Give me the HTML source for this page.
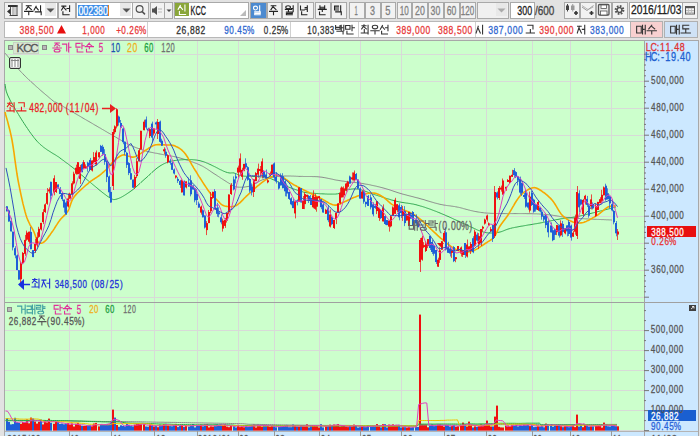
<!DOCTYPE html><html><head><meta charset="utf-8"><style>
html,body{margin:0;padding:0;width:700px;height:436px;overflow:hidden;background:#e2e2e2;font-family:"Liberation Sans",sans-serif;}
</style></head><body>
<div style="position:absolute;left:4px;top:2px;width:16px;height:15px;background:#f2f2f2;border:1px solid #a9a9a9;"></div>
<svg style="position:absolute;left:0;top:0" width="30" height="20"><rect x="8" y="5" width="9.5" height="2" fill="#333"/><rect x="16.5" y="5" width="1" height="11" fill="#444"/><rect x="9.5" y="15" width="8" height="1" fill="#444"/><rect x="10" y="7" width="1" height="8" fill="#555"/><rect x="12.5" y="7" width="1" height="8" fill="#888"/><rect x="14.5" y="7" width="1" height="8" fill="#aaa"/><polygon points="7,11.5 10.5,8.5 10.5,14.5" fill="#333"/></svg>
<div style="position:absolute;left:22px;top:2px;width:34px;height:15px;background:#fff;border:1px solid #a9a9a9;"></div>
<div style="position:absolute;left:45px;top:3px;width:11px;height:13px;background:#e8e8e8;"></div>
<svg style="position:absolute;left:46px;top:8px" width="9" height="5"><polygon points="0.5,0.5 8.5,0.5 4.5,4.5" fill="#555"/></svg>
<div style="position:absolute;left:58px;top:2px;width:16px;height:15px;background:#f2f2f2;border:1px solid #a9a9a9;"></div>
<div style="position:absolute;left:76px;top:2px;width:55px;height:15px;background:#fff;border:1px solid #a9a9a9;"></div>
<div style="position:absolute;left:78px;top:5px;width:31px;height:11px;background:#3d8de8;"></div>
<div style="position:absolute;left:108px;top:5px;width:1px;height:11px;background:#e08020;"></div>
<div style="position:absolute;left:120px;top:3px;width:11px;height:13px;background:#e8e8e8;"></div>
<svg style="position:absolute;left:122px;top:8px" width="9" height="5"><polygon points="0.5,0.5 8.5,0.5 4.5,4.5" fill="#555"/></svg>
<div style="position:absolute;left:132px;top:2px;width:15px;height:15px;background:#f2f2f2;border:1px solid #a9a9a9;"></div>
<svg style="position:absolute;left:132px;top:2px" width="17" height="16"><circle cx="7.6" cy="7" r="3.4" fill="none" stroke="#505050" stroke-width="1.2"/><line x1="10.2" y1="9.6" x2="13" y2="12.4" stroke="#505050" stroke-width="1.5"/></svg>
<div style="position:absolute;left:150px;top:2px;width:13px;height:15px;background:#f2f2f2;border:1px solid #a9a9a9;"></div>
<svg style="position:absolute;left:150px;top:2px" width="15" height="16"><polygon points="2,6.5 4,6.5 7,4 7,13 4,10.5 2,10.5" fill="#505050"/><rect x="8.5" y="6.5" width="1" height="1" fill="#777"/><rect x="10.5" y="6.5" width="1" height="1" fill="#777"/><rect x="8.5" y="9.5" width="1" height="1" fill="#888"/><rect x="10.5" y="9.5" width="1" height="1" fill="#888"/></svg>
<div style="position:absolute;left:164px;top:2px;width:7px;height:15px;background:#f0f0f0;border:1px solid #a9a9a9;"></div>
<svg style="position:absolute;left:166px;top:9px" width="7" height="5"><polygon points="0.5,0.5 5.5,0.5 3,3" fill="#444"/></svg>
<div style="position:absolute;left:174px;top:2px;width:73px;height:15px;background:#fff;border:1px solid #a9a9a9;"></div>
<div style="position:absolute;left:175px;top:3px;width:14px;height:13px;background:#8aa63a;"></div>
<svg style="position:absolute;left:238px;top:9px" width="9" height="8"><polygon points="8,1 8,7 2,7" fill="#bbb"/></svg>
<div style="position:absolute;left:250px;top:2px;width:15px;height:15px;background:#4c8ad0;border:1px solid #a9a9a9;"></div>
<div style="position:absolute;left:267px;top:2px;width:13px;height:15px;background:#f2f2f2;border:1px solid #a9a9a9;"></div>
<div style="position:absolute;left:282px;top:2px;width:14px;height:15px;background:#f2f2f2;border:1px solid #a9a9a9;"></div>
<div style="position:absolute;left:298px;top:2px;width:14px;height:15px;background:#f2f2f2;border:1px solid #a9a9a9;"></div>
<div style="position:absolute;left:315px;top:2px;width:14px;height:15px;background:#f2f2f2;border:1px solid #a9a9a9;"></div>
<div style="position:absolute;left:331px;top:2px;width:14px;height:15px;background:#f2f2f2;border:1px solid #a9a9a9;"></div>
<div style="position:absolute;left:349px;top:2px;width:14px;height:15px;background:#f2f2f2;border:1px solid #a9a9a9;"></div>
<div style="position:absolute;left:365px;top:2px;width:14px;height:15px;background:#f2f2f2;border:1px solid #a9a9a9;"></div>
<div style="position:absolute;left:381px;top:2px;width:13px;height:15px;background:#f2f2f2;border:1px solid #a9a9a9;"></div>
<div style="position:absolute;left:397px;top:2px;width:13px;height:15px;background:#f2f2f2;border:1px solid #a9a9a9;"></div>
<div style="position:absolute;left:412px;top:2px;width:14px;height:15px;background:#f2f2f2;border:1px solid #a9a9a9;"></div>
<div style="position:absolute;left:428px;top:2px;width:14px;height:15px;background:#f2f2f2;border:1px solid #a9a9a9;"></div>
<div style="position:absolute;left:444px;top:2px;width:14px;height:15px;background:#f2f2f2;border:1px solid #a9a9a9;"></div>
<div style="position:absolute;left:460px;top:2px;width:14px;height:15px;background:#f2f2f2;border:1px solid #a9a9a9;"></div>
<div style="position:absolute;left:477px;top:2px;width:30px;height:15px;background:#f0f0f0;border:1px solid #a9a9a9;"></div>
<div style="position:absolute;left:496px;top:3px;width:11px;height:13px;background:#e8e8e8;"></div>
<svg style="position:absolute;left:497px;top:8px" width="9" height="5"><polygon points="0.5,0.5 8.5,0.5 4.5,4.5" fill="#aaa"/></svg>
<div style="position:absolute;left:510px;top:2px;width:23px;height:15px;background:#fff;border:1px solid #a9a9a9;"></div>
<div style="position:absolute;left:564px;top:2px;width:14px;height:15px;background:#f2f2f2;border:1px solid #a9a9a9;"></div>
<div style="position:absolute;left:580px;top:2px;width:14px;height:15px;background:#f2f2f2;border:1px solid #a9a9a9;"></div>
<div style="position:absolute;left:596px;top:2px;width:14px;height:15px;background:#f2f2f2;border:1px solid #a9a9a9;"></div>
<div style="position:absolute;left:612px;top:2px;width:14px;height:15px;background:#f2f2f2;border:1px solid #a9a9a9;"></div>
<svg style="position:absolute;left:564px;top:2px" width="64" height="16"><line x1="3.5" y1="2" x2="3.5" y2="9.5" stroke="#444"/><rect x="2" y="3.5" width="3" height="4.5" fill="#444"/><line x1="8.75" y1="2" x2="8.75" y2="9.5" stroke="#999"/><rect x="7" y="3.5" width="3.5" height="4.5" fill="#999"/><path d="M10 11h4M12 9v4" stroke="#333" stroke-width="1.6"/><path d="M18 5 L23 8.5 L29.5 3.5" fill="none" stroke="#999" stroke-width="1"/><path d="M18 3.5 L24 7.5 L29.5 5" fill="none" stroke="#aaa" stroke-width="0.8"/><path d="M25.5 11h4M27.5 9v4" stroke="#333" stroke-width="1.6"/><rect x="34.5" y="2.5" width="10.5" height="10.5" rx="1" fill="#e8e8e8" stroke="#555" stroke-width="1.3"/><rect x="37" y="3" width="5.5" height="3.5" fill="#fff" stroke="#555" stroke-width="0.8"/><rect x="36.5" y="9" width="6.5" height="4" fill="#fff" stroke="#555" stroke-width="0.8"/><circle cx="55.5" cy="8" r="3.6" fill="none" stroke="#555" stroke-width="2.6" stroke-dasharray="1.6 1.2"/><circle cx="55.5" cy="8" r="2.4" fill="none" stroke="#555" stroke-width="1.4"/></svg>
<div style="position:absolute;left:629px;top:2px;width:52px;height:15px;background:#fff;border:1px solid #a9a9a9;"></div>
<div style="position:absolute;left:682px;top:2px;width:14px;height:15px;background:#f2f2f2;border:1px solid #a9a9a9;"></div>
<svg style="position:absolute;left:684px;top:4px" width="12" height="12"><rect x="1.5" y="2.5" width="9" height="7.5" fill="#f4f4f4" stroke="#555"/><rect x="1" y="2" width="10" height="2.2" fill="#555"/><line x1="2" y1="6.5" x2="10" y2="6.5" stroke="#aaa" stroke-width="0.8"/><line x1="2" y1="8.3" x2="10" y2="8.3" stroke="#aaa" stroke-width="0.8"/><line x1="4.5" y1="4" x2="4.5" y2="10" stroke="#bbb" stroke-width="0.8"/><line x1="7.5" y1="4" x2="7.5" y2="10" stroke="#bbb" stroke-width="0.8"/></svg>
<div style="position:absolute;left:4px;top:21px;width:625px;height:15px;background:#fff;border:1px solid #b8b8b8;"></div>
<div style="position:absolute;left:147px;top:22px;width:1px;height:15px;background:#d0d0d0;"></div>
<div style="position:absolute;left:290px;top:22px;width:1px;height:15px;background:#d0d0d0;"></div>
<div style="position:absolute;left:358px;top:22px;width:1px;height:15px;background:#d0d0d0;"></div>
<div style="position:absolute;left:475px;top:22px;width:1px;height:15px;background:#d0d0d0;"></div>
<svg style="position:absolute;left:57px;top:25px" width="10" height="9"><polygon points="4.5,0 9,8.5 0,8.5" fill="#e81010"/></svg>
<div style="position:absolute;left:630px;top:21px;width:31px;height:15px;background:#f8d0d0;border:1px solid #b0b0b0;"></div>
<div style="position:absolute;left:664px;top:21px;width:32px;height:15px;background:#cfe2f6;border:1px solid #b0b0b0;"></div>
<svg style="position:absolute;left:0;top:0" width="700" height="436">
<rect x="4" y="40" width="695" height="400" fill="#a8a8a8"/>
<rect x="5" y="41" width="639" height="390" fill="#ccffcc"/>
<rect x="644" y="41" width="54" height="395" fill="#cce8ff"/>
<rect x="5" y="431" width="693" height="5" fill="#cce8ff"/>
<line x1="69.5" y1="41" x2="69.5" y2="431" stroke="#d8dad8" stroke-width="1"/>
<line x1="111.5" y1="41" x2="111.5" y2="431" stroke="#d8dad8" stroke-width="1"/>
<line x1="154.5" y1="41" x2="154.5" y2="431" stroke="#d8dad8" stroke-width="1"/>
<line x1="197.5" y1="41" x2="197.5" y2="431" stroke="#d8dad8" stroke-width="1"/>
<line x1="238.5" y1="41" x2="238.5" y2="431" stroke="#d8dad8" stroke-width="1"/>
<line x1="274.5" y1="41" x2="274.5" y2="431" stroke="#d8dad8" stroke-width="1"/>
<line x1="319.5" y1="41" x2="319.5" y2="431" stroke="#d8dad8" stroke-width="1"/>
<line x1="360.5" y1="41" x2="360.5" y2="431" stroke="#d8dad8" stroke-width="1"/>
<line x1="401.5" y1="41" x2="401.5" y2="431" stroke="#d8dad8" stroke-width="1"/>
<line x1="444.5" y1="41" x2="444.5" y2="431" stroke="#d8dad8" stroke-width="1"/>
<line x1="486.5" y1="41" x2="486.5" y2="431" stroke="#d8dad8" stroke-width="1"/>
<line x1="532.5" y1="41" x2="532.5" y2="431" stroke="#d8dad8" stroke-width="1"/>
<line x1="570.5" y1="41" x2="570.5" y2="431" stroke="#d8dad8" stroke-width="1"/>
<line x1="611.5" y1="41" x2="611.5" y2="431" stroke="#d8dad8" stroke-width="1"/>
<line x1="5" y1="54.5" x2="644" y2="54.5" stroke="#d8dad8" stroke-width="1"/>
<line x1="5" y1="81.5" x2="644" y2="81.5" stroke="#d8dad8" stroke-width="1"/>
<line x1="5" y1="108.5" x2="644" y2="108.5" stroke="#d8dad8" stroke-width="1"/>
<line x1="5" y1="135.5" x2="644" y2="135.5" stroke="#d8dad8" stroke-width="1"/>
<line x1="5" y1="162.5" x2="644" y2="162.5" stroke="#d8dad8" stroke-width="1"/>
<line x1="5" y1="189.5" x2="644" y2="189.5" stroke="#d8dad8" stroke-width="1"/>
<line x1="5" y1="216.5" x2="644" y2="216.5" stroke="#d8dad8" stroke-width="1"/>
<line x1="5" y1="243.5" x2="644" y2="243.5" stroke="#d8dad8" stroke-width="1"/>
<line x1="5" y1="270.5" x2="644" y2="270.5" stroke="#d8dad8" stroke-width="1"/>
<line x1="5" y1="297.5" x2="644" y2="297.5" stroke="#d8dad8" stroke-width="1"/>
<line x1="5" y1="330.5" x2="644" y2="330.5" stroke="#d8dad8" stroke-width="1"/>
<line x1="5" y1="350.5" x2="644" y2="350.5" stroke="#d8dad8" stroke-width="1"/>
<line x1="5" y1="370.5" x2="644" y2="370.5" stroke="#d8dad8" stroke-width="1"/>
<line x1="5" y1="390.5" x2="644" y2="390.5" stroke="#d8dad8" stroke-width="1"/>
<line x1="5" y1="410.5" x2="644" y2="410.5" stroke="#d8dad8" stroke-width="1"/>
<line x1="5" y1="430.5" x2="644" y2="430.5" stroke="#d8dad8" stroke-width="1"/>
<polyline points="5.0,53.0 5.5,53.6 6.2,54.4 6.8,55.2 7.6,56.1 8.4,57.1 9.3,58.2 10.2,59.4 11.2,60.6 12.2,61.8 13.3,63.1 14.4,64.4 15.5,65.7 16.7,67.1 17.9,68.4 19.1,69.8 20.3,71.1 21.5,72.4 22.8,73.7 24.0,75.0 24.9,75.9 25.8,76.7 26.7,77.7 27.7,78.6 28.7,79.6 29.8,80.5 30.8,81.5 31.9,82.5 33.0,83.5 34.2,84.5 35.3,85.6 36.4,86.6 37.6,87.6 38.7,88.6 39.8,89.6 40.9,90.6 42.0,91.5 43.1,92.5 44.2,93.4 45.2,94.3 46.2,95.1 47.2,95.9 48.1,96.7 49.0,97.5 49.8,98.2 50.6,98.8 51.3,99.4 52.0,100.0 53.7,101.4 54.4,102.0 54.5,102.1 54.5,102.0 54.7,101.9 55.4,102.1 57.0,102.9 60.0,104.6 60.6,104.9 61.2,105.3 61.9,105.7 62.7,106.1 63.4,106.6 64.2,107.1 65.0,107.6 65.9,108.1 66.8,108.6 67.7,109.1 68.7,109.7 69.7,110.3 70.7,110.9 71.7,111.5 72.8,112.1 73.9,112.7 75.0,113.4 76.1,114.0 77.2,114.7 78.3,115.3 79.5,116.0 80.7,116.7 81.8,117.4 83.0,118.1 84.2,118.8 85.4,119.5 86.6,120.2 87.8,120.9 88.9,121.5 90.1,122.2 91.3,122.9 92.5,123.6 93.6,124.3 94.8,125.0 95.9,125.6 97.1,126.3 98.2,127.0 99.3,127.6 100.4,128.2 101.4,128.8 102.5,129.5 103.5,130.0 104.5,130.6 105.4,131.2 106.4,131.7 107.3,132.3 108.2,132.8 109.0,133.3 109.8,133.7 110.6,134.2 111.3,134.6 112.0,135.0 113.8,136.1 115.5,137.0 117.0,137.9 118.3,138.7 119.5,139.4 120.6,140.0 121.6,140.6 122.4,141.1 123.2,141.5 124.0,141.9 124.7,142.3 125.4,142.7 126.1,143.1 126.8,143.4 127.5,143.8 128.3,144.2 129.1,144.6 130.0,145.0 131.1,145.5 132.1,146.0 133.2,146.4 134.2,146.9 135.2,147.3 136.2,147.7 137.2,148.1 138.2,148.4 139.2,148.8 140.2,149.1 141.2,149.5 142.2,149.8 143.2,150.1 144.1,150.4 145.1,150.7 146.0,151.0 147.0,151.3 148.1,151.6 149.0,151.8 150.0,152.0 150.9,152.3 151.8,152.4 152.8,152.6 153.7,152.8 154.6,153.0 155.6,153.2 156.6,153.3 157.7,153.5 158.8,153.8 160.0,154.0 160.9,154.2 161.8,154.3 162.7,154.5 163.6,154.7 164.6,154.9 165.6,155.0 166.6,155.2 167.6,155.4 168.6,155.6 169.6,155.8 170.7,155.9 171.7,156.1 172.8,156.3 173.8,156.5 174.9,156.8 175.9,157.0 176.9,157.2 178.0,157.5 179.0,157.7 180.0,158.0 181.0,158.3 182.0,158.6 183.1,158.9 184.1,159.2 185.1,159.5 186.2,159.8 187.2,160.2 188.3,160.5 189.3,160.9 190.4,161.2 191.4,161.6 192.4,161.9 193.4,162.3 194.4,162.7 195.4,163.1 196.4,163.4 197.3,163.8 198.2,164.2 199.1,164.6 200.0,165.0 201.2,165.6 202.3,166.1 203.4,166.7 204.4,167.3 205.4,167.9 206.4,168.5 207.3,169.1 208.3,169.8 209.2,170.4 210.1,171.0 211.1,171.7 212.0,172.3 213.0,173.0 214.0,173.6 215.0,174.3 216.1,174.9 217.2,175.7 218.3,176.4 219.4,177.1 220.5,177.9 221.6,178.6 222.7,179.3 223.8,180.0 224.9,180.7 225.9,181.3 226.8,181.9 227.7,182.5 228.6,183.0 229.9,183.8 231.0,184.5 232.0,185.1 232.9,185.7 233.8,186.1 234.7,186.5 235.8,186.8 237.0,187.0 237.9,187.1 238.8,187.2 239.7,187.2 240.7,187.2 241.7,187.2 242.7,187.2 243.8,187.1 244.9,187.0 245.9,186.8 247.0,186.7 248.0,186.5 249.0,186.3 250.0,186.0 251.0,185.7 252.1,185.3 253.1,184.8 254.1,184.3 255.1,183.7 256.1,183.1 257.1,182.5 258.0,182.0 259.0,181.4 260.0,180.9 261.0,180.4 262.0,180.0 263.0,179.6 264.0,179.3 265.0,179.0 266.0,178.7 267.0,178.4 268.0,178.2 269.0,178.0 270.0,177.7 271.0,177.5 272.0,177.3 273.0,177.2 274.0,177.0 275.0,176.8 276.0,176.7 277.0,176.6 277.9,176.5 278.9,176.4 279.9,176.3 280.9,176.2 281.9,176.2 282.9,176.1 283.9,176.1 284.9,176.0 286.0,176.0 286.9,176.0 287.8,176.0 288.8,176.0 289.7,176.0 290.6,176.0 291.5,176.1 292.5,176.1 293.5,176.1 294.5,176.2 295.5,176.2 296.6,176.3 297.7,176.3 298.8,176.4 300.0,176.4 300.9,176.4 301.8,176.4 302.7,176.4 303.6,176.5 304.6,176.5 305.6,176.5 306.6,176.5 307.6,176.5 308.6,176.5 309.6,176.5 310.7,176.5 311.7,176.5 312.8,176.6 313.8,176.6 314.9,176.6 315.9,176.7 316.9,176.7 318.0,176.8 319.0,176.9 320.0,177.0 321.0,177.1 322.0,177.2 323.0,177.4 324.0,177.6 324.9,177.7 325.9,177.9 326.9,178.1 327.9,178.3 328.8,178.5 329.8,178.7 330.8,178.9 331.8,179.1 332.8,179.3 333.8,179.6 334.8,179.8 335.8,180.0 336.8,180.2 337.9,180.3 338.9,180.5 340.0,180.7 340.9,180.8 341.9,181.0 342.9,181.1 343.9,181.2 344.9,181.4 345.9,181.5 346.9,181.6 347.9,181.7 348.9,181.8 350.0,181.9 351.0,182.1 352.0,182.2 353.0,182.3 354.1,182.4 355.1,182.5 356.1,182.6 357.1,182.8 358.1,182.9 359.1,183.0 360.1,183.2 361.1,183.3 362.1,183.4 363.0,183.6 364.1,183.8 365.1,184.0 366.2,184.2 367.2,184.3 368.3,184.5 369.3,184.7 370.3,184.9 371.3,185.2 372.3,185.4 373.3,185.6 374.3,185.8 375.3,186.0 376.3,186.2 377.2,186.5 378.2,186.7 379.2,186.9 380.1,187.2 381.1,187.4 382.0,187.7 383.0,187.9 384.0,188.2 385.1,188.5 386.1,188.8 387.1,189.1 388.1,189.4 389.1,189.7 390.1,190.0 391.1,190.4 392.1,190.7 393.0,191.0 394.0,191.4 395.0,191.7 396.0,192.0 397.0,192.4 398.0,192.7 399.0,193.0 400.0,193.3 401.0,193.6 402.0,193.9 403.0,194.2 403.9,194.4 404.9,194.7 405.9,194.9 406.9,195.2 407.9,195.5 408.9,195.7 409.9,196.0 410.9,196.2 411.9,196.5 412.9,196.7 413.9,197.0 414.9,197.3 415.9,197.5 416.9,197.8 418.0,198.0 419.0,198.3 420.0,198.6 421.0,198.9 422.0,199.2 423.0,199.4 424.0,199.7 425.0,200.0 426.0,200.4 427.0,200.7 428.1,201.0 429.1,201.3 430.1,201.6 431.1,201.9 432.2,202.2 433.2,202.5 434.2,202.8 435.2,203.1 436.2,203.3 437.2,203.6 438.1,203.8 439.1,204.1 440.0,204.3 441.1,204.5 442.1,204.7 443.0,204.9 444.0,205.1 444.9,205.2 445.7,205.3 446.6,205.5 447.5,205.6 448.4,205.7 449.3,205.8 450.2,205.9 451.2,206.1 452.2,206.2 453.3,206.4 454.5,206.5 455.7,206.8 457.0,207.0 457.8,207.2 458.6,207.3 459.4,207.5 460.2,207.7 461.0,207.9 461.8,208.1 462.6,208.3 463.4,208.6 464.3,208.8 465.1,209.0 466.0,209.3 466.9,209.5 467.8,209.7 468.7,210.0 469.7,210.2 470.6,210.5 471.6,210.7 472.6,210.9 473.7,211.2 474.8,211.4 475.9,211.6 477.0,211.8 478.2,212.0 479.4,212.2 480.6,212.4 481.9,212.6 483.2,212.7 484.6,212.9 486.0,213.0 486.8,213.1 487.6,213.1 488.4,213.2 489.3,213.2 490.1,213.3 491.0,213.3 491.9,213.4 492.9,213.4 493.8,213.4 494.8,213.5 495.7,213.5 496.7,213.5 497.7,213.5 498.8,213.5 499.8,213.6 500.8,213.6 501.9,213.6 503.0,213.6 504.0,213.6 505.1,213.6 506.2,213.6 507.3,213.6 508.4,213.6 509.5,213.6 510.6,213.6 511.7,213.6 512.8,213.6 513.9,213.6 515.0,213.6 516.1,213.6 517.2,213.6 518.3,213.6 519.4,213.6 520.5,213.6 521.6,213.6 522.7,213.6 523.8,213.6 524.8,213.6 525.9,213.6 526.9,213.7 528.0,213.7 529.0,213.7 530.0,213.7 531.0,213.7 532.0,213.7 532.9,213.7 533.9,213.8 534.8,213.8 535.7,213.8 536.6,213.8 537.5,213.9 538.4,213.9 539.2,214.0 540.0,214.0 541.3,214.1 542.6,214.2 543.8,214.3 545.0,214.4 546.1,214.5 547.2,214.6 548.3,214.7 549.4,214.8 550.4,215.0 551.4,215.1 552.3,215.2 553.3,215.4 554.2,215.5 555.1,215.7 556.0,215.8 556.9,215.9 557.8,216.1 558.6,216.2 559.5,216.4 560.4,216.5 561.3,216.7 562.1,216.8 563.0,216.9 564.0,217.1 564.9,217.2 565.8,217.3 566.8,217.5 567.8,217.6 568.8,217.7 569.8,217.8 570.9,217.9 572.0,218.0 572.9,218.1 573.9,218.1 574.8,218.2 575.9,218.3 576.9,218.4 577.9,218.4 579.0,218.5 580.1,218.6 581.2,218.6 582.4,218.7 583.5,218.7 584.7,218.8 585.8,218.9 587.0,218.9 588.2,219.0 589.3,219.0 590.5,219.1 591.7,219.1 592.8,219.2 594.0,219.2 595.1,219.3 596.3,219.3 597.4,219.4 598.5,219.4 599.6,219.5 600.6,219.5 601.7,219.6 602.7,219.6 603.7,219.6 604.6,219.7 605.5,219.7 606.4,219.8 607.3,219.8 608.1,219.8 608.9,219.9 609.6,219.9 610.3,219.9 610.9,219.9 611.5,220.0 612.0,220.0" fill="none" stroke="#8c8c8c" stroke-width="1.00" stroke-linejoin="round"/>
<polyline points="5.0,84.0 5.3,85.8 5.6,88.1 6.2,91.1 7.6,95.0 10.0,100.0 10.6,101.1 11.3,102.4 12.1,103.7 12.9,105.1 13.7,106.5 14.6,108.0 15.5,109.6 16.5,111.3 17.5,112.9 18.6,114.6 19.6,116.4 20.7,118.1 21.8,119.9 22.9,121.6 24.1,123.4 25.2,125.1 26.3,126.8 27.5,128.5 28.6,130.2 29.7,131.8 30.8,133.3 31.9,134.8 33.0,136.2 34.0,137.6 35.0,138.8 36.0,140.0 37.0,141.2 38.1,142.3 39.2,143.4 40.2,144.4 41.3,145.3 42.4,146.2 43.4,147.1 44.5,147.9 45.6,148.7 46.6,149.4 47.7,150.2 48.8,150.8 49.8,151.5 50.8,152.1 51.8,152.8 52.8,153.4 53.8,154.0 54.8,154.5 55.7,155.1 56.6,155.7 57.5,156.3 58.4,156.8 59.2,157.4 60.0,158.0 61.3,159.0 62.5,159.9 63.7,160.7 64.7,161.5 65.7,162.3 66.7,163.0 67.6,163.6 68.5,164.3 69.4,165.0 70.2,165.7 71.1,166.3 72.1,167.1 73.0,167.8 74.0,168.6 75.0,169.4 76.0,170.2 77.0,171.1 78.0,171.9 78.9,172.7 79.9,173.6 80.9,174.5 81.9,175.3 83.0,176.2 84.0,177.1 85.1,178.1 86.2,179.0 87.4,180.0 88.6,181.0 89.5,181.7 90.4,182.5 91.4,183.3 92.4,184.2 93.5,185.1 94.6,186.0 95.7,186.9 96.8,187.8 97.9,188.7 99.0,189.7 100.1,190.6 101.2,191.4 102.2,192.3 103.3,193.1 104.3,193.9 105.3,194.6 106.2,195.3 107.0,196.0 107.9,196.5 108.6,197.0 110.2,198.0 111.4,198.7 112.4,199.2 113.2,199.5 113.9,199.6 114.8,199.5 115.8,199.3 117.0,199.0 117.8,198.7 118.7,198.4 119.6,198.0 120.6,197.6 121.5,197.1 122.6,196.5 123.6,195.9 124.6,195.3 125.7,194.6 126.8,193.9 127.8,193.2 128.9,192.5 130.0,191.7 131.0,191.0 132.0,190.3 133.0,189.5 134.0,188.7 135.0,187.9 136.0,187.0 137.0,186.1 138.0,185.2 139.0,184.3 140.0,183.4 141.0,182.4 142.0,181.5 143.0,180.6 144.0,179.7 145.0,178.8 146.0,178.0 147.0,177.1 148.0,176.2 149.0,175.2 150.0,174.3 151.0,173.4 152.0,172.4 153.0,171.5 154.0,170.6 155.0,169.8 156.0,168.9 157.0,168.1 158.0,167.4 159.0,166.7 160.0,166.0 161.0,165.4 161.9,164.9 162.8,164.4 163.7,163.9 164.6,163.5 165.4,163.1 166.4,162.7 167.3,162.3 168.2,162.0 169.2,161.7 170.3,161.4 171.3,161.1 172.5,160.9 173.7,160.7 175.0,160.5 175.8,160.4 176.7,160.3 177.5,160.2 178.4,160.1 179.3,160.0 180.3,159.9 181.3,159.8 182.2,159.8 183.2,159.7 184.2,159.6 185.3,159.6 186.3,159.6 187.4,159.5 188.4,159.5 189.5,159.5 190.5,159.6 191.6,159.6 192.7,159.7 193.7,159.8 194.8,159.9 195.9,160.0 196.9,160.1 197.9,160.3 199.0,160.5 200.0,160.7 201.0,161.0 202.1,161.3 203.2,161.6 204.3,162.0 205.4,162.4 206.5,162.9 207.6,163.3 208.8,163.9 209.9,164.4 211.1,164.9 212.2,165.5 213.3,166.0 214.5,166.6 215.6,167.1 216.6,167.7 217.7,168.2 218.7,168.8 219.7,169.3 220.7,169.8 221.7,170.2 222.6,170.7 223.4,171.1 224.2,171.4 225.0,171.7 225.7,172.0 227.6,172.6 229.0,172.9 230.1,173.0 230.9,173.0 231.6,172.9 232.3,172.9 233.0,172.8 234.0,173.0 234.9,173.3 235.7,173.6 236.5,173.9 237.3,174.3 238.1,174.7 239.1,175.1 240.2,175.4 241.5,175.7 243.0,176.0 243.8,176.1 244.6,176.2 245.5,176.2 246.4,176.3 247.4,176.3 248.4,176.4 249.5,176.4 250.6,176.4 251.7,176.5 252.9,176.5 254.0,176.5 255.1,176.5 256.3,176.6 257.4,176.6 258.5,176.6 259.5,176.7 260.5,176.7 261.5,176.8 262.4,176.8 263.2,176.9 264.0,177.0 265.4,177.2 266.7,177.4 267.7,177.7 268.7,177.9 269.6,178.2 270.4,178.5 271.2,178.8 272.0,179.2 273.0,179.6 274.0,180.0 274.9,180.4 275.9,180.8 276.8,181.3 277.8,181.8 278.8,182.3 279.8,182.9 280.8,183.4 281.8,184.0 282.8,184.5 283.9,185.0 284.9,185.5 286.0,186.0 286.9,186.4 287.9,186.8 288.9,187.2 290.0,187.6 291.0,188.0 292.1,188.4 293.1,188.8 294.2,189.1 295.2,189.5 296.2,189.8 297.2,190.1 298.2,190.5 299.1,190.7 300.0,191.0 301.1,191.3 302.0,191.6 302.8,191.9 303.5,192.1 304.2,192.2 305.0,192.4 305.9,192.6 307.0,192.7 308.4,192.9 310.0,193.0 310.7,193.1 311.5,193.1 312.4,193.2 313.3,193.3 314.2,193.3 315.2,193.4 316.3,193.5 317.3,193.5 318.4,193.6 319.6,193.7 320.7,193.8 321.8,193.8 323.0,193.9 324.2,193.9 325.3,194.0 326.4,194.0 327.6,194.1 328.7,194.1 329.7,194.1 330.8,194.1 331.8,194.1 332.7,194.1 333.6,194.1 334.5,194.1 335.3,194.1 336.0,194.0 337.6,193.8 339.0,193.5 340.1,193.1 341.0,192.6 341.8,192.1 342.6,191.6 343.3,191.1 344.1,190.7 345.0,190.3 346.0,190.0 346.9,189.8 347.9,189.6 348.9,189.4 349.8,189.3 350.8,189.2 351.9,189.0 352.9,189.0 354.0,188.9 355.1,188.9 356.2,189.0 357.4,189.1 358.6,189.3 359.5,189.5 360.4,189.7 361.3,189.9 362.2,190.2 363.2,190.5 364.1,190.8 365.1,191.2 366.1,191.5 367.1,191.9 368.1,192.3 369.2,192.7 370.2,193.1 371.3,193.5 372.4,193.9 373.5,194.3 374.6,194.6 375.7,195.0 376.6,195.3 377.6,195.6 378.5,195.9 379.5,196.2 380.5,196.5 381.5,196.9 382.5,197.2 383.6,197.5 384.6,197.8 385.6,198.2 386.7,198.5 387.7,198.8 388.8,199.1 389.8,199.4 390.9,199.8 391.9,200.1 393.0,200.3 394.0,200.6 395.0,200.9 396.0,201.2 397.0,201.4 398.0,201.6 399.0,201.9 400.0,202.0 401.0,202.2 402.0,202.4 403.0,202.5 404.0,202.7 404.9,202.8 405.9,203.0 406.9,203.1 407.9,203.2 408.8,203.4 409.8,203.5 410.8,203.7 411.8,203.9 412.8,204.0 413.8,204.2 414.9,204.5 415.9,204.7 417.0,205.0 417.9,205.3 418.9,205.5 419.8,205.8 420.7,206.1 421.7,206.3 422.6,206.6 423.5,206.9 424.5,207.2 425.4,207.5 426.4,207.9 427.3,208.2 428.3,208.5 429.3,208.9 430.3,209.2 431.3,209.6 432.3,210.0 433.4,210.4 434.4,210.8 435.5,211.2 436.6,211.6 437.7,212.1 438.8,212.5 440.0,213.0 440.9,213.4 441.8,213.8 442.8,214.2 443.8,214.6 444.8,215.0 445.8,215.5 446.9,216.0 448.0,216.4 449.1,216.9 450.2,217.4 451.3,217.9 452.4,218.4 453.6,219.0 454.7,219.5 455.8,220.0 456.9,220.5 458.0,221.0 459.1,221.5 460.2,222.0 461.3,222.5 462.3,223.0 463.4,223.5 464.4,223.9 465.3,224.4 466.3,224.8 467.2,225.2 468.0,225.6 468.8,226.0 469.6,226.4 470.3,226.7 471.0,227.0 473.0,227.9 474.5,228.6 475.6,229.1 476.5,229.6 477.2,229.9 477.8,230.2 478.4,230.4 479.1,230.7 480.0,231.0 481.0,231.3 482.0,231.6 482.9,231.9 483.9,232.2 484.9,232.4 485.9,232.6 486.9,232.8 487.9,232.9 489.0,233.0 489.9,233.0 490.9,233.0 491.8,233.0 492.8,233.0 493.8,232.9 494.8,232.8 495.8,232.7 496.9,232.6 497.9,232.4 499.0,232.2 500.0,232.0 500.9,231.8 501.8,231.5 502.6,231.2 503.3,230.9 504.1,230.6 504.9,230.2 505.8,229.9 506.8,229.5 507.9,229.1 509.1,228.8 510.4,228.4 512.0,228.0 512.7,227.8 513.5,227.7 514.4,227.5 515.2,227.3 516.1,227.2 517.1,227.0 518.1,226.8 519.1,226.6 520.1,226.4 521.1,226.2 522.2,226.1 523.3,225.9 524.4,225.7 525.5,225.5 526.6,225.3 527.7,225.1 528.8,224.9 529.9,224.8 531.0,224.6 532.1,224.4 533.2,224.2 534.2,224.0 535.3,223.8 536.3,223.7 537.3,223.5 538.2,223.3 539.1,223.2 540.0,223.0 541.2,222.8 542.3,222.6 543.4,222.3 544.5,222.1 545.6,221.9 546.6,221.7 547.6,221.5 548.6,221.3 549.5,221.1 550.5,220.9 551.4,220.7 552.4,220.5 553.3,220.3 554.3,220.1 555.2,219.9 556.1,219.7 557.1,219.5 558.0,219.4 559.0,219.2 560.0,219.0 561.0,218.8 561.9,218.7 562.8,218.6 563.7,218.4 564.6,218.3 565.5,218.2 566.4,218.1 567.2,218.0 568.1,217.9 569.0,217.8 569.9,217.7 570.8,217.6 571.8,217.5 572.8,217.3 573.9,217.1 575.0,217.0 576.1,216.8 577.4,216.5 578.6,216.3 580.0,216.0 580.8,215.8 581.7,215.6 582.6,215.4 583.5,215.2 584.5,215.0 585.5,214.7 586.5,214.5 587.6,214.2 588.7,214.0 589.8,213.7 591.0,213.4 592.1,213.1 593.3,212.8 594.5,212.5 595.7,212.2 596.9,211.9 598.1,211.6 599.2,211.3 600.4,211.0 601.6,210.7 602.7,210.4 603.9,210.1 605.0,209.8 606.1,209.6 607.1,209.3 608.2,209.0 609.2,208.8 610.1,208.5 611.0,208.3 611.9,208.0 612.7,207.8 613.5,207.6 614.2,207.5 614.9,207.3 615.5,207.1 616.0,207.0" fill="none" stroke="#30a850" stroke-width="1.00" stroke-linejoin="round"/>
<polyline points="5.0,112.0 5.6,114.4 6.5,117.6 7.6,121.4 8.7,125.7 9.9,130.3 11.0,135.1 12.0,140.0 13.0,146.0 14.0,152.6 14.9,159.6 15.9,166.6 16.9,173.5 18.0,180.0 18.9,184.7 19.9,189.5 20.9,194.3 21.9,198.9 22.9,203.4 24.0,207.6 25.0,211.5 26.0,215.0 27.0,218.0 28.1,220.7 29.2,223.0 30.2,225.1 31.3,226.9 32.3,228.7 33.2,230.3 34.0,232.0 35.2,235.2 36.1,238.1 37.0,240.4 38.0,242.0 38.9,242.7 39.8,243.1 40.8,243.2 41.8,243.1 42.9,242.7 44.0,242.0 44.9,241.2 45.9,240.2 46.9,239.1 47.9,237.8 48.9,236.3 50.0,234.9 51.0,233.4 52.0,232.0 53.0,230.6 54.0,229.1 55.0,227.5 56.0,225.9 57.0,224.4 58.0,222.8 59.0,221.4 60.0,220.0 61.0,218.8 62.0,217.7 63.1,216.6 64.1,215.6 65.1,214.6 66.1,213.5 67.1,212.3 68.0,211.0 69.0,209.0 69.8,206.7 70.6,204.3 71.4,201.9 72.5,199.4 74.0,197.0 74.8,196.0 75.7,194.9 76.6,193.9 77.7,192.8 78.8,191.7 79.9,190.6 81.0,189.6 82.2,188.5 83.4,187.5 84.5,186.5 85.6,185.5 86.7,184.6 87.7,183.8 88.6,183.0 89.8,182.0 90.9,181.1 92.0,180.4 93.1,179.6 94.1,179.0 95.0,178.4 96.0,177.8 96.9,177.2 97.7,176.6 98.6,176.0 99.8,175.1 100.8,174.3 101.8,173.5 102.7,172.7 103.7,171.9 104.6,171.0 105.7,170.0 106.7,169.0 107.7,167.9 108.7,166.7 109.7,165.5 110.8,164.3 111.8,163.1 112.9,162.0 114.0,161.0 115.0,160.2 115.9,159.3 116.9,158.5 117.8,157.7 118.8,157.0 119.8,156.3 120.9,155.7 121.9,155.3 123.0,155.0 123.9,154.9 124.9,155.0 125.8,155.2 126.8,155.5 127.8,155.9 128.8,156.2 129.8,156.6 130.9,156.9 131.9,157.1 133.0,157.1 134.0,157.0 135.0,156.7 136.0,156.3 137.0,155.8 138.0,155.3 139.1,154.6 140.1,153.9 141.2,153.2 142.2,152.5 143.2,151.8 144.2,151.2 145.1,150.5 146.0,150.0 147.1,149.3 148.2,148.7 149.1,148.0 150.1,147.4 151.0,146.8 152.0,146.2 152.9,145.7 153.9,145.3 155.0,145.0 155.9,144.8 156.9,144.7 157.9,144.6 158.9,144.6 160.0,144.6 161.0,144.7 162.1,144.7 163.1,144.8 164.1,144.9 165.1,144.9 166.0,145.0 167.1,145.0 168.1,145.0 169.1,145.0 170.1,145.0 171.1,145.1 172.0,145.2 173.0,145.4 174.0,145.6 175.0,146.0 176.0,146.5 177.1,147.0 178.1,147.5 179.2,148.2 180.2,148.9 181.3,149.7 182.4,150.7 183.5,151.8 184.6,153.0 185.6,154.3 186.6,155.7 187.6,157.2 188.5,158.9 189.6,160.6 190.6,162.4 191.6,164.3 192.7,166.2 193.8,168.1 195.0,170.0 196.0,171.5 197.0,173.1 198.0,174.8 199.1,176.6 200.2,178.3 201.4,180.1 202.5,181.9 203.6,183.6 204.7,185.3 205.8,186.9 206.8,188.4 207.7,189.8 208.6,191.0 209.9,192.7 211.1,194.2 212.2,195.4 213.2,196.5 214.2,197.4 215.1,198.3 216.1,199.1 217.0,200.0 218.0,201.0 219.0,202.0 219.9,203.0 220.7,203.8 221.7,204.6 222.8,205.2 224.0,205.7 224.9,206.0 225.8,206.2 226.9,206.4 227.9,206.5 229.0,206.6 230.1,206.7 231.3,206.7 232.4,206.6 233.5,206.4 234.6,206.1 235.7,205.7 236.7,205.2 237.8,204.5 238.8,203.7 239.8,202.9 240.8,201.9 241.8,200.9 242.8,199.9 243.8,198.8 244.8,197.8 245.9,196.7 247.0,195.7 247.9,194.8 248.9,193.9 249.9,193.0 250.9,192.1 252.0,191.1 253.0,190.1 254.0,189.2 255.1,188.2 256.1,187.3 257.1,186.4 258.1,185.6 259.1,184.8 260.0,184.0 261.1,183.2 262.1,182.4 263.2,181.6 264.2,180.9 265.2,180.2 266.2,179.5 267.2,178.9 268.2,178.4 269.1,177.9 270.1,177.4 271.0,177.0 272.1,176.6 273.1,176.2 274.1,175.8 275.0,175.6 276.0,175.4 276.9,175.3 277.9,175.3 278.9,175.4 280.0,175.7 280.9,176.0 281.9,176.5 282.9,177.1 283.9,177.8 285.0,178.6 286.0,179.4 287.1,180.2 288.1,180.9 289.1,181.7 290.1,182.4 291.0,183.0 292.0,183.6 292.9,184.2 293.7,184.7 294.5,185.1 295.4,185.6 296.3,186.0 297.3,186.6 298.5,187.2 300.0,188.0 300.8,188.4 301.6,188.8 302.5,189.3 303.4,189.7 304.4,190.2 305.4,190.7 306.4,191.2 307.5,191.8 308.6,192.3 309.7,192.9 310.8,193.4 311.9,194.0 313.0,194.5 314.1,195.1 315.2,195.6 316.2,196.1 317.2,196.6 318.2,197.1 319.1,197.6 320.0,198.0 321.2,198.6 322.3,199.2 323.5,199.9 324.6,200.5 325.6,201.1 326.6,201.7 327.6,202.3 328.6,202.9 329.5,203.4 330.5,203.8 331.4,204.2 332.3,204.6 333.1,204.8 334.0,205.0 335.1,205.1 336.2,205.1 337.1,204.9 338.1,204.7 339.0,204.3 339.9,203.9 340.8,203.5 341.8,203.0 342.8,202.5 344.0,202.0 344.9,201.6 345.8,201.2 346.8,200.8 347.8,200.3 348.9,199.8 349.9,199.3 351.0,198.8 352.1,198.3 353.2,197.8 354.3,197.3 355.4,196.9 356.5,196.4 357.6,196.0 358.6,195.7 359.6,195.4 360.7,195.1 361.8,194.8 362.9,194.5 363.9,194.2 365.0,193.9 366.1,193.7 367.1,193.5 368.2,193.3 369.2,193.2 370.2,193.1 371.2,193.0 372.1,193.0 373.0,193.0 374.2,193.1 375.3,193.3 376.3,193.6 377.3,193.9 378.2,194.3 379.1,194.7 380.1,195.2 381.0,195.8 382.0,196.4 383.0,197.0 383.9,197.6 384.9,198.3 385.8,199.1 386.7,199.9 387.6,200.7 388.5,201.6 389.5,202.4 390.5,203.3 391.6,204.1 392.8,204.9 394.0,205.7 394.9,206.2 395.8,206.6 396.7,207.1 397.8,207.5 398.8,208.0 399.9,208.4 401.0,208.9 402.1,209.3 403.2,209.7 404.3,210.2 405.3,210.6 406.4,211.0 407.4,211.4 408.4,211.8 409.3,212.2 410.2,212.6 411.0,213.0 412.4,213.7 413.5,214.4 414.6,215.0 415.6,215.6 416.5,216.3 417.3,216.9 418.2,217.6 419.1,218.3 420.0,219.0 421.1,219.9 422.0,220.7 423.0,221.6 424.0,222.6 425.0,223.5 426.1,224.6 427.3,225.7 428.6,227.0 429.5,227.8 430.4,228.6 431.3,229.5 432.3,230.4 433.3,231.4 434.4,232.4 435.5,233.4 436.6,234.4 437.6,235.4 438.7,236.4 439.8,237.3 440.9,238.3 442.0,239.2 443.0,240.0 444.0,240.8 445.0,241.7 446.0,242.5 447.0,243.3 448.0,244.1 449.0,244.9 450.0,245.7 451.0,246.5 452.0,247.2 453.0,247.9 454.0,248.5 455.0,249.0 456.0,249.6 457.0,250.0 458.0,250.4 459.0,250.7 460.1,251.0 461.1,251.3 462.1,251.5 463.1,251.7 464.2,251.9 465.2,251.9 466.2,252.0 467.3,252.0 468.3,251.9 469.3,251.8 470.4,251.6 471.4,251.4 472.5,251.1 473.5,250.7 474.6,250.2 475.7,249.6 476.9,249.0 478.0,248.4 479.1,247.7 480.2,246.9 481.3,246.2 482.3,245.5 483.3,244.8 484.3,244.2 485.2,243.5 486.0,243.0 487.3,242.2 488.5,241.4 489.6,240.8 490.5,240.2 491.4,239.5 492.3,238.8 493.1,238.0 494.0,237.0 495.1,235.5 496.1,233.7 497.0,231.8 497.9,229.9 498.9,227.9 500.0,226.0 500.9,224.7 501.8,223.4 502.7,222.2 503.6,221.0 504.6,219.7 505.7,218.3 506.8,216.8 508.0,215.0 508.9,213.7 509.8,212.2 510.7,210.6 511.7,208.9 512.7,207.1 513.8,205.3 514.8,203.5 515.9,201.8 516.9,200.2 518.0,198.6 519.0,197.2 520.0,196.0 521.0,194.9 522.0,193.9 523.1,193.0 524.1,192.1 525.2,191.4 526.2,190.7 527.3,190.1 528.3,189.5 529.3,189.0 530.2,188.6 531.1,188.3 532.0,188.0 533.2,187.7 534.2,187.6 535.1,187.7 536.0,187.9 536.9,188.2 537.8,188.7 538.8,189.3 540.0,190.0 540.9,190.5 541.8,191.1 542.7,191.8 543.7,192.5 544.7,193.2 545.8,194.1 546.8,194.9 547.9,195.9 548.9,196.8 550.0,197.8 551.0,198.9 552.0,200.0 553.0,201.2 554.0,202.6 554.9,204.0 555.9,205.6 556.8,207.1 557.8,208.8 558.7,210.3 559.7,211.9 560.7,213.4 561.8,214.7 562.9,215.9 564.0,217.0 564.9,217.7 565.8,218.4 566.8,219.0 567.7,219.6 568.7,220.1 569.7,220.6 570.7,221.1 571.8,221.5 572.8,221.9 573.8,222.2 574.9,222.5 575.9,222.7 576.9,222.8 578.0,222.9 579.0,223.0 580.0,223.0 581.0,222.9 582.0,222.8 583.1,222.5 584.1,222.2 585.1,221.8 586.2,221.4 587.2,220.9 588.2,220.4 589.3,219.9 590.3,219.3 591.3,218.8 592.3,218.2 593.2,217.6 594.2,217.1 595.1,216.5 596.0,216.0 597.2,215.3 598.3,214.5 599.4,213.7 600.4,212.9 601.5,212.0 602.5,211.1 603.5,210.3 604.4,209.5 605.4,208.7 606.3,208.1 607.2,207.5 608.0,207.0 609.2,206.5 610.5,206.2 611.6,206.0 612.8,205.9 613.8,206.0 614.7,206.0 615.4,206.0 616.0,206.0" fill="none" stroke="#f8a800" stroke-width="1.60" stroke-linejoin="round"/>
<rect x="6" y="206.3" width="1" height="5.0" fill="#1f5fd8" fill-opacity="0.75"/>
<rect x="6" y="206.3" width="2" height="5.0" fill="#1f5fd8"/>
<rect x="8" y="209.4" width="1" height="12.1" fill="#1f5fd8" fill-opacity="0.75"/>
<rect x="8" y="210.4" width="2" height="11.1" fill="#1f5fd8"/>
<rect x="11" y="217.7" width="1" height="13.7" fill="#1f5fd8" fill-opacity="0.75"/>
<rect x="10" y="220.7" width="2" height="10.7" fill="#1f5fd8"/>
<rect x="12" y="231.7" width="1" height="18.7" fill="#1f5fd8" fill-opacity="0.75"/>
<rect x="12" y="231.7" width="2" height="15.7" fill="#1f5fd8"/>
<rect x="15" y="246.2" width="1" height="12.1" fill="#1f5fd8" fill-opacity="0.75"/>
<rect x="14" y="248.2" width="2" height="7.1" fill="#1f5fd8"/>
<rect x="17" y="254.4" width="1" height="15.7" fill="#1f5fd8" fill-opacity="0.75"/>
<rect x="16" y="255.4" width="2" height="14.7" fill="#1f5fd8"/>
<rect x="18" y="270.2" width="1" height="9.3" fill="#1f5fd8" fill-opacity="0.75"/>
<rect x="18" y="270.2" width="2" height="9.3" fill="#1f5fd8"/>
<rect x="20" y="261.4" width="1" height="22.9" fill="#f01010" fill-opacity="0.75"/>
<rect x="20" y="263.4" width="2" height="15.9" fill="#f01010"/>
<rect x="22" y="252.0" width="1" height="11.9" fill="#f01010" fill-opacity="0.75"/>
<rect x="22" y="253.0" width="2" height="9.9" fill="#f01010"/>
<rect x="25" y="234.9" width="1" height="20.9" fill="#f01010" fill-opacity="0.75"/>
<rect x="24" y="239.9" width="2" height="13.9" fill="#f01010"/>
<rect x="26" y="230.6" width="1" height="10.1" fill="#f01010" fill-opacity="0.75"/>
<rect x="26" y="232.6" width="2" height="7.1" fill="#f01010"/>
<rect x="29" y="231.7" width="1" height="12.0" fill="#f01010" fill-opacity="0.75"/>
<rect x="28" y="231.7" width="2" height="10.0" fill="#f01010"/>
<rect x="30" y="226.9" width="1" height="22.3" fill="#1f5fd8" fill-opacity="0.75"/>
<rect x="30" y="231.9" width="2" height="17.3" fill="#1f5fd8"/>
<rect x="33" y="250.1" width="1" height="7.0" fill="#1f5fd8" fill-opacity="0.75"/>
<rect x="32" y="250.1" width="2" height="7.0" fill="#1f5fd8"/>
<rect x="35" y="239.0" width="1" height="14.0" fill="#f01010" fill-opacity="0.75"/>
<rect x="34" y="244.0" width="2" height="7.0" fill="#f01010"/>
<rect x="37" y="232.3" width="1" height="15.0" fill="#f01010" fill-opacity="0.75"/>
<rect x="36" y="237.3" width="2" height="8.0" fill="#f01010"/>
<rect x="38" y="226.8" width="1" height="11.0" fill="#f01010" fill-opacity="0.75"/>
<rect x="38" y="228.8" width="2" height="8.0" fill="#f01010"/>
<rect x="41" y="222.9" width="1" height="7.6" fill="#f01010" fill-opacity="0.75"/>
<rect x="40" y="222.9" width="2" height="6.6" fill="#f01010"/>
<rect x="43" y="209.2" width="1" height="14.9" fill="#f01010" fill-opacity="0.75"/>
<rect x="42" y="212.2" width="2" height="9.9" fill="#f01010"/>
<rect x="45" y="203.4" width="1" height="9.6" fill="#f01010" fill-opacity="0.75"/>
<rect x="44" y="204.4" width="2" height="7.6" fill="#f01010"/>
<rect x="47" y="188.0" width="1" height="16.8" fill="#f01010" fill-opacity="0.75"/>
<rect x="46" y="193.0" width="2" height="10.8" fill="#f01010"/>
<rect x="49" y="187.4" width="1" height="6.0" fill="#f01010" fill-opacity="0.75"/>
<rect x="48" y="189.4" width="2" height="2.0" fill="#f01010"/>
<rect x="50" y="181.8" width="1" height="19.0" fill="#1f5fd8" fill-opacity="0.75"/>
<rect x="50" y="181.8" width="2" height="14.0" fill="#1f5fd8"/>
<rect x="54" y="175.3" width="1" height="20.0" fill="#f01010" fill-opacity="0.75"/>
<rect x="53" y="178.3" width="2" height="14.0" fill="#f01010"/>
<rect x="56" y="182.0" width="1" height="11.0" fill="#f01010" fill-opacity="0.75"/>
<rect x="55" y="182.0" width="2" height="10.0" fill="#f01010"/>
<rect x="58" y="184.5" width="1" height="4.0" fill="#1f5fd8" fill-opacity="0.75"/>
<rect x="57" y="184.5" width="2" height="4.0" fill="#1f5fd8"/>
<rect x="60" y="187.0" width="1" height="7.0" fill="#1f5fd8" fill-opacity="0.75"/>
<rect x="59" y="189.0" width="2" height="5.0" fill="#1f5fd8"/>
<rect x="62" y="192.1" width="1" height="9.0" fill="#1f5fd8" fill-opacity="0.75"/>
<rect x="61" y="193.1" width="2" height="6.0" fill="#1f5fd8"/>
<rect x="64" y="199.6" width="1" height="13.0" fill="#1f5fd8" fill-opacity="0.75"/>
<rect x="63" y="199.6" width="2" height="8.0" fill="#1f5fd8"/>
<rect x="66" y="200.5" width="1" height="14.0" fill="#1f5fd8" fill-opacity="0.75"/>
<rect x="65" y="202.5" width="2" height="12.0" fill="#1f5fd8"/>
<rect x="68" y="193.5" width="1" height="14.0" fill="#f01010" fill-opacity="0.75"/>
<rect x="67" y="198.5" width="2" height="8.0" fill="#f01010"/>
<rect x="69" y="192.7" width="1" height="5.9" fill="#f01010" fill-opacity="0.75"/>
<rect x="69" y="193.7" width="2" height="4.9" fill="#f01010"/>
<rect x="72" y="181.3" width="1" height="15.1" fill="#f01010" fill-opacity="0.75"/>
<rect x="71" y="183.3" width="2" height="11.1" fill="#f01010"/>
<rect x="73" y="171.7" width="1" height="12.7" fill="#f01010" fill-opacity="0.75"/>
<rect x="73" y="173.7" width="2" height="9.7" fill="#f01010"/>
<rect x="76" y="164.7" width="1" height="10.0" fill="#f01010" fill-opacity="0.75"/>
<rect x="75" y="167.7" width="2" height="6.0" fill="#f01010"/>
<rect x="77" y="162.2" width="1" height="12.0" fill="#f01010" fill-opacity="0.75"/>
<rect x="77" y="162.2" width="2" height="12.0" fill="#f01010"/>
<rect x="80" y="164.9" width="1" height="19.0" fill="#f01010" fill-opacity="0.75"/>
<rect x="79" y="166.9" width="2" height="12.0" fill="#f01010"/>
<rect x="82" y="162.2" width="1" height="10.0" fill="#1f5fd8" fill-opacity="0.75"/>
<rect x="81" y="164.2" width="2" height="8.0" fill="#1f5fd8"/>
<rect x="83" y="160.1" width="1" height="9.0" fill="#f01010" fill-opacity="0.75"/>
<rect x="83" y="162.1" width="2" height="6.0" fill="#f01010"/>
<rect x="85" y="164.4" width="1" height="4.0" fill="#f01010" fill-opacity="0.75"/>
<rect x="85" y="166.4" width="2" height="2.0" fill="#f01010"/>
<rect x="87" y="161.7" width="1" height="10.0" fill="#1f5fd8" fill-opacity="0.75"/>
<rect x="87" y="162.7" width="2" height="4.0" fill="#1f5fd8"/>
<rect x="90" y="157.9" width="1" height="12.0" fill="#1f5fd8" fill-opacity="0.75"/>
<rect x="89" y="159.9" width="2" height="10.0" fill="#1f5fd8"/>
<rect x="92" y="160.5" width="1" height="11.0" fill="#f01010" fill-opacity="0.75"/>
<rect x="91" y="160.5" width="2" height="10.0" fill="#f01010"/>
<rect x="93" y="152.1" width="1" height="11.0" fill="#f01010" fill-opacity="0.75"/>
<rect x="93" y="157.1" width="2" height="5.0" fill="#f01010"/>
<rect x="96" y="150.5" width="1" height="15.0" fill="#f01010" fill-opacity="0.75"/>
<rect x="95" y="152.5" width="2" height="12.0" fill="#f01010"/>
<rect x="99" y="152.3" width="1" height="6.0" fill="#f01010" fill-opacity="0.75"/>
<rect x="98" y="152.3" width="2" height="5.0" fill="#f01010"/>
<rect x="100" y="144.9" width="1" height="7.0" fill="#1f5fd8" fill-opacity="0.75"/>
<rect x="100" y="145.9" width="2" height="6.0" fill="#1f5fd8"/>
<rect x="102" y="144.8" width="1" height="11.0" fill="#1f5fd8" fill-opacity="0.75"/>
<rect x="102" y="146.8" width="2" height="7.0" fill="#1f5fd8"/>
<rect x="104" y="149.2" width="1" height="15.6" fill="#1f5fd8" fill-opacity="0.75"/>
<rect x="104" y="154.2" width="2" height="7.6" fill="#1f5fd8"/>
<rect x="106" y="161.1" width="1" height="21.0" fill="#1f5fd8" fill-opacity="0.75"/>
<rect x="106" y="161.1" width="2" height="16.0" fill="#1f5fd8"/>
<rect x="109" y="175.5" width="1" height="21.8" fill="#1f5fd8" fill-opacity="0.75"/>
<rect x="108" y="176.5" width="2" height="15.8" fill="#1f5fd8"/>
<rect x="110" y="186.9" width="1" height="15.6" fill="#1f5fd8" fill-opacity="0.75"/>
<rect x="110" y="191.9" width="2" height="10.6" fill="#1f5fd8"/>
<rect x="113" y="129.0" width="1" height="61.0" fill="#f01010" fill-opacity="0.75"/>
<rect x="112" y="132.0" width="2" height="54.0" fill="#f01010"/>
<rect x="114" y="125.4" width="1" height="8.8" fill="#f01010" fill-opacity="0.75"/>
<rect x="114" y="126.4" width="2" height="5.8" fill="#f01010"/>
<rect x="116" y="108.3" width="1" height="20.1" fill="#f01010" fill-opacity="0.75"/>
<rect x="116" y="109.3" width="2" height="17.1" fill="#f01010"/>
<rect x="118" y="115.6" width="1" height="10.0" fill="#1f5fd8" fill-opacity="0.75"/>
<rect x="118" y="116.6" width="2" height="6.0" fill="#1f5fd8"/>
<rect x="120" y="120.0" width="1" height="7.7" fill="#1f5fd8" fill-opacity="0.75"/>
<rect x="120" y="123.0" width="2" height="4.7" fill="#1f5fd8"/>
<rect x="123" y="127.5" width="1" height="16.7" fill="#1f5fd8" fill-opacity="0.75"/>
<rect x="122" y="128.5" width="2" height="13.7" fill="#1f5fd8"/>
<rect x="124" y="141.7" width="1" height="13.5" fill="#1f5fd8" fill-opacity="0.75"/>
<rect x="124" y="141.7" width="2" height="10.5" fill="#1f5fd8"/>
<rect x="126" y="151.8" width="1" height="16.1" fill="#1f5fd8" fill-opacity="0.75"/>
<rect x="126" y="152.8" width="2" height="12.1" fill="#1f5fd8"/>
<rect x="128" y="162.1" width="1" height="13.0" fill="#1f5fd8" fill-opacity="0.75"/>
<rect x="128" y="163.1" width="2" height="10.0" fill="#1f5fd8"/>
<rect x="130" y="168.2" width="1" height="11.3" fill="#1f5fd8" fill-opacity="0.75"/>
<rect x="130" y="173.2" width="2" height="6.3" fill="#1f5fd8"/>
<rect x="133" y="179.6" width="1" height="8.1" fill="#1f5fd8" fill-opacity="0.75"/>
<rect x="132" y="179.6" width="2" height="8.1" fill="#1f5fd8"/>
<rect x="134" y="174.9" width="1" height="14.0" fill="#f01010" fill-opacity="0.75"/>
<rect x="134" y="176.9" width="2" height="10.0" fill="#f01010"/>
<rect x="136" y="158.2" width="1" height="19.9" fill="#f01010" fill-opacity="0.75"/>
<rect x="136" y="161.2" width="2" height="14.9" fill="#f01010"/>
<rect x="139" y="148.3" width="1" height="13.1" fill="#f01010" fill-opacity="0.75"/>
<rect x="138" y="150.3" width="2" height="11.1" fill="#f01010"/>
<rect x="140" y="130.8" width="1" height="18.7" fill="#f01010" fill-opacity="0.75"/>
<rect x="140" y="130.8" width="2" height="18.7" fill="#f01010"/>
<rect x="144" y="119.7" width="1" height="10.5" fill="#f01010" fill-opacity="0.75"/>
<rect x="143" y="121.7" width="2" height="8.5" fill="#f01010"/>
<rect x="146" y="116.5" width="1" height="13.0" fill="#1f5fd8" fill-opacity="0.75"/>
<rect x="145" y="119.5" width="2" height="8.0" fill="#1f5fd8"/>
<rect x="148" y="127.7" width="1" height="3.0" fill="#1f5fd8" fill-opacity="0.75"/>
<rect x="147" y="128.7" width="2" height="2.0" fill="#1f5fd8"/>
<rect x="149" y="128.1" width="1" height="10.0" fill="#f01010" fill-opacity="0.75"/>
<rect x="149" y="129.1" width="2" height="7.0" fill="#f01010"/>
<rect x="152" y="121.6" width="1" height="21.0" fill="#1f5fd8" fill-opacity="0.75"/>
<rect x="151" y="123.6" width="2" height="14.0" fill="#1f5fd8"/>
<rect x="153" y="128.5" width="1" height="7.0" fill="#f01010" fill-opacity="0.75"/>
<rect x="153" y="128.5" width="2" height="5.0" fill="#f01010"/>
<rect x="156" y="121.4" width="1" height="8.0" fill="#1f5fd8" fill-opacity="0.75"/>
<rect x="155" y="122.4" width="2" height="2.0" fill="#1f5fd8"/>
<rect x="157" y="119.0" width="1" height="20.0" fill="#f01010" fill-opacity="0.75"/>
<rect x="157" y="122.0" width="2" height="12.0" fill="#f01010"/>
<rect x="160" y="120.6" width="1" height="22.2" fill="#1f5fd8" fill-opacity="0.75"/>
<rect x="159" y="121.6" width="2" height="20.2" fill="#1f5fd8"/>
<rect x="161" y="138.7" width="1" height="7.0" fill="#1f5fd8" fill-opacity="0.75"/>
<rect x="161" y="140.7" width="2" height="5.0" fill="#1f5fd8"/>
<rect x="164" y="147.3" width="1" height="7.0" fill="#f01010" fill-opacity="0.75"/>
<rect x="163" y="149.3" width="2" height="2.0" fill="#f01010"/>
<rect x="165" y="148.7" width="1" height="9.0" fill="#1f5fd8" fill-opacity="0.75"/>
<rect x="165" y="151.7" width="2" height="4.0" fill="#1f5fd8"/>
<rect x="167" y="154.3" width="1" height="9.0" fill="#f01010" fill-opacity="0.75"/>
<rect x="167" y="155.3" width="2" height="7.0" fill="#f01010"/>
<rect x="170" y="158.7" width="1" height="6.0" fill="#1f5fd8" fill-opacity="0.75"/>
<rect x="169" y="160.7" width="2" height="2.0" fill="#1f5fd8"/>
<rect x="172" y="161.8" width="1" height="8.0" fill="#1f5fd8" fill-opacity="0.75"/>
<rect x="171" y="162.8" width="2" height="7.0" fill="#1f5fd8"/>
<rect x="174" y="168.5" width="1" height="6.0" fill="#1f5fd8" fill-opacity="0.75"/>
<rect x="173" y="169.5" width="2" height="4.0" fill="#1f5fd8"/>
<rect x="175" y="175.5" width="1" height="3.0" fill="#f01010" fill-opacity="0.75"/>
<rect x="175" y="175.5" width="2" height="2.0" fill="#f01010"/>
<rect x="177" y="176.9" width="1" height="6.0" fill="#1f5fd8" fill-opacity="0.75"/>
<rect x="177" y="178.9" width="2" height="2.0" fill="#1f5fd8"/>
<rect x="180" y="179.9" width="1" height="8.0" fill="#1f5fd8" fill-opacity="0.75"/>
<rect x="179" y="180.9" width="2" height="4.0" fill="#1f5fd8"/>
<rect x="181" y="179.4" width="1" height="13.0" fill="#f01010" fill-opacity="0.75"/>
<rect x="181" y="180.4" width="2" height="12.0" fill="#f01010"/>
<rect x="184" y="180.4" width="1" height="15.0" fill="#1f5fd8" fill-opacity="0.75"/>
<rect x="183" y="181.4" width="2" height="14.0" fill="#1f5fd8"/>
<rect x="186" y="181.4" width="1" height="7.0" fill="#f01010" fill-opacity="0.75"/>
<rect x="185" y="181.4" width="2" height="6.0" fill="#f01010"/>
<rect x="188" y="177.6" width="1" height="9.0" fill="#1f5fd8" fill-opacity="0.75"/>
<rect x="188" y="182.6" width="2" height="4.0" fill="#1f5fd8"/>
<rect x="190" y="175.3" width="1" height="21.0" fill="#1f5fd8" fill-opacity="0.75"/>
<rect x="190" y="180.3" width="2" height="14.0" fill="#1f5fd8"/>
<rect x="193" y="185.5" width="1" height="4.0" fill="#1f5fd8" fill-opacity="0.75"/>
<rect x="192" y="185.5" width="2" height="4.0" fill="#1f5fd8"/>
<rect x="194" y="188.3" width="1" height="14.0" fill="#1f5fd8" fill-opacity="0.75"/>
<rect x="194" y="188.3" width="2" height="12.0" fill="#1f5fd8"/>
<rect x="196" y="189.0" width="1" height="16.0" fill="#1f5fd8" fill-opacity="0.75"/>
<rect x="196" y="194.0" width="2" height="6.0" fill="#1f5fd8"/>
<rect x="198" y="201.6" width="1" height="6.0" fill="#1f5fd8" fill-opacity="0.75"/>
<rect x="198" y="203.6" width="2" height="4.0" fill="#1f5fd8"/>
<rect x="201" y="205.6" width="1" height="9.0" fill="#f01010" fill-opacity="0.75"/>
<rect x="200" y="206.6" width="2" height="6.0" fill="#f01010"/>
<rect x="202" y="209.3" width="1" height="8.0" fill="#1f5fd8" fill-opacity="0.75"/>
<rect x="202" y="210.3" width="2" height="7.0" fill="#1f5fd8"/>
<rect x="204" y="215.5" width="1" height="13.0" fill="#1f5fd8" fill-opacity="0.75"/>
<rect x="204" y="215.5" width="2" height="12.0" fill="#1f5fd8"/>
<rect x="206" y="221.1" width="1" height="14.0" fill="#f01010" fill-opacity="0.75"/>
<rect x="206" y="223.1" width="2" height="7.0" fill="#f01010"/>
<rect x="208" y="210.0" width="1" height="13.1" fill="#f01010" fill-opacity="0.75"/>
<rect x="208" y="212.0" width="2" height="11.1" fill="#f01010"/>
<rect x="210" y="192.0" width="1" height="21.2" fill="#f01010" fill-opacity="0.75"/>
<rect x="210" y="197.0" width="2" height="14.2" fill="#f01010"/>
<rect x="212" y="191.8" width="1" height="7.0" fill="#f01010" fill-opacity="0.75"/>
<rect x="212" y="191.8" width="2" height="6.0" fill="#f01010"/>
<rect x="214" y="189.1" width="1" height="20.1" fill="#1f5fd8" fill-opacity="0.75"/>
<rect x="214" y="191.1" width="2" height="18.1" fill="#1f5fd8"/>
<rect x="217" y="202.8" width="1" height="14.0" fill="#1f5fd8" fill-opacity="0.75"/>
<rect x="216" y="207.8" width="2" height="6.0" fill="#1f5fd8"/>
<rect x="218" y="207.3" width="1" height="10.0" fill="#1f5fd8" fill-opacity="0.75"/>
<rect x="218" y="212.3" width="2" height="2.0" fill="#1f5fd8"/>
<rect x="221" y="214.3" width="1" height="10.0" fill="#1f5fd8" fill-opacity="0.75"/>
<rect x="220" y="217.3" width="2" height="5.0" fill="#1f5fd8"/>
<rect x="222" y="218.6" width="1" height="13.0" fill="#f01010" fill-opacity="0.75"/>
<rect x="222" y="220.6" width="2" height="8.0" fill="#f01010"/>
<rect x="225" y="217.9" width="1" height="10.0" fill="#f01010" fill-opacity="0.75"/>
<rect x="224" y="219.9" width="2" height="6.0" fill="#f01010"/>
<rect x="226" y="212.7" width="1" height="9.9" fill="#f01010" fill-opacity="0.75"/>
<rect x="226" y="212.7" width="2" height="7.9" fill="#f01010"/>
<rect x="228" y="194.5" width="1" height="19.8" fill="#f01010" fill-opacity="0.75"/>
<rect x="228" y="194.5" width="2" height="17.8" fill="#f01010"/>
<rect x="231" y="183.1" width="1" height="11.9" fill="#f01010" fill-opacity="0.75"/>
<rect x="230" y="185.1" width="2" height="8.9" fill="#f01010"/>
<rect x="233" y="176.4" width="1" height="14.0" fill="#1f5fd8" fill-opacity="0.75"/>
<rect x="233" y="179.4" width="2" height="10.0" fill="#1f5fd8"/>
<rect x="235" y="173.4" width="1" height="10.0" fill="#1f5fd8" fill-opacity="0.75"/>
<rect x="235" y="176.4" width="2" height="2.0" fill="#1f5fd8"/>
<rect x="238" y="165.6" width="1" height="12.0" fill="#f01010" fill-opacity="0.75"/>
<rect x="237" y="167.6" width="2" height="5.0" fill="#f01010"/>
<rect x="240" y="153.4" width="1" height="22.0" fill="#f01010" fill-opacity="0.75"/>
<rect x="239" y="158.4" width="2" height="14.0" fill="#f01010"/>
<rect x="242" y="167.8" width="1" height="12.0" fill="#f01010" fill-opacity="0.75"/>
<rect x="241" y="169.8" width="2" height="7.0" fill="#f01010"/>
<rect x="244" y="163.9" width="1" height="7.3" fill="#f01010" fill-opacity="0.75"/>
<rect x="243" y="163.9" width="2" height="6.3" fill="#f01010"/>
<rect x="245" y="158.3" width="1" height="10.0" fill="#1f5fd8" fill-opacity="0.75"/>
<rect x="245" y="163.3" width="2" height="4.0" fill="#1f5fd8"/>
<rect x="247" y="166.2" width="1" height="14.6" fill="#1f5fd8" fill-opacity="0.75"/>
<rect x="247" y="167.2" width="2" height="12.6" fill="#1f5fd8"/>
<rect x="249" y="178.0" width="1" height="14.6" fill="#1f5fd8" fill-opacity="0.75"/>
<rect x="249" y="179.0" width="2" height="11.6" fill="#1f5fd8"/>
<rect x="251" y="183.4" width="1" height="12.0" fill="#1f5fd8" fill-opacity="0.75"/>
<rect x="251" y="186.4" width="2" height="6.0" fill="#1f5fd8"/>
<rect x="253" y="179.4" width="1" height="17.6" fill="#f01010" fill-opacity="0.75"/>
<rect x="253" y="179.4" width="2" height="12.6" fill="#f01010"/>
<rect x="255" y="172.1" width="1" height="9.0" fill="#f01010" fill-opacity="0.75"/>
<rect x="255" y="173.1" width="2" height="8.0" fill="#f01010"/>
<rect x="258" y="163.6" width="1" height="14.0" fill="#f01010" fill-opacity="0.75"/>
<rect x="257" y="168.6" width="2" height="6.0" fill="#f01010"/>
<rect x="260" y="166.0" width="1" height="10.0" fill="#f01010" fill-opacity="0.75"/>
<rect x="259" y="169.0" width="2" height="2.0" fill="#f01010"/>
<rect x="262" y="158.4" width="1" height="20.0" fill="#f01010" fill-opacity="0.75"/>
<rect x="261" y="161.4" width="2" height="12.0" fill="#f01010"/>
<rect x="263" y="170.2" width="1" height="8.0" fill="#1f5fd8" fill-opacity="0.75"/>
<rect x="263" y="171.2" width="2" height="6.0" fill="#1f5fd8"/>
<rect x="266" y="169.5" width="1" height="9.0" fill="#1f5fd8" fill-opacity="0.75"/>
<rect x="265" y="174.5" width="2" height="4.0" fill="#1f5fd8"/>
<rect x="267" y="179.3" width="1" height="4.0" fill="#f01010" fill-opacity="0.75"/>
<rect x="267" y="180.3" width="2" height="2.0" fill="#f01010"/>
<rect x="270" y="171.5" width="1" height="5.0" fill="#f01010" fill-opacity="0.75"/>
<rect x="269" y="173.5" width="2" height="2.0" fill="#f01010"/>
<rect x="272" y="164.7" width="1" height="9.2" fill="#f01010" fill-opacity="0.75"/>
<rect x="271" y="164.7" width="2" height="9.2" fill="#f01010"/>
<rect x="274" y="162.4" width="1" height="18.0" fill="#1f5fd8" fill-opacity="0.75"/>
<rect x="273" y="163.4" width="2" height="14.0" fill="#1f5fd8"/>
<rect x="276" y="172.0" width="1" height="11.5" fill="#1f5fd8" fill-opacity="0.75"/>
<rect x="275" y="177.0" width="2" height="4.5" fill="#1f5fd8"/>
<rect x="278" y="181.5" width="1" height="8.0" fill="#1f5fd8" fill-opacity="0.75"/>
<rect x="278" y="182.5" width="2" height="6.0" fill="#1f5fd8"/>
<rect x="280" y="173.4" width="1" height="12.0" fill="#1f5fd8" fill-opacity="0.75"/>
<rect x="280" y="175.4" width="2" height="10.0" fill="#1f5fd8"/>
<rect x="282" y="173.2" width="1" height="15.0" fill="#1f5fd8" fill-opacity="0.75"/>
<rect x="282" y="176.2" width="2" height="12.0" fill="#1f5fd8"/>
<rect x="285" y="180.3" width="1" height="16.0" fill="#1f5fd8" fill-opacity="0.75"/>
<rect x="284" y="181.3" width="2" height="10.0" fill="#1f5fd8"/>
<rect x="286" y="183.5" width="1" height="13.0" fill="#1f5fd8" fill-opacity="0.75"/>
<rect x="286" y="185.5" width="2" height="8.0" fill="#1f5fd8"/>
<rect x="289" y="191.9" width="1" height="8.0" fill="#1f5fd8" fill-opacity="0.75"/>
<rect x="288" y="191.9" width="2" height="7.0" fill="#1f5fd8"/>
<rect x="291" y="197.3" width="1" height="8.0" fill="#1f5fd8" fill-opacity="0.75"/>
<rect x="290" y="198.3" width="2" height="6.0" fill="#1f5fd8"/>
<rect x="293" y="199.1" width="1" height="9.0" fill="#1f5fd8" fill-opacity="0.75"/>
<rect x="292" y="201.1" width="2" height="7.0" fill="#1f5fd8"/>
<rect x="295" y="200.4" width="1" height="18.0" fill="#f01010" fill-opacity="0.75"/>
<rect x="294" y="201.4" width="2" height="12.0" fill="#f01010"/>
<rect x="297" y="199.4" width="1" height="6.0" fill="#1f5fd8" fill-opacity="0.75"/>
<rect x="296" y="200.4" width="2" height="2.0" fill="#1f5fd8"/>
<rect x="299" y="187.4" width="1" height="14.3" fill="#f01010" fill-opacity="0.75"/>
<rect x="298" y="187.4" width="2" height="14.3" fill="#f01010"/>
<rect x="301" y="188.2" width="1" height="14.2" fill="#1f5fd8" fill-opacity="0.75"/>
<rect x="300" y="188.2" width="2" height="14.2" fill="#1f5fd8"/>
<rect x="303" y="196.0" width="1" height="13.0" fill="#f01010" fill-opacity="0.75"/>
<rect x="302" y="201.0" width="2" height="8.0" fill="#f01010"/>
<rect x="304" y="192.1" width="1" height="17.0" fill="#f01010" fill-opacity="0.75"/>
<rect x="304" y="194.1" width="2" height="10.0" fill="#f01010"/>
<rect x="307" y="194.8" width="1" height="4.0" fill="#f01010" fill-opacity="0.75"/>
<rect x="306" y="194.8" width="2" height="2.0" fill="#f01010"/>
<rect x="308" y="195.0" width="1" height="8.0" fill="#1f5fd8" fill-opacity="0.75"/>
<rect x="308" y="196.0" width="2" height="4.0" fill="#1f5fd8"/>
<rect x="310" y="195.0" width="1" height="10.0" fill="#1f5fd8" fill-opacity="0.75"/>
<rect x="310" y="198.0" width="2" height="7.0" fill="#1f5fd8"/>
<rect x="313" y="190.3" width="1" height="18.0" fill="#f01010" fill-opacity="0.75"/>
<rect x="312" y="195.3" width="2" height="12.0" fill="#f01010"/>
<rect x="315" y="193.8" width="1" height="16.0" fill="#f01010" fill-opacity="0.75"/>
<rect x="314" y="196.8" width="2" height="12.0" fill="#f01010"/>
<rect x="316" y="196.7" width="1" height="15.0" fill="#f01010" fill-opacity="0.75"/>
<rect x="316" y="196.7" width="2" height="10.0" fill="#f01010"/>
<rect x="319" y="196.2" width="1" height="4.0" fill="#f01010" fill-opacity="0.75"/>
<rect x="318" y="196.2" width="2" height="2.0" fill="#f01010"/>
<rect x="321" y="199.2" width="1" height="10.0" fill="#1f5fd8" fill-opacity="0.75"/>
<rect x="320" y="199.2" width="2" height="8.0" fill="#1f5fd8"/>
<rect x="323" y="202.5" width="1" height="10.0" fill="#1f5fd8" fill-opacity="0.75"/>
<rect x="322" y="204.5" width="2" height="8.0" fill="#1f5fd8"/>
<rect x="325" y="208.8" width="1" height="5.0" fill="#f01010" fill-opacity="0.75"/>
<rect x="325" y="209.8" width="2" height="4.0" fill="#f01010"/>
<rect x="328" y="205.2" width="1" height="17.0" fill="#1f5fd8" fill-opacity="0.75"/>
<rect x="327" y="208.2" width="2" height="12.0" fill="#1f5fd8"/>
<rect x="330" y="209.5" width="1" height="18.0" fill="#f01010" fill-opacity="0.75"/>
<rect x="329" y="214.5" width="2" height="12.0" fill="#f01010"/>
<rect x="331" y="216.2" width="1" height="9.0" fill="#1f5fd8" fill-opacity="0.75"/>
<rect x="331" y="217.2" width="2" height="7.0" fill="#1f5fd8"/>
<rect x="334" y="220.0" width="1" height="9.0" fill="#f01010" fill-opacity="0.75"/>
<rect x="333" y="220.0" width="2" height="8.0" fill="#f01010"/>
<rect x="336" y="212.7" width="1" height="11.4" fill="#f01010" fill-opacity="0.75"/>
<rect x="335" y="212.7" width="2" height="6.4" fill="#f01010"/>
<rect x="338" y="203.4" width="1" height="9.2" fill="#f01010" fill-opacity="0.75"/>
<rect x="337" y="203.4" width="2" height="9.2" fill="#f01010"/>
<rect x="340" y="187.7" width="1" height="16.5" fill="#f01010" fill-opacity="0.75"/>
<rect x="339" y="192.7" width="2" height="10.5" fill="#f01010"/>
<rect x="341" y="186.4" width="1" height="11.0" fill="#f01010" fill-opacity="0.75"/>
<rect x="341" y="187.4" width="2" height="10.0" fill="#f01010"/>
<rect x="343" y="186.4" width="1" height="11.0" fill="#f01010" fill-opacity="0.75"/>
<rect x="343" y="188.4" width="2" height="7.0" fill="#f01010"/>
<rect x="346" y="182.5" width="1" height="9.0" fill="#f01010" fill-opacity="0.75"/>
<rect x="345" y="183.5" width="2" height="7.0" fill="#f01010"/>
<rect x="347" y="180.8" width="1" height="8.0" fill="#f01010" fill-opacity="0.75"/>
<rect x="347" y="181.8" width="2" height="5.0" fill="#f01010"/>
<rect x="349" y="175.6" width="1" height="8.0" fill="#1f5fd8" fill-opacity="0.75"/>
<rect x="349" y="176.6" width="2" height="7.0" fill="#1f5fd8"/>
<rect x="352" y="172.4" width="1" height="8.0" fill="#f01010" fill-opacity="0.75"/>
<rect x="351" y="177.4" width="2" height="2.0" fill="#f01010"/>
<rect x="354" y="170.5" width="1" height="11.0" fill="#f01010" fill-opacity="0.75"/>
<rect x="353" y="172.5" width="2" height="8.0" fill="#f01010"/>
<rect x="356" y="173.0" width="1" height="7.0" fill="#1f5fd8" fill-opacity="0.75"/>
<rect x="355" y="174.0" width="2" height="6.0" fill="#1f5fd8"/>
<rect x="357" y="179.5" width="1" height="9.2" fill="#1f5fd8" fill-opacity="0.75"/>
<rect x="357" y="179.5" width="2" height="9.2" fill="#1f5fd8"/>
<rect x="360" y="187.4" width="1" height="11.2" fill="#1f5fd8" fill-opacity="0.75"/>
<rect x="359" y="188.4" width="2" height="10.2" fill="#1f5fd8"/>
<rect x="362" y="190.5" width="1" height="8.0" fill="#f01010" fill-opacity="0.75"/>
<rect x="361" y="191.5" width="2" height="7.0" fill="#f01010"/>
<rect x="363" y="190.7" width="1" height="13.0" fill="#1f5fd8" fill-opacity="0.75"/>
<rect x="363" y="191.7" width="2" height="10.0" fill="#1f5fd8"/>
<rect x="365" y="201.8" width="1" height="5.4" fill="#1f5fd8" fill-opacity="0.75"/>
<rect x="365" y="201.8" width="2" height="2.4" fill="#1f5fd8"/>
<rect x="368" y="194.9" width="1" height="11.0" fill="#1f5fd8" fill-opacity="0.75"/>
<rect x="367" y="195.9" width="2" height="10.0" fill="#1f5fd8"/>
<rect x="370" y="194.4" width="1" height="15.0" fill="#1f5fd8" fill-opacity="0.75"/>
<rect x="370" y="197.4" width="2" height="10.0" fill="#1f5fd8"/>
<rect x="373" y="202.3" width="1" height="14.0" fill="#1f5fd8" fill-opacity="0.75"/>
<rect x="372" y="204.3" width="2" height="10.0" fill="#1f5fd8"/>
<rect x="375" y="203.9" width="1" height="5.0" fill="#1f5fd8" fill-opacity="0.75"/>
<rect x="374" y="205.9" width="2" height="2.0" fill="#1f5fd8"/>
<rect x="376" y="201.1" width="1" height="13.0" fill="#f01010" fill-opacity="0.75"/>
<rect x="376" y="201.1" width="2" height="10.0" fill="#f01010"/>
<rect x="379" y="207.9" width="1" height="13.0" fill="#f01010" fill-opacity="0.75"/>
<rect x="378" y="207.9" width="2" height="10.0" fill="#f01010"/>
<rect x="380" y="209.1" width="1" height="10.0" fill="#1f5fd8" fill-opacity="0.75"/>
<rect x="380" y="210.1" width="2" height="8.0" fill="#1f5fd8"/>
<rect x="383" y="204.4" width="1" height="17.0" fill="#f01010" fill-opacity="0.75"/>
<rect x="382" y="207.4" width="2" height="14.0" fill="#f01010"/>
<rect x="385" y="215.0" width="1" height="10.0" fill="#1f5fd8" fill-opacity="0.75"/>
<rect x="384" y="216.0" width="2" height="8.0" fill="#1f5fd8"/>
<rect x="386" y="220.1" width="1" height="5.0" fill="#1f5fd8" fill-opacity="0.75"/>
<rect x="386" y="220.1" width="2" height="5.0" fill="#1f5fd8"/>
<rect x="389" y="220.6" width="1" height="11.0" fill="#f01010" fill-opacity="0.75"/>
<rect x="388" y="220.6" width="2" height="6.0" fill="#f01010"/>
<rect x="390" y="215.3" width="1" height="12.0" fill="#f01010" fill-opacity="0.75"/>
<rect x="390" y="216.3" width="2" height="10.0" fill="#f01010"/>
<rect x="392" y="206.4" width="1" height="9.2" fill="#f01010" fill-opacity="0.75"/>
<rect x="392" y="207.4" width="2" height="8.2" fill="#f01010"/>
<rect x="395" y="197.8" width="1" height="16.0" fill="#f01010" fill-opacity="0.75"/>
<rect x="394" y="199.8" width="2" height="14.0" fill="#f01010"/>
<rect x="397" y="204.2" width="1" height="8.0" fill="#f01010" fill-opacity="0.75"/>
<rect x="396" y="204.2" width="2" height="6.0" fill="#f01010"/>
<rect x="399" y="203.3" width="1" height="17.0" fill="#1f5fd8" fill-opacity="0.75"/>
<rect x="398" y="205.3" width="2" height="12.0" fill="#1f5fd8"/>
<rect x="401" y="205.0" width="1" height="13.0" fill="#1f5fd8" fill-opacity="0.75"/>
<rect x="400" y="207.0" width="2" height="6.0" fill="#1f5fd8"/>
<rect x="402" y="205.9" width="1" height="15.0" fill="#f01010" fill-opacity="0.75"/>
<rect x="402" y="210.9" width="2" height="5.0" fill="#f01010"/>
<rect x="404" y="206.1" width="1" height="20.0" fill="#1f5fd8" fill-opacity="0.75"/>
<rect x="404" y="211.1" width="2" height="12.0" fill="#1f5fd8"/>
<rect x="406" y="213.5" width="1" height="7.0" fill="#f01010" fill-opacity="0.75"/>
<rect x="406" y="215.5" width="2" height="5.0" fill="#f01010"/>
<rect x="408" y="211.9" width="1" height="14.0" fill="#f01010" fill-opacity="0.75"/>
<rect x="408" y="211.9" width="2" height="14.0" fill="#f01010"/>
<rect x="410" y="212.6" width="1" height="6.0" fill="#1f5fd8" fill-opacity="0.75"/>
<rect x="410" y="214.6" width="2" height="4.0" fill="#1f5fd8"/>
<rect x="412" y="211.0" width="1" height="15.0" fill="#1f5fd8" fill-opacity="0.75"/>
<rect x="412" y="212.0" width="2" height="14.0" fill="#1f5fd8"/>
<rect x="416" y="214.4" width="1" height="11.0" fill="#1f5fd8" fill-opacity="0.75"/>
<rect x="415" y="219.4" width="2" height="4.0" fill="#1f5fd8"/>
<rect x="418" y="221.2" width="1" height="6.0" fill="#1f5fd8" fill-opacity="0.75"/>
<rect x="417" y="222.2" width="2" height="5.0" fill="#1f5fd8"/>
<rect x="420" y="238.0" width="1" height="34.0" fill="#f01010" fill-opacity="0.75"/>
<rect x="419" y="240.0" width="2" height="22.0" fill="#f01010"/>
<rect x="422" y="235.7" width="1" height="25.0" fill="#f01010" fill-opacity="0.75"/>
<rect x="421" y="237.7" width="2" height="22.0" fill="#f01010"/>
<rect x="423" y="242.1" width="1" height="6.0" fill="#f01010" fill-opacity="0.75"/>
<rect x="423" y="245.1" width="2" height="2.0" fill="#f01010"/>
<rect x="425" y="241.0" width="1" height="11.0" fill="#f01010" fill-opacity="0.75"/>
<rect x="425" y="244.0" width="2" height="7.0" fill="#f01010"/>
<rect x="427" y="239.1" width="1" height="9.0" fill="#f01010" fill-opacity="0.75"/>
<rect x="427" y="239.1" width="2" height="7.0" fill="#f01010"/>
<rect x="430" y="236.0" width="1" height="14.0" fill="#1f5fd8" fill-opacity="0.75"/>
<rect x="429" y="236.0" width="2" height="12.0" fill="#1f5fd8"/>
<rect x="432" y="240.0" width="1" height="14.0" fill="#1f5fd8" fill-opacity="0.75"/>
<rect x="431" y="242.0" width="2" height="10.0" fill="#1f5fd8"/>
<rect x="433" y="243.7" width="1" height="12.0" fill="#1f5fd8" fill-opacity="0.75"/>
<rect x="433" y="245.7" width="2" height="8.0" fill="#1f5fd8"/>
<rect x="436" y="250.0" width="1" height="14.0" fill="#1f5fd8" fill-opacity="0.75"/>
<rect x="435" y="250.0" width="2" height="12.0" fill="#1f5fd8"/>
<rect x="438" y="257.7" width="1" height="9.0" fill="#f01010" fill-opacity="0.75"/>
<rect x="437" y="259.7" width="2" height="7.0" fill="#f01010"/>
<rect x="439" y="247.3" width="1" height="15.6" fill="#f01010" fill-opacity="0.75"/>
<rect x="439" y="250.3" width="2" height="9.6" fill="#f01010"/>
<rect x="441" y="241.3" width="1" height="8.4" fill="#f01010" fill-opacity="0.75"/>
<rect x="441" y="241.3" width="2" height="8.4" fill="#f01010"/>
<rect x="444" y="230.9" width="1" height="11.0" fill="#f01010" fill-opacity="0.75"/>
<rect x="443" y="232.9" width="2" height="8.0" fill="#f01010"/>
<rect x="445" y="227.3" width="1" height="23.2" fill="#1f5fd8" fill-opacity="0.75"/>
<rect x="445" y="232.3" width="2" height="17.2" fill="#1f5fd8"/>
<rect x="448" y="241.8" width="1" height="11.0" fill="#1f5fd8" fill-opacity="0.75"/>
<rect x="447" y="246.8" width="2" height="6.0" fill="#1f5fd8"/>
<rect x="450" y="246.5" width="1" height="10.0" fill="#1f5fd8" fill-opacity="0.75"/>
<rect x="449" y="248.5" width="2" height="5.0" fill="#1f5fd8"/>
<rect x="451" y="248.9" width="1" height="9.0" fill="#f01010" fill-opacity="0.75"/>
<rect x="451" y="250.9" width="2" height="2.0" fill="#f01010"/>
<rect x="453" y="246.1" width="1" height="16.0" fill="#1f5fd8" fill-opacity="0.75"/>
<rect x="453" y="247.1" width="2" height="14.0" fill="#1f5fd8"/>
<rect x="455" y="257.2" width="1" height="5.0" fill="#f01010" fill-opacity="0.75"/>
<rect x="455" y="257.2" width="2" height="2.0" fill="#f01010"/>
<rect x="457" y="246.0" width="1" height="5.0" fill="#f01010" fill-opacity="0.75"/>
<rect x="457" y="246.0" width="2" height="5.0" fill="#f01010"/>
<rect x="461" y="246.5" width="1" height="10.0" fill="#f01010" fill-opacity="0.75"/>
<rect x="460" y="247.5" width="2" height="6.0" fill="#f01010"/>
<rect x="462" y="250.0" width="1" height="7.0" fill="#f01010" fill-opacity="0.75"/>
<rect x="462" y="250.0" width="2" height="5.0" fill="#f01010"/>
<rect x="465" y="243.0" width="1" height="15.0" fill="#1f5fd8" fill-opacity="0.75"/>
<rect x="464" y="243.0" width="2" height="12.0" fill="#1f5fd8"/>
<rect x="467" y="239.5" width="1" height="18.0" fill="#f01010" fill-opacity="0.75"/>
<rect x="466" y="244.5" width="2" height="12.0" fill="#f01010"/>
<rect x="469" y="246.4" width="1" height="4.0" fill="#f01010" fill-opacity="0.75"/>
<rect x="468" y="246.4" width="2" height="4.0" fill="#f01010"/>
<rect x="470" y="242.0" width="1" height="12.0" fill="#f01010" fill-opacity="0.75"/>
<rect x="470" y="244.0" width="2" height="7.0" fill="#f01010"/>
<rect x="473" y="236.2" width="1" height="17.0" fill="#1f5fd8" fill-opacity="0.75"/>
<rect x="472" y="238.2" width="2" height="14.0" fill="#1f5fd8"/>
<rect x="474" y="229.7" width="1" height="17.0" fill="#f01010" fill-opacity="0.75"/>
<rect x="474" y="231.7" width="2" height="14.0" fill="#f01010"/>
<rect x="477" y="232.6" width="1" height="9.0" fill="#1f5fd8" fill-opacity="0.75"/>
<rect x="476" y="234.6" width="2" height="6.0" fill="#1f5fd8"/>
<rect x="478" y="233.1" width="1" height="16.0" fill="#f01010" fill-opacity="0.75"/>
<rect x="478" y="236.1" width="2" height="8.0" fill="#f01010"/>
<rect x="481" y="229.0" width="1" height="17.0" fill="#f01010" fill-opacity="0.75"/>
<rect x="480" y="229.0" width="2" height="14.0" fill="#f01010"/>
<rect x="482" y="225.8" width="1" height="5.8" fill="#f01010" fill-opacity="0.75"/>
<rect x="482" y="226.8" width="2" height="1.8" fill="#f01010"/>
<rect x="484" y="218.6" width="1" height="6.0" fill="#f01010" fill-opacity="0.75"/>
<rect x="484" y="219.6" width="2" height="4.0" fill="#f01010"/>
<rect x="487" y="214.6" width="1" height="7.0" fill="#f01010" fill-opacity="0.75"/>
<rect x="486" y="215.6" width="2" height="4.0" fill="#f01010"/>
<rect x="488" y="222.4" width="1" height="3.0" fill="#f01010" fill-opacity="0.75"/>
<rect x="488" y="223.4" width="2" height="2.0" fill="#f01010"/>
<rect x="490" y="227.1" width="1" height="5.0" fill="#f01010" fill-opacity="0.75"/>
<rect x="490" y="229.1" width="2" height="2.0" fill="#f01010"/>
<rect x="492" y="225.0" width="1" height="17.0" fill="#1f5fd8" fill-opacity="0.75"/>
<rect x="492" y="225.0" width="2" height="14.0" fill="#1f5fd8"/>
<rect x="494" y="186.0" width="1" height="52.0" fill="#f01010" fill-opacity="0.75"/>
<rect x="494" y="192.0" width="2" height="44.0" fill="#f01010"/>
<rect x="497" y="191.5" width="1" height="7.9" fill="#1f5fd8" fill-opacity="0.75"/>
<rect x="496" y="192.5" width="2" height="4.9" fill="#1f5fd8"/>
<rect x="499" y="186.0" width="1" height="14.0" fill="#f01010" fill-opacity="0.75"/>
<rect x="498" y="188.0" width="2" height="10.0" fill="#f01010"/>
<rect x="501" y="185.6" width="1" height="6.0" fill="#f01010" fill-opacity="0.75"/>
<rect x="500" y="187.6" width="2" height="2.0" fill="#f01010"/>
<rect x="502" y="178.5" width="1" height="16.0" fill="#f01010" fill-opacity="0.75"/>
<rect x="502" y="180.5" width="2" height="14.0" fill="#f01010"/>
<rect x="506" y="186.8" width="1" height="4.0" fill="#f01010" fill-opacity="0.75"/>
<rect x="505" y="186.8" width="2" height="2.0" fill="#f01010"/>
<rect x="507" y="179.0" width="1" height="3.0" fill="#f01010" fill-opacity="0.75"/>
<rect x="507" y="180.0" width="2" height="2.0" fill="#f01010"/>
<rect x="509" y="175.7" width="1" height="8.0" fill="#f01010" fill-opacity="0.75"/>
<rect x="509" y="175.7" width="2" height="7.0" fill="#f01010"/>
<rect x="512" y="169.8" width="1" height="7.0" fill="#f01010" fill-opacity="0.75"/>
<rect x="511" y="174.8" width="2" height="2.0" fill="#f01010"/>
<rect x="514" y="168.1" width="1" height="9.0" fill="#1f5fd8" fill-opacity="0.75"/>
<rect x="513" y="170.1" width="2" height="5.0" fill="#1f5fd8"/>
<rect x="515" y="171.1" width="1" height="7.0" fill="#1f5fd8" fill-opacity="0.75"/>
<rect x="515" y="172.1" width="2" height="5.0" fill="#1f5fd8"/>
<rect x="517" y="176.4" width="1" height="9.0" fill="#1f5fd8" fill-opacity="0.75"/>
<rect x="517" y="176.4" width="2" height="4.0" fill="#1f5fd8"/>
<rect x="520" y="176.6" width="1" height="18.0" fill="#1f5fd8" fill-opacity="0.75"/>
<rect x="519" y="178.6" width="2" height="14.0" fill="#1f5fd8"/>
<rect x="521" y="182.8" width="1" height="13.0" fill="#1f5fd8" fill-opacity="0.75"/>
<rect x="521" y="182.8" width="2" height="10.0" fill="#1f5fd8"/>
<rect x="524" y="193.0" width="1" height="6.0" fill="#1f5fd8" fill-opacity="0.75"/>
<rect x="523" y="195.0" width="2" height="2.0" fill="#1f5fd8"/>
<rect x="525" y="189.6" width="1" height="18.0" fill="#1f5fd8" fill-opacity="0.75"/>
<rect x="525" y="192.6" width="2" height="14.0" fill="#1f5fd8"/>
<rect x="528" y="202.6" width="1" height="7.0" fill="#1f5fd8" fill-opacity="0.75"/>
<rect x="527" y="202.6" width="2" height="5.0" fill="#1f5fd8"/>
<rect x="529" y="191.6" width="1" height="21.0" fill="#f01010" fill-opacity="0.75"/>
<rect x="529" y="196.6" width="2" height="14.0" fill="#f01010"/>
<rect x="531" y="191.0" width="1" height="15.0" fill="#1f5fd8" fill-opacity="0.75"/>
<rect x="531" y="193.0" width="2" height="12.0" fill="#1f5fd8"/>
<rect x="533" y="198.7" width="1" height="14.0" fill="#1f5fd8" fill-opacity="0.75"/>
<rect x="533" y="199.7" width="2" height="12.0" fill="#1f5fd8"/>
<rect x="535" y="203.6" width="1" height="8.0" fill="#1f5fd8" fill-opacity="0.75"/>
<rect x="535" y="204.6" width="2" height="5.0" fill="#1f5fd8"/>
<rect x="538" y="200.0" width="1" height="11.0" fill="#f01010" fill-opacity="0.75"/>
<rect x="537" y="202.0" width="2" height="8.0" fill="#f01010"/>
<rect x="540" y="207.4" width="1" height="5.0" fill="#1f5fd8" fill-opacity="0.75"/>
<rect x="539" y="207.4" width="2" height="4.0" fill="#1f5fd8"/>
<rect x="541" y="209.7" width="1" height="10.0" fill="#1f5fd8" fill-opacity="0.75"/>
<rect x="541" y="211.7" width="2" height="5.0" fill="#1f5fd8"/>
<rect x="543" y="215.6" width="1" height="6.0" fill="#1f5fd8" fill-opacity="0.75"/>
<rect x="543" y="215.6" width="2" height="4.0" fill="#1f5fd8"/>
<rect x="545" y="215.1" width="1" height="13.0" fill="#1f5fd8" fill-opacity="0.75"/>
<rect x="545" y="215.1" width="2" height="10.0" fill="#1f5fd8"/>
<rect x="548" y="220.3" width="1" height="17.0" fill="#1f5fd8" fill-opacity="0.75"/>
<rect x="547" y="222.3" width="2" height="10.0" fill="#1f5fd8"/>
<rect x="551" y="222.4" width="1" height="10.0" fill="#1f5fd8" fill-opacity="0.75"/>
<rect x="550" y="225.4" width="2" height="7.0" fill="#1f5fd8"/>
<rect x="552" y="227.2" width="1" height="14.0" fill="#1f5fd8" fill-opacity="0.75"/>
<rect x="552" y="230.2" width="2" height="10.0" fill="#1f5fd8"/>
<rect x="554" y="228.9" width="1" height="11.0" fill="#1f5fd8" fill-opacity="0.75"/>
<rect x="554" y="228.9" width="2" height="6.0" fill="#1f5fd8"/>
<rect x="556" y="225.1" width="1" height="10.0" fill="#f01010" fill-opacity="0.75"/>
<rect x="556" y="225.1" width="2" height="7.0" fill="#f01010"/>
<rect x="559" y="224.6" width="1" height="13.0" fill="#1f5fd8" fill-opacity="0.75"/>
<rect x="558" y="225.6" width="2" height="10.0" fill="#1f5fd8"/>
<rect x="560" y="220.3" width="1" height="16.0" fill="#f01010" fill-opacity="0.75"/>
<rect x="560" y="223.3" width="2" height="12.0" fill="#f01010"/>
<rect x="562" y="220.9" width="1" height="16.0" fill="#1f5fd8" fill-opacity="0.75"/>
<rect x="562" y="223.9" width="2" height="8.0" fill="#1f5fd8"/>
<rect x="565" y="228.3" width="1" height="6.0" fill="#f01010" fill-opacity="0.75"/>
<rect x="564" y="229.3" width="2" height="4.0" fill="#f01010"/>
<rect x="567" y="225.4" width="1" height="11.0" fill="#1f5fd8" fill-opacity="0.75"/>
<rect x="566" y="225.4" width="2" height="6.0" fill="#1f5fd8"/>
<rect x="568" y="220.0" width="1" height="16.0" fill="#1f5fd8" fill-opacity="0.75"/>
<rect x="568" y="222.0" width="2" height="12.0" fill="#1f5fd8"/>
<rect x="571" y="224.6" width="1" height="16.0" fill="#1f5fd8" fill-opacity="0.75"/>
<rect x="570" y="225.6" width="2" height="12.0" fill="#1f5fd8"/>
<rect x="573" y="230.7" width="1" height="6.0" fill="#f01010" fill-opacity="0.75"/>
<rect x="572" y="232.7" width="2" height="4.0" fill="#f01010"/>
<rect x="575" y="214.6" width="1" height="20.1" fill="#f01010" fill-opacity="0.75"/>
<rect x="574" y="217.6" width="2" height="14.1" fill="#f01010"/>
<rect x="577" y="186.0" width="1" height="53.0" fill="#f01010" fill-opacity="0.75"/>
<rect x="576" y="192.0" width="2" height="44.0" fill="#f01010"/>
<rect x="579" y="190.3" width="1" height="22.0" fill="#1f5fd8" fill-opacity="0.75"/>
<rect x="578" y="193.3" width="2" height="14.0" fill="#1f5fd8"/>
<rect x="580" y="199.5" width="1" height="6.0" fill="#1f5fd8" fill-opacity="0.75"/>
<rect x="580" y="199.5" width="2" height="5.0" fill="#1f5fd8"/>
<rect x="583" y="198.9" width="1" height="17.0" fill="#f01010" fill-opacity="0.75"/>
<rect x="582" y="199.9" width="2" height="14.0" fill="#f01010"/>
<rect x="585" y="194.8" width="1" height="9.7" fill="#f01010" fill-opacity="0.75"/>
<rect x="584" y="195.8" width="2" height="3.7" fill="#f01010"/>
<rect x="587" y="195.9" width="1" height="11.0" fill="#1f5fd8" fill-opacity="0.75"/>
<rect x="586" y="198.9" width="2" height="6.0" fill="#1f5fd8"/>
<rect x="588" y="203.5" width="1" height="14.2" fill="#1f5fd8" fill-opacity="0.75"/>
<rect x="588" y="205.5" width="2" height="10.2" fill="#1f5fd8"/>
<rect x="591" y="194.4" width="1" height="15.0" fill="#f01010" fill-opacity="0.75"/>
<rect x="590" y="199.4" width="2" height="7.0" fill="#f01010"/>
<rect x="592" y="202.4" width="1" height="7.0" fill="#1f5fd8" fill-opacity="0.75"/>
<rect x="592" y="204.4" width="2" height="4.0" fill="#1f5fd8"/>
<rect x="595" y="203.9" width="1" height="13.0" fill="#f01010" fill-opacity="0.75"/>
<rect x="595" y="205.9" width="2" height="10.0" fill="#f01010"/>
<rect x="597" y="201.9" width="1" height="8.0" fill="#f01010" fill-opacity="0.75"/>
<rect x="597" y="201.9" width="2" height="8.0" fill="#f01010"/>
<rect x="600" y="197.2" width="1" height="6.0" fill="#f01010" fill-opacity="0.75"/>
<rect x="599" y="199.2" width="2" height="4.0" fill="#f01010"/>
<rect x="601" y="189.8" width="1" height="13.0" fill="#f01010" fill-opacity="0.75"/>
<rect x="601" y="194.8" width="2" height="6.0" fill="#f01010"/>
<rect x="603" y="186.4" width="1" height="8.9" fill="#f01010" fill-opacity="0.75"/>
<rect x="603" y="187.4" width="2" height="7.9" fill="#f01010"/>
<rect x="605" y="183.7" width="1" height="17.0" fill="#1f5fd8" fill-opacity="0.75"/>
<rect x="605" y="185.7" width="2" height="14.0" fill="#1f5fd8"/>
<rect x="607" y="188.3" width="1" height="11.0" fill="#1f5fd8" fill-opacity="0.75"/>
<rect x="607" y="193.3" width="2" height="6.0" fill="#1f5fd8"/>
<rect x="609" y="195.4" width="1" height="13.0" fill="#1f5fd8" fill-opacity="0.75"/>
<rect x="609" y="196.4" width="2" height="7.0" fill="#1f5fd8"/>
<rect x="612" y="199.2" width="1" height="12.2" fill="#1f5fd8" fill-opacity="0.75"/>
<rect x="611" y="204.2" width="2" height="6.2" fill="#1f5fd8"/>
<rect x="613" y="209.9" width="1" height="14.4" fill="#1f5fd8" fill-opacity="0.75"/>
<rect x="613" y="210.9" width="2" height="11.4" fill="#1f5fd8"/>
<rect x="616" y="221.0" width="1" height="15.3" fill="#1f5fd8" fill-opacity="0.75"/>
<rect x="615" y="223.0" width="2" height="10.3" fill="#1f5fd8"/>
<rect x="617" y="229.0" width="1" height="11.0" fill="#f01010" fill-opacity="0.75"/>
<rect x="617" y="231.5" width="2" height="3.0" fill="#f01010"/>
<polyline points="6.0,207.3 8.0,210.8 10.1,215.8 12.1,222.4 14.2,230.8 16.2,242.6 18.3,254.4 20.3,261.6 22.4,264.1 24.4,262.2 26.5,255.5 28.5,247.3 30.5,243.4 32.6,242.8 34.6,243.2 36.7,244.2 38.7,243.9 40.8,239.5 42.8,232.1 44.9,224.1 46.9,215.5 48.9,207.2 51.0,199.6 53.0,193.3 55.1,189.7 57.1,187.5 59.2,187.9 61.2,190.1 63.3,193.7 65.3,197.3 67.4,200.7 69.4,201.3 71.4,198.8 73.5,193.5 75.5,186.2 77.6,179.3 79.6,174.3 81.7,170.7 83.7,168.9 85.8,168.4 87.8,167.1 89.9,165.5 91.9,165.0 93.9,163.9 96.0,162.0 98.0,160.2 100.1,157.4 102.1,154.8 104.2,154.3 106.2,157.3 108.3,164.0 110.3,174.0 112.3,174.5 114.4,168.6 116.4,156.5 118.5,142.5 120.5,127.9 122.6,125.2 124.6,129.5 126.7,139.1 128.7,148.7 130.8,159.0 132.8,167.9 134.8,173.4 136.9,174.5 138.9,172.0 141.0,163.5 143.0,151.2 145.1,140.3 147.1,132.9 149.2,128.3 151.2,127.4 153.3,128.9 155.3,129.2 157.3,129.2 159.4,130.8 161.4,133.6 163.5,137.1 165.5,143.1 167.6,149.0 169.6,153.8 171.7,158.5 173.7,163.1 175.7,167.4 177.8,171.8 179.8,175.7 181.9,179.3 183.9,182.3 186.0,183.6 188.0,184.4 190.1,185.3 192.1,186.1 194.2,187.3 196.2,190.3 198.2,194.4 200.3,198.9 202.3,203.9 204.4,209.6 206.4,215.1 208.5,217.3 210.5,215.1 212.6,211.2 214.6,208.0 216.7,204.8 218.7,204.8 220.7,209.3 222.8,215.4 224.8,219.3 226.9,220.5 228.9,216.6 231.0,210.0 233.0,201.5 235.1,191.9 237.1,182.6 239.1,176.8 241.2,174.1 243.2,170.7 245.3,168.4 247.3,169.8 249.4,174.1 251.4,177.4 253.5,180.7 255.5,183.3 257.6,182.5 259.6,178.4 261.6,173.4 263.7,171.3 265.7,171.3 267.8,173.0 269.8,174.2 271.9,174.5 273.9,174.5 276.0,174.8 278.0,175.3 280.1,176.9 282.1,180.3 284.1,183.4 286.2,185.7 288.2,188.3 290.3,192.1 292.3,196.3 294.4,199.9 296.4,202.0 298.5,201.1 300.5,201.0 302.5,200.7 304.6,199.6 306.6,198.6 308.7,199.9 310.7,200.2 312.8,200.1 314.8,200.9 316.9,201.5 318.9,201.6 321.0,202.0 323.0,202.8 325.0,204.3 327.1,207.1 329.1,211.1 331.2,214.8 333.2,218.3 335.3,219.3 337.3,217.7 339.4,213.3 341.4,207.4 343.4,200.6 345.5,195.0 347.5,190.8 349.6,187.9 351.6,184.7 353.7,181.6 355.7,179.7 357.8,179.9 359.8,182.5 361.9,186.2 363.9,190.3 365.9,195.2 368.0,198.4 370.0,199.8 372.1,202.3 374.1,204.6 376.2,205.4 378.2,207.1 380.3,209.5 382.3,211.1 384.4,213.6 386.4,216.9 388.4,219.4 390.5,221.1 392.5,219.8 394.6,217.3 396.6,214.4 398.7,212.1 400.7,209.9 402.8,210.6 404.8,212.8 406.8,214.9 408.9,215.9 410.9,217.0 413.0,218.5 415.0,218.8 417.1,219.5 419.1,224.0 421.2,230.7 423.2,235.9 425.3,241.3 427.3,245.0 429.3,245.0 431.4,244.1 433.4,244.8 435.5,246.4 437.5,250.4 439.6,252.9 441.6,252.7 443.7,250.4 445.7,248.8 447.8,246.7 449.8,246.7 451.8,248.0 453.9,251.0 455.9,253.0 458.0,252.7 460.0,252.1 462.1,252.3 464.1,251.2 466.2,249.7 468.2,249.7 470.2,249.3 472.3,247.9 474.3,246.3 476.4,243.7 478.4,241.5 480.5,239.1 482.5,235.8 484.6,232.0 486.6,228.6 488.7,225.4 490.7,224.1 492.7,224.6 494.8,223.2 496.8,219.4 498.9,213.6 500.9,205.2 503.0,196.3 505.0,190.9 507.1,187.0 509.1,184.0 511.2,182.0 513.2,179.2 515.2,176.7 517.3,176.2 519.3,177.3 521.4,179.8 523.4,184.2 525.5,189.3 527.5,194.3 529.6,198.1 531.6,200.3 533.6,202.8 535.7,204.4 537.7,204.9 539.8,206.3 541.8,209.1 543.9,211.4 545.9,214.1 548.0,218.1 550.0,222.2 552.1,226.1 554.1,228.7 556.1,230.2 558.2,231.4 560.2,230.8 562.3,229.2 564.3,228.9 566.4,228.6 568.4,227.9 570.5,228.7 572.5,230.3 574.6,228.7 576.6,222.2 578.6,216.4 580.7,210.6 582.7,205.1 584.8,200.4 586.8,201.9 588.9,204.3 590.9,204.5 593.0,204.2 595.0,206.5 597.0,207.1 599.1,205.4 601.1,204.1 603.2,200.8 605.2,197.4 607.3,195.5 609.3,194.9 611.4,196.9 613.4,203.0 615.5,210.6 617.5,217.8" fill="none" stroke="#e040c0" stroke-width="1.00" stroke-linejoin="round"/>
<polyline points="6.0,167.9 8.0,177.2 10.1,187.7 12.1,199.2 14.2,211.6 16.2,225.0 18.3,232.6 20.3,238.7 22.4,243.2 24.4,246.5 26.5,249.1 28.5,250.8 30.5,252.5 32.6,253.4 34.6,252.7 36.7,249.9 38.7,245.6 40.8,241.5 42.8,237.4 44.9,233.6 46.9,229.9 48.9,225.5 51.0,219.5 53.0,212.7 55.1,206.9 57.1,201.5 59.2,197.6 61.2,194.8 63.3,193.5 65.3,193.5 67.4,194.1 69.4,194.6 71.4,194.5 73.5,193.6 75.5,191.8 77.6,190.0 79.6,187.8 81.7,184.8 83.7,181.2 85.8,177.3 87.8,173.2 89.9,169.9 91.9,167.8 93.9,166.4 96.0,165.2 98.0,163.7 100.1,161.4 102.1,159.9 104.2,159.1 106.2,159.6 108.3,162.1 110.3,165.7 112.3,164.6 114.4,161.5 116.4,156.9 118.5,153.3 120.5,151.0 122.6,149.9 124.6,149.1 126.7,147.8 128.7,145.6 130.8,143.4 132.8,146.6 134.8,151.4 136.9,156.8 138.9,160.4 141.0,161.2 143.0,159.5 145.1,156.8 147.1,153.7 149.2,150.2 151.2,145.5 153.3,140.0 155.3,134.8 157.3,131.1 159.4,129.6 161.4,130.5 163.5,133.0 165.5,136.2 167.6,139.1 169.6,142.3 171.7,146.0 173.7,150.1 175.7,155.3 177.8,160.4 179.8,164.7 181.9,168.9 183.9,172.7 186.0,175.5 188.0,178.1 190.1,180.5 192.1,182.7 194.2,184.8 196.2,187.0 198.2,189.4 200.3,192.1 202.3,195.0 204.4,198.4 206.4,202.7 208.5,205.8 210.5,207.0 212.6,207.6 214.6,208.8 216.7,210.0 218.7,211.1 220.7,212.2 222.8,213.3 224.8,213.6 226.9,212.7 228.9,210.7 231.0,209.7 233.0,208.5 235.1,205.6 237.1,201.5 239.1,196.7 241.2,192.1 243.2,186.1 245.3,180.1 247.3,176.2 249.4,175.5 251.4,175.8 253.5,175.7 255.5,175.9 257.6,176.1 259.6,176.2 261.6,175.4 263.7,176.0 265.7,177.3 267.8,177.7 269.8,176.3 271.9,174.0 273.9,172.9 276.0,173.0 278.0,174.1 280.1,175.6 282.1,177.4 284.1,178.9 286.2,180.3 288.2,181.8 290.3,184.5 292.3,188.3 294.4,191.6 296.4,193.9 298.5,194.7 300.5,196.6 302.5,198.5 304.6,199.7 306.6,200.3 308.7,200.5 310.7,200.6 312.8,200.4 314.8,200.2 316.9,200.1 318.9,200.8 321.0,201.1 323.0,201.5 325.0,202.6 327.1,204.3 329.1,206.3 331.2,208.4 333.2,210.6 335.3,211.8 337.3,212.4 339.4,212.2 341.4,211.1 343.4,209.5 345.5,207.2 347.5,204.3 349.6,200.6 351.6,196.1 353.7,191.1 355.7,187.4 357.8,185.4 359.8,185.2 361.9,185.5 363.9,185.9 365.9,187.4 368.0,189.2 370.0,191.2 372.1,194.2 374.1,197.4 376.2,200.3 378.2,202.8 380.3,204.7 382.3,206.7 384.4,209.1 386.4,211.1 388.4,213.3 390.5,215.3 392.5,215.4 394.6,215.4 396.6,215.6 398.7,215.8 400.7,215.5 402.8,215.2 404.8,215.0 406.8,214.7 408.9,214.0 410.9,213.4 413.0,214.5 415.0,215.8 417.1,217.2 419.1,220.0 421.2,223.8 423.2,227.2 425.3,230.1 427.3,232.3 429.3,234.5 431.4,237.4 433.4,240.3 435.5,243.8 437.5,247.7 439.6,248.9 441.6,248.4 443.7,247.6 445.7,247.6 447.8,248.6 449.8,249.8 451.8,250.4 453.9,250.7 455.9,250.9 458.0,249.7 460.0,249.4 462.1,250.1 464.1,251.1 466.2,251.4 468.2,251.2 470.2,250.7 472.3,250.1 474.3,248.8 476.4,246.7 478.4,245.6 480.5,244.2 482.5,241.9 484.6,239.1 486.6,236.2 488.7,233.5 490.7,231.6 492.7,230.2 494.8,227.6 496.8,224.0 498.9,219.5 500.9,214.6 503.0,210.5 505.0,207.0 507.1,203.2 509.1,198.8 511.2,193.6 513.2,187.8 515.2,183.8 517.3,181.6 519.3,180.7 521.4,180.9 523.4,181.7 525.5,183.0 527.5,185.3 529.6,187.7 531.6,190.0 533.6,193.5 535.7,196.9 537.7,199.6 539.8,202.2 541.8,204.7 543.9,207.1 545.9,209.2 548.0,211.5 550.0,214.3 552.1,217.6 554.1,220.1 556.1,222.1 558.2,224.7 560.2,226.5 562.3,227.7 564.3,228.8 566.4,229.4 568.4,229.6 570.5,229.7 572.5,229.8 574.6,228.8 576.6,225.4 578.6,222.1 580.7,219.6 582.7,217.7 584.8,214.6 586.8,212.1 588.9,210.4 590.9,207.6 593.0,204.7 595.0,203.4 597.0,204.5 599.1,204.9 601.1,204.3 603.2,202.5 605.2,201.9 607.3,201.3 609.3,200.2 611.4,200.5 613.4,201.9 615.5,204.0 617.5,206.6" fill="none" stroke="#3050c0" stroke-width="1.00" stroke-linejoin="round"/>
<line x1="5" y1="302.5" x2="698" y2="302.5" stroke="#a0a0a0"/>
<line x1="5" y1="431.5" x2="698" y2="431.5" stroke="#b4b4b4"/>
<line x1="644.5" y1="41" x2="644.5" y2="436" stroke="#a4a4a4"/>
<rect x="6" y="418.1" width="2" height="12.5" fill="#1f5fd8"/>
<rect x="8" y="421.9" width="2" height="8.7" fill="#1f5fd8"/>
<rect x="10" y="424.4" width="2" height="6.2" fill="#1f5fd8"/>
<rect x="12" y="424.1" width="2" height="6.5" fill="#1f5fd8"/>
<rect x="14" y="417.8" width="2" height="12.8" fill="#1f5fd8"/>
<rect x="16" y="422.3" width="2" height="8.3" fill="#1f5fd8"/>
<rect x="18" y="423.0" width="2" height="7.6" fill="#1f5fd8"/>
<rect x="20" y="423.8" width="2" height="6.8" fill="#f01010"/>
<rect x="22" y="422.0" width="2" height="8.6" fill="#f01010"/>
<rect x="24" y="422.3" width="2" height="8.3" fill="#f01010"/>
<rect x="26" y="419.4" width="2" height="11.2" fill="#f01010"/>
<rect x="28" y="423.3" width="2" height="7.3" fill="#f01010"/>
<rect x="30" y="417.6" width="2" height="13.0" fill="#f01010"/>
<rect x="32" y="418.4" width="2" height="12.2" fill="#1f5fd8"/>
<rect x="34" y="421.5" width="2" height="9.1" fill="#f01010"/>
<rect x="36" y="423.6" width="2" height="7.0" fill="#f01010"/>
<rect x="38" y="421.7" width="2" height="8.9" fill="#f01010"/>
<rect x="40" y="419.6" width="2" height="11.0" fill="#1f5fd8"/>
<rect x="42" y="424.4" width="2" height="6.2" fill="#f01010"/>
<rect x="44" y="420.6" width="2" height="10.0" fill="#f01010"/>
<rect x="46" y="422.5" width="2" height="8.1" fill="#f01010"/>
<rect x="48" y="418.6" width="2" height="12.0" fill="#f01010"/>
<rect x="50" y="422.8" width="2" height="7.8" fill="#1f5fd8"/>
<rect x="53" y="423.8" width="2" height="6.8" fill="#f01010"/>
<rect x="55" y="421.4" width="2" height="9.2" fill="#f01010"/>
<rect x="57" y="421.2" width="2" height="9.4" fill="#1f5fd8"/>
<rect x="59" y="424.0" width="2" height="6.6" fill="#1f5fd8"/>
<rect x="61" y="423.6" width="2" height="7.0" fill="#1f5fd8"/>
<rect x="63" y="424.3" width="2" height="6.3" fill="#1f5fd8"/>
<rect x="65" y="423.7" width="2" height="6.9" fill="#1f5fd8"/>
<rect x="67" y="423.1" width="2" height="7.5" fill="#f01010"/>
<rect x="69" y="424.6" width="2" height="6.0" fill="#f01010"/>
<rect x="71" y="423.5" width="2" height="7.1" fill="#f01010"/>
<rect x="73" y="426.5" width="2" height="4.1" fill="#f01010"/>
<rect x="75" y="423.8" width="2" height="6.8" fill="#f01010"/>
<rect x="77" y="422.9" width="2" height="7.7" fill="#f01010"/>
<rect x="79" y="425.2" width="2" height="5.4" fill="#f01010"/>
<rect x="81" y="425.9" width="2" height="4.7" fill="#1f5fd8"/>
<rect x="83" y="426.0" width="2" height="4.6" fill="#f01010"/>
<rect x="85" y="426.0" width="2" height="4.6" fill="#f01010"/>
<rect x="87" y="425.4" width="2" height="5.2" fill="#1f5fd8"/>
<rect x="89" y="425.3" width="2" height="5.3" fill="#1f5fd8"/>
<rect x="91" y="426.3" width="2" height="4.3" fill="#f01010"/>
<rect x="93" y="423.5" width="2" height="7.1" fill="#f01010"/>
<rect x="95" y="422.9" width="2" height="7.7" fill="#f01010"/>
<rect x="98" y="426.4" width="2" height="4.2" fill="#f01010"/>
<rect x="100" y="424.3" width="2" height="6.3" fill="#1f5fd8"/>
<rect x="102" y="424.9" width="2" height="5.7" fill="#1f5fd8"/>
<rect x="104" y="424.2" width="2" height="6.4" fill="#1f5fd8"/>
<rect x="106" y="423.9" width="2" height="6.7" fill="#1f5fd8"/>
<rect x="108" y="423.9" width="2" height="6.7" fill="#1f5fd8"/>
<rect x="110" y="421.6" width="2" height="9.0" fill="#1f5fd8"/>
<rect x="112" y="409.6" width="2" height="21.0" fill="#f01010"/>
<rect x="114" y="417.6" width="2" height="13.0" fill="#1f5fd8"/>
<rect x="116" y="425.0" width="2" height="5.6" fill="#f01010"/>
<rect x="118" y="426.8" width="2" height="3.8" fill="#1f5fd8"/>
<rect x="120" y="425.3" width="2" height="5.3" fill="#1f5fd8"/>
<rect x="122" y="425.9" width="2" height="4.7" fill="#1f5fd8"/>
<rect x="124" y="426.3" width="2" height="4.3" fill="#1f5fd8"/>
<rect x="126" y="423.6" width="2" height="7.0" fill="#1f5fd8"/>
<rect x="128" y="424.9" width="2" height="5.7" fill="#1f5fd8"/>
<rect x="130" y="426.1" width="2" height="4.5" fill="#1f5fd8"/>
<rect x="132" y="426.4" width="2" height="4.2" fill="#1f5fd8"/>
<rect x="134" y="424.7" width="2" height="5.9" fill="#f01010"/>
<rect x="136" y="423.8" width="2" height="6.8" fill="#f01010"/>
<rect x="138" y="423.6" width="2" height="7.0" fill="#f01010"/>
<rect x="140" y="424.2" width="2" height="6.4" fill="#f01010"/>
<rect x="143" y="424.1" width="2" height="6.5" fill="#f01010"/>
<rect x="145" y="426.5" width="2" height="4.1" fill="#1f5fd8"/>
<rect x="147" y="426.7" width="2" height="3.9" fill="#1f5fd8"/>
<rect x="149" y="424.6" width="2" height="6.0" fill="#f01010"/>
<rect x="151" y="424.8" width="2" height="5.8" fill="#1f5fd8"/>
<rect x="153" y="426.5" width="2" height="4.1" fill="#f01010"/>
<rect x="155" y="426.1" width="2" height="4.5" fill="#1f5fd8"/>
<rect x="157" y="427.2" width="2" height="3.4" fill="#f01010"/>
<rect x="159" y="424.6" width="2" height="6.0" fill="#1f5fd8"/>
<rect x="161" y="425.3" width="2" height="5.3" fill="#1f5fd8"/>
<rect x="163" y="424.1" width="2" height="6.5" fill="#f01010"/>
<rect x="165" y="423.9" width="2" height="6.7" fill="#1f5fd8"/>
<rect x="167" y="425.4" width="2" height="5.2" fill="#f01010"/>
<rect x="169" y="426.1" width="2" height="4.5" fill="#1f5fd8"/>
<rect x="171" y="426.3" width="2" height="4.3" fill="#1f5fd8"/>
<rect x="173" y="425.0" width="2" height="5.6" fill="#1f5fd8"/>
<rect x="175" y="423.9" width="2" height="6.7" fill="#f01010"/>
<rect x="177" y="427.1" width="2" height="3.5" fill="#1f5fd8"/>
<rect x="179" y="425.9" width="2" height="4.7" fill="#1f5fd8"/>
<rect x="181" y="424.7" width="2" height="5.9" fill="#f01010"/>
<rect x="183" y="427.0" width="2" height="3.6" fill="#1f5fd8"/>
<rect x="185" y="425.1" width="2" height="5.5" fill="#f01010"/>
<rect x="188" y="426.6" width="2" height="4.0" fill="#1f5fd8"/>
<rect x="190" y="425.5" width="2" height="5.1" fill="#1f5fd8"/>
<rect x="192" y="424.0" width="2" height="6.6" fill="#1f5fd8"/>
<rect x="194" y="427.4" width="2" height="3.2" fill="#1f5fd8"/>
<rect x="196" y="425.1" width="2" height="5.5" fill="#1f5fd8"/>
<rect x="198" y="425.6" width="2" height="5.0" fill="#1f5fd8"/>
<rect x="200" y="424.6" width="2" height="6.0" fill="#f01010"/>
<rect x="202" y="426.4" width="2" height="4.2" fill="#1f5fd8"/>
<rect x="204" y="424.3" width="2" height="6.3" fill="#1f5fd8"/>
<rect x="206" y="424.2" width="2" height="6.4" fill="#f01010"/>
<rect x="208" y="427.4" width="2" height="3.2" fill="#f01010"/>
<rect x="210" y="426.4" width="2" height="4.2" fill="#f01010"/>
<rect x="212" y="426.7" width="2" height="3.9" fill="#f01010"/>
<rect x="214" y="424.7" width="2" height="5.9" fill="#1f5fd8"/>
<rect x="216" y="424.4" width="2" height="6.2" fill="#1f5fd8"/>
<rect x="218" y="424.9" width="2" height="5.7" fill="#1f5fd8"/>
<rect x="220" y="424.6" width="2" height="6.0" fill="#1f5fd8"/>
<rect x="222" y="425.6" width="2" height="5.0" fill="#f01010"/>
<rect x="224" y="424.5" width="2" height="6.1" fill="#f01010"/>
<rect x="226" y="426.6" width="2" height="4.0" fill="#f01010"/>
<rect x="228" y="427.2" width="2" height="3.4" fill="#f01010"/>
<rect x="230" y="425.0" width="2" height="5.6" fill="#f01010"/>
<rect x="233" y="426.0" width="2" height="4.6" fill="#1f5fd8"/>
<rect x="235" y="427.5" width="2" height="3.1" fill="#1f5fd8"/>
<rect x="237" y="424.8" width="2" height="5.8" fill="#f01010"/>
<rect x="239" y="427.1" width="2" height="3.5" fill="#f01010"/>
<rect x="241" y="426.7" width="2" height="3.9" fill="#f01010"/>
<rect x="243" y="427.3" width="2" height="3.3" fill="#f01010"/>
<rect x="245" y="425.4" width="2" height="5.2" fill="#1f5fd8"/>
<rect x="247" y="427.0" width="2" height="3.6" fill="#1f5fd8"/>
<rect x="249" y="426.5" width="2" height="4.1" fill="#1f5fd8"/>
<rect x="251" y="425.7" width="2" height="4.9" fill="#1f5fd8"/>
<rect x="253" y="424.3" width="2" height="6.3" fill="#f01010"/>
<rect x="255" y="427.5" width="2" height="3.1" fill="#f01010"/>
<rect x="257" y="424.4" width="2" height="6.2" fill="#f01010"/>
<rect x="259" y="425.0" width="2" height="5.6" fill="#f01010"/>
<rect x="261" y="426.7" width="2" height="3.9" fill="#f01010"/>
<rect x="263" y="424.7" width="2" height="5.9" fill="#1f5fd8"/>
<rect x="265" y="425.4" width="2" height="5.2" fill="#1f5fd8"/>
<rect x="267" y="426.0" width="2" height="4.6" fill="#f01010"/>
<rect x="269" y="426.8" width="2" height="3.8" fill="#f01010"/>
<rect x="271" y="426.0" width="2" height="4.6" fill="#f01010"/>
<rect x="273" y="426.4" width="2" height="4.2" fill="#1f5fd8"/>
<rect x="275" y="427.3" width="2" height="3.3" fill="#1f5fd8"/>
<rect x="278" y="427.0" width="2" height="3.6" fill="#1f5fd8"/>
<rect x="280" y="426.6" width="2" height="4.0" fill="#1f5fd8"/>
<rect x="282" y="426.0" width="2" height="4.6" fill="#1f5fd8"/>
<rect x="284" y="425.5" width="2" height="5.1" fill="#1f5fd8"/>
<rect x="286" y="424.9" width="2" height="5.7" fill="#1f5fd8"/>
<rect x="288" y="427.2" width="2" height="3.4" fill="#1f5fd8"/>
<rect x="290" y="427.2" width="2" height="3.4" fill="#1f5fd8"/>
<rect x="292" y="424.5" width="2" height="6.1" fill="#1f5fd8"/>
<rect x="294" y="425.7" width="2" height="4.9" fill="#f01010"/>
<rect x="296" y="426.8" width="2" height="3.8" fill="#1f5fd8"/>
<rect x="298" y="426.8" width="2" height="3.8" fill="#f01010"/>
<rect x="300" y="425.3" width="2" height="5.3" fill="#1f5fd8"/>
<rect x="302" y="426.0" width="2" height="4.6" fill="#f01010"/>
<rect x="304" y="426.2" width="2" height="4.4" fill="#f01010"/>
<rect x="306" y="424.3" width="2" height="6.3" fill="#f01010"/>
<rect x="308" y="427.5" width="2" height="3.1" fill="#1f5fd8"/>
<rect x="310" y="425.4" width="2" height="5.2" fill="#1f5fd8"/>
<rect x="312" y="425.2" width="2" height="5.4" fill="#f01010"/>
<rect x="314" y="425.5" width="2" height="5.1" fill="#f01010"/>
<rect x="316" y="425.5" width="2" height="5.1" fill="#f01010"/>
<rect x="318" y="427.5" width="2" height="3.1" fill="#f01010"/>
<rect x="320" y="424.2" width="2" height="6.4" fill="#1f5fd8"/>
<rect x="322" y="427.4" width="2" height="3.2" fill="#1f5fd8"/>
<rect x="325" y="426.3" width="2" height="4.3" fill="#f01010"/>
<rect x="327" y="426.2" width="2" height="4.4" fill="#1f5fd8"/>
<rect x="329" y="424.7" width="2" height="5.9" fill="#f01010"/>
<rect x="331" y="425.1" width="2" height="5.5" fill="#1f5fd8"/>
<rect x="333" y="424.6" width="2" height="6.0" fill="#f01010"/>
<rect x="335" y="425.6" width="2" height="5.0" fill="#f01010"/>
<rect x="337" y="424.1" width="2" height="6.5" fill="#f01010"/>
<rect x="339" y="426.5" width="2" height="4.1" fill="#f01010"/>
<rect x="341" y="426.2" width="2" height="4.4" fill="#f01010"/>
<rect x="343" y="425.6" width="2" height="5.0" fill="#f01010"/>
<rect x="345" y="426.5" width="2" height="4.1" fill="#f01010"/>
<rect x="347" y="427.1" width="2" height="3.5" fill="#f01010"/>
<rect x="349" y="425.2" width="2" height="5.4" fill="#1f5fd8"/>
<rect x="351" y="426.4" width="2" height="4.2" fill="#f01010"/>
<rect x="353" y="424.6" width="2" height="6.0" fill="#f01010"/>
<rect x="355" y="425.3" width="2" height="5.3" fill="#1f5fd8"/>
<rect x="357" y="427.6" width="2" height="3.0" fill="#1f5fd8"/>
<rect x="359" y="427.2" width="2" height="3.4" fill="#1f5fd8"/>
<rect x="361" y="426.9" width="2" height="3.7" fill="#f01010"/>
<rect x="363" y="426.5" width="2" height="4.1" fill="#1f5fd8"/>
<rect x="365" y="426.9" width="2" height="3.7" fill="#1f5fd8"/>
<rect x="367" y="425.3" width="2" height="5.3" fill="#1f5fd8"/>
<rect x="370" y="426.8" width="2" height="3.8" fill="#1f5fd8"/>
<rect x="372" y="426.1" width="2" height="4.5" fill="#1f5fd8"/>
<rect x="374" y="426.2" width="2" height="4.4" fill="#1f5fd8"/>
<rect x="376" y="424.1" width="2" height="6.5" fill="#f01010"/>
<rect x="378" y="426.0" width="2" height="4.6" fill="#f01010"/>
<rect x="380" y="427.4" width="2" height="3.2" fill="#1f5fd8"/>
<rect x="382" y="424.2" width="2" height="6.4" fill="#f01010"/>
<rect x="384" y="424.2" width="2" height="6.4" fill="#1f5fd8"/>
<rect x="386" y="427.5" width="2" height="3.1" fill="#1f5fd8"/>
<rect x="388" y="424.6" width="2" height="6.0" fill="#f01010"/>
<rect x="390" y="425.4" width="2" height="5.2" fill="#f01010"/>
<rect x="392" y="424.4" width="2" height="6.2" fill="#f01010"/>
<rect x="394" y="425.4" width="2" height="5.2" fill="#f01010"/>
<rect x="396" y="425.4" width="2" height="5.2" fill="#f01010"/>
<rect x="398" y="424.8" width="2" height="5.8" fill="#1f5fd8"/>
<rect x="400" y="427.5" width="2" height="3.1" fill="#1f5fd8"/>
<rect x="402" y="427.2" width="2" height="3.4" fill="#f01010"/>
<rect x="404" y="427.2" width="2" height="3.4" fill="#1f5fd8"/>
<rect x="406" y="427.6" width="2" height="3.0" fill="#f01010"/>
<rect x="408" y="426.8" width="2" height="3.8" fill="#f01010"/>
<rect x="410" y="427.5" width="2" height="3.1" fill="#1f5fd8"/>
<rect x="412" y="427.2" width="2" height="3.4" fill="#1f5fd8"/>
<rect x="415" y="426.4" width="2" height="4.2" fill="#1f5fd8"/>
<rect x="417" y="427.0" width="2" height="3.6" fill="#1f5fd8"/>
<rect x="419" y="314.6" width="2" height="116.0" fill="#f01010"/>
<rect x="421" y="424.2" width="2" height="6.4" fill="#f01010"/>
<rect x="423" y="424.4" width="2" height="6.2" fill="#f01010"/>
<rect x="425" y="424.4" width="2" height="6.2" fill="#f01010"/>
<rect x="427" y="427.3" width="2" height="3.3" fill="#f01010"/>
<rect x="429" y="425.5" width="2" height="5.1" fill="#1f5fd8"/>
<rect x="431" y="424.3" width="2" height="6.3" fill="#1f5fd8"/>
<rect x="433" y="426.1" width="2" height="4.5" fill="#1f5fd8"/>
<rect x="435" y="425.8" width="2" height="4.8" fill="#1f5fd8"/>
<rect x="437" y="424.5" width="2" height="6.1" fill="#f01010"/>
<rect x="439" y="424.4" width="2" height="6.2" fill="#f01010"/>
<rect x="441" y="425.6" width="2" height="5.0" fill="#f01010"/>
<rect x="443" y="426.6" width="2" height="4.0" fill="#f01010"/>
<rect x="445" y="425.0" width="2" height="5.6" fill="#1f5fd8"/>
<rect x="447" y="425.0" width="2" height="5.6" fill="#1f5fd8"/>
<rect x="449" y="426.6" width="2" height="4.0" fill="#1f5fd8"/>
<rect x="451" y="426.0" width="2" height="4.6" fill="#f01010"/>
<rect x="453" y="425.2" width="2" height="5.4" fill="#1f5fd8"/>
<rect x="455" y="426.8" width="2" height="3.8" fill="#f01010"/>
<rect x="457" y="426.2" width="2" height="4.4" fill="#f01010"/>
<rect x="460" y="425.7" width="2" height="4.9" fill="#f01010"/>
<rect x="462" y="422.6" width="2" height="8.0" fill="#f01010"/>
<rect x="464" y="424.5" width="2" height="6.1" fill="#1f5fd8"/>
<rect x="466" y="426.5" width="2" height="4.1" fill="#f01010"/>
<rect x="468" y="421.6" width="2" height="9.0" fill="#f01010"/>
<rect x="470" y="424.7" width="2" height="5.9" fill="#f01010"/>
<rect x="472" y="427.5" width="2" height="3.1" fill="#1f5fd8"/>
<rect x="474" y="426.4" width="2" height="4.2" fill="#f01010"/>
<rect x="476" y="426.9" width="2" height="3.7" fill="#1f5fd8"/>
<rect x="478" y="425.7" width="2" height="4.9" fill="#f01010"/>
<rect x="480" y="424.2" width="2" height="6.4" fill="#f01010"/>
<rect x="482" y="426.2" width="2" height="4.4" fill="#f01010"/>
<rect x="484" y="424.4" width="2" height="6.2" fill="#f01010"/>
<rect x="486" y="420.6" width="2" height="10.0" fill="#f01010"/>
<rect x="488" y="424.3" width="2" height="6.3" fill="#f01010"/>
<rect x="490" y="426.5" width="2" height="4.1" fill="#f01010"/>
<rect x="492" y="426.5" width="2" height="4.1" fill="#1f5fd8"/>
<rect x="494" y="416.6" width="2" height="14.0" fill="#f01010"/>
<rect x="496" y="405.6" width="2" height="25.0" fill="#f01010"/>
<rect x="498" y="426.8" width="2" height="3.8" fill="#f01010"/>
<rect x="500" y="427.4" width="2" height="3.2" fill="#f01010"/>
<rect x="502" y="427.5" width="2" height="3.1" fill="#f01010"/>
<rect x="505" y="425.7" width="2" height="4.9" fill="#f01010"/>
<rect x="507" y="425.5" width="2" height="5.1" fill="#f01010"/>
<rect x="509" y="426.4" width="2" height="4.2" fill="#f01010"/>
<rect x="511" y="425.3" width="2" height="5.3" fill="#f01010"/>
<rect x="513" y="425.8" width="2" height="4.8" fill="#1f5fd8"/>
<rect x="515" y="424.7" width="2" height="5.9" fill="#1f5fd8"/>
<rect x="517" y="426.4" width="2" height="4.2" fill="#1f5fd8"/>
<rect x="519" y="424.9" width="2" height="5.7" fill="#1f5fd8"/>
<rect x="521" y="425.8" width="2" height="4.8" fill="#1f5fd8"/>
<rect x="523" y="424.1" width="2" height="6.5" fill="#1f5fd8"/>
<rect x="525" y="425.2" width="2" height="5.4" fill="#1f5fd8"/>
<rect x="527" y="424.3" width="2" height="6.3" fill="#1f5fd8"/>
<rect x="529" y="426.1" width="2" height="4.5" fill="#f01010"/>
<rect x="531" y="425.3" width="2" height="5.3" fill="#1f5fd8"/>
<rect x="533" y="427.1" width="2" height="3.5" fill="#1f5fd8"/>
<rect x="535" y="426.9" width="2" height="3.7" fill="#1f5fd8"/>
<rect x="537" y="425.5" width="2" height="5.1" fill="#f01010"/>
<rect x="539" y="426.6" width="2" height="4.0" fill="#1f5fd8"/>
<rect x="541" y="424.7" width="2" height="5.9" fill="#1f5fd8"/>
<rect x="543" y="427.3" width="2" height="3.3" fill="#1f5fd8"/>
<rect x="545" y="423.6" width="2" height="7.0" fill="#f01010"/>
<rect x="547" y="424.4" width="2" height="6.2" fill="#1f5fd8"/>
<rect x="550" y="424.1" width="2" height="6.5" fill="#1f5fd8"/>
<rect x="552" y="426.7" width="2" height="3.9" fill="#1f5fd8"/>
<rect x="554" y="425.4" width="2" height="5.2" fill="#1f5fd8"/>
<rect x="556" y="425.4" width="2" height="5.2" fill="#f01010"/>
<rect x="558" y="425.1" width="2" height="5.5" fill="#1f5fd8"/>
<rect x="560" y="426.2" width="2" height="4.4" fill="#f01010"/>
<rect x="562" y="427.2" width="2" height="3.4" fill="#1f5fd8"/>
<rect x="564" y="426.2" width="2" height="4.4" fill="#f01010"/>
<rect x="566" y="425.7" width="2" height="4.9" fill="#1f5fd8"/>
<rect x="568" y="427.2" width="2" height="3.4" fill="#1f5fd8"/>
<rect x="570" y="426.2" width="2" height="4.4" fill="#1f5fd8"/>
<rect x="572" y="424.1" width="2" height="6.5" fill="#f01010"/>
<rect x="574" y="427.1" width="2" height="3.5" fill="#f01010"/>
<rect x="576" y="414.6" width="2" height="16.0" fill="#f01010"/>
<rect x="578" y="426.6" width="2" height="4.0" fill="#1f5fd8"/>
<rect x="580" y="425.4" width="2" height="5.2" fill="#1f5fd8"/>
<rect x="582" y="427.2" width="2" height="3.4" fill="#f01010"/>
<rect x="584" y="424.6" width="2" height="6.0" fill="#f01010"/>
<rect x="586" y="425.2" width="2" height="5.4" fill="#1f5fd8"/>
<rect x="588" y="426.6" width="2" height="4.0" fill="#1f5fd8"/>
<rect x="590" y="426.4" width="2" height="4.2" fill="#f01010"/>
<rect x="592" y="426.4" width="2" height="4.2" fill="#1f5fd8"/>
<rect x="595" y="425.8" width="2" height="4.8" fill="#f01010"/>
<rect x="597" y="425.5" width="2" height="5.1" fill="#f01010"/>
<rect x="599" y="425.3" width="2" height="5.3" fill="#f01010"/>
<rect x="601" y="427.6" width="2" height="3.0" fill="#f01010"/>
<rect x="603" y="422.6" width="2" height="8.0" fill="#f01010"/>
<rect x="605" y="424.1" width="2" height="6.5" fill="#1f5fd8"/>
<rect x="607" y="426.3" width="2" height="4.3" fill="#1f5fd8"/>
<rect x="609" y="426.5" width="2" height="4.1" fill="#1f5fd8"/>
<rect x="611" y="425.7" width="2" height="4.9" fill="#1f5fd8"/>
<rect x="613" y="424.8" width="2" height="5.8" fill="#1f5fd8"/>
<rect x="615" y="426.1" width="2" height="4.5" fill="#1f5fd8"/>
<rect x="617" y="426.3" width="2" height="4.3" fill="#f01010"/>
<polyline points="5.5,420.7 7.5,420.7 9.6,420.7 11.6,420.7 13.7,420.7 15.7,420.7 17.8,420.7 19.8,420.8 21.9,420.8 23.9,420.8 26.0,420.8 28.0,420.8 30.0,420.8 32.1,420.7 34.1,420.7 36.2,420.8 38.2,420.8 40.3,420.7 42.3,420.8 44.4,420.8 46.4,420.8 48.4,420.8 50.5,420.8 52.5,420.8 54.6,420.8 56.6,420.8 58.7,420.8 60.7,420.8 62.8,420.9 64.8,420.9 66.9,420.9 68.9,420.9 70.9,421.0 73.0,421.0 75.0,421.0 77.1,421.0 79.1,421.1 81.2,421.1 83.2,421.2 85.3,421.2 87.3,421.2 89.4,421.3 91.4,421.3 93.4,421.3 95.5,421.3 97.5,421.4 99.6,421.4 101.6,421.5 103.7,421.5 105.7,421.5 107.8,421.5 109.8,421.5 111.8,421.4 113.9,421.4 115.9,421.4 118.0,421.5 120.0,421.5 122.1,421.6 124.1,421.6 126.2,421.6 128.2,421.7 130.3,421.7 132.3,421.7 134.3,421.8 136.4,421.8 138.4,421.8 140.5,421.8 142.5,421.9 144.6,421.9 146.6,422.0 148.7,422.0 150.7,422.0 152.8,422.1 154.8,422.1 156.8,422.2 158.9,422.2 160.9,422.2 163.0,422.2 165.0,422.3 167.1,422.3 169.1,422.3 171.2,422.4 173.2,422.4 175.2,422.4 177.3,422.5 179.3,422.5 181.4,422.6 183.4,422.6 185.5,422.6 187.5,422.7 189.6,422.7 191.6,422.8 193.7,422.8 195.7,422.8 197.7,422.9 199.8,422.9 201.8,422.9 203.9,423.0 205.9,423.0 208.0,423.1 210.0,423.1 212.1,423.1 214.1,423.2 216.2,423.2 218.2,423.2 220.2,423.3 222.3,423.3 224.3,423.3 226.4,423.4 228.4,423.4 230.5,423.5 232.5,423.5 234.6,423.6 236.6,423.6 238.6,423.6 240.7,423.7 242.7,423.7 244.8,423.9 246.8,424.1 248.9,424.3 250.9,424.3 253.0,424.3 255.0,424.4 257.1,424.4 259.1,424.4 261.1,424.5 263.2,424.5 265.2,424.5 267.3,424.5 269.3,424.6 271.4,424.6 273.4,424.6 275.5,424.7 277.5,424.8 279.6,424.8 281.6,424.9 283.6,424.9 285.7,424.9 287.7,425.0 289.8,425.0 291.8,425.0 293.9,425.1 295.9,425.1 298.0,425.1 300.0,425.2 302.0,425.2 304.1,425.2 306.1,425.2 308.2,425.3 310.2,425.3 312.3,425.3 314.3,425.3 316.4,425.3 318.4,425.3 320.5,425.3 322.5,425.4 324.5,425.4 326.6,425.4 328.6,425.4 330.7,425.4 332.7,425.4 334.8,425.4 336.8,425.3 338.9,425.4 340.9,425.4 342.9,425.4 345.0,425.4 347.0,425.4 349.1,425.4 351.1,425.5 353.2,425.5 355.2,425.5 357.3,425.6 359.3,425.7 361.4,425.7 363.4,425.7 365.4,425.7 367.5,425.7 369.5,425.7 371.6,425.8 373.6,425.8 375.7,425.8 377.7,425.8 379.8,425.8 381.8,425.8 383.9,425.8 385.9,425.8 387.9,425.8 390.0,425.8 392.0,425.8 394.1,425.8 396.1,425.8 398.2,425.8 400.2,425.8 402.3,425.8 404.3,425.8 406.3,425.8 408.4,425.9 410.4,425.9 412.5,425.9 414.5,425.9 416.6,425.9 418.6,425.0 420.7,425.0 422.7,425.0 424.8,425.0 426.8,425.0 428.8,425.0 430.9,425.0 432.9,425.0 435.0,425.0 437.0,425.0 439.1,424.9 441.1,424.9 443.2,425.0 445.2,425.0 447.3,425.0 449.3,425.0 451.3,425.0 453.4,425.0 455.4,425.0 457.5,425.0 459.5,425.0 461.6,425.0 463.6,425.0 465.7,425.0 467.7,424.9 469.7,424.9 471.8,424.9 473.8,424.9 475.9,425.0 477.9,425.0 480.0,424.9 482.0,424.9 484.1,424.9 486.1,424.9 488.2,424.8 490.2,424.8 492.2,424.8 494.3,424.8 496.3,424.6 498.4,424.6 500.4,424.6 502.5,424.6 504.5,424.6 506.6,424.6 508.6,424.7 510.7,424.7 512.7,424.6 514.7,424.6 516.8,424.6 518.8,424.6 520.9,424.6 522.9,424.6 525.0,424.6 527.0,424.6 529.1,424.6 531.1,424.6 533.1,424.6 535.2,424.6 537.2,424.6 539.3,424.6 541.3,424.6 543.4,424.6 545.4,424.6 547.5,424.5 549.5,424.5 551.6,424.5 553.6,424.5 555.6,424.5 557.7,424.5 559.7,424.5 561.8,424.5 563.8,424.5 565.9,424.5 567.9,424.5 570.0,424.5 572.0,424.5 574.1,424.5 576.1,424.5 578.1,424.5 580.2,424.5 582.2,424.5 584.3,424.5 586.3,424.5 588.4,424.5 590.4,424.5 592.5,424.5 594.5,424.5 596.5,424.5 598.6,424.5 600.6,424.5 602.7,424.5 604.7,424.4 606.8,424.4 608.8,424.4 610.9,424.4 612.9,424.4 615.0,424.4 617.0,424.4" fill="none" stroke="#8c8c8c" stroke-width="1.00" stroke-linejoin="round"/>
<polyline points="5.5,420.3 7.5,420.3 9.6,420.3 11.6,420.4 13.7,420.3 15.7,420.3 17.8,420.4 19.8,420.4 21.9,420.4 23.9,420.5 26.0,420.4 28.0,420.5 30.0,420.4 32.1,420.4 34.1,420.4 36.2,420.4 38.2,420.4 40.3,420.4 42.3,420.4 44.4,420.4 46.4,420.5 48.4,420.4 50.5,420.4 52.5,420.5 54.6,420.5 56.6,420.5 58.7,420.6 60.7,420.6 62.8,420.6 64.8,420.7 66.9,420.7 68.9,420.8 70.9,420.8 73.0,420.9 75.0,421.0 77.1,421.0 79.1,421.1 81.2,421.1 83.2,421.2 85.3,421.3 87.3,421.4 89.4,421.4 91.4,421.5 93.4,421.6 95.5,421.6 97.5,421.7 99.6,421.7 101.6,421.8 103.7,421.9 105.7,421.9 107.8,421.9 109.8,422.0 111.8,421.8 113.9,421.7 115.9,421.8 118.0,421.9 120.0,421.9 122.1,422.2 124.1,422.6 126.2,422.9 128.2,423.0 130.3,423.1 132.3,423.2 134.3,423.2 136.4,423.3 138.4,423.3 140.5,423.3 142.5,423.3 144.6,423.4 146.6,423.5 148.7,423.5 150.7,423.6 152.8,423.7 154.8,423.8 156.8,423.9 158.9,424.0 160.9,424.0 163.0,424.1 165.0,424.1 167.1,424.2 169.1,424.2 171.2,424.3 173.2,424.4 175.2,424.4 177.3,424.5 179.3,424.6 181.4,424.6 183.4,424.6 185.5,424.6 187.5,424.7 189.6,424.7 191.6,424.7 193.7,424.8 195.7,424.8 197.7,424.8 199.8,424.8 201.8,424.8 203.9,424.8 205.9,424.8 208.0,424.8 210.0,424.8 212.1,424.8 214.1,424.8 216.2,424.8 218.2,424.9 220.2,424.8 222.3,424.9 224.3,424.9 226.4,424.9 228.4,424.9 230.5,425.0 232.5,425.0 234.6,425.3 236.6,425.5 238.6,425.5 240.7,425.5 242.7,425.5 244.8,425.5 246.8,425.5 248.9,425.6 250.9,425.6 253.0,425.6 255.0,425.6 257.1,425.6 259.1,425.6 261.1,425.6 263.2,425.7 265.2,425.7 267.3,425.7 269.3,425.7 271.4,425.7 273.4,425.7 275.5,425.7 277.5,425.7 279.6,425.7 281.6,425.8 283.6,425.8 285.7,425.8 287.7,425.8 289.8,425.9 291.8,425.8 293.9,425.8 295.9,425.9 298.0,425.9 300.0,425.9 302.0,425.9 304.1,425.9 306.1,425.9 308.2,425.9 310.2,425.9 312.3,425.9 314.3,425.9 316.4,425.9 318.4,425.9 320.5,425.9 322.5,425.9 324.5,425.9 326.6,426.0 328.6,426.0 330.7,425.9 332.7,425.9 334.8,425.9 336.8,425.9 338.9,425.9 340.9,425.9 342.9,425.9 345.0,426.0 347.0,426.0 349.1,426.0 351.1,426.0 353.2,426.0 355.2,425.9 357.3,425.9 359.3,426.0 361.4,426.0 363.4,426.0 365.4,426.0 367.5,426.0 369.5,426.0 371.6,426.0 373.6,426.0 375.7,426.0 377.7,425.9 379.8,426.0 381.8,426.0 383.9,425.9 385.9,426.0 387.9,426.0 390.0,426.0 392.0,425.9 394.1,425.9 396.1,425.9 398.2,425.9 400.2,425.9 402.3,425.9 404.3,425.9 406.3,425.9 408.4,426.0 410.4,426.0 412.5,426.0 414.5,426.0 416.6,426.0 418.6,424.1 420.7,424.1 422.7,424.1 424.8,424.1 426.8,424.1 428.8,424.1 430.9,424.0 432.9,424.1 435.0,424.1 437.0,424.0 439.1,424.0 441.1,424.0 443.2,424.0 445.2,424.0 447.3,424.0 449.3,424.0 451.3,424.0 453.4,424.0 455.4,424.0 457.5,424.1 459.5,424.1 461.6,424.0 463.6,424.0 465.7,424.0 467.7,423.9 469.7,423.9 471.8,423.9 473.8,423.9 475.9,424.0 477.9,424.0 480.0,423.9 482.0,423.9 484.1,423.9 486.1,423.8 488.2,423.7 490.2,423.7 492.2,423.7 494.3,423.6 496.3,423.2 498.4,423.3 500.4,423.3 502.5,423.3 504.5,423.3 506.6,423.3 508.6,423.3 510.7,423.3 512.7,423.3 514.7,423.3 516.8,423.4 518.8,423.4 520.9,423.4 522.9,423.3 525.0,423.3 527.0,423.2 529.1,423.2 531.1,423.2 533.1,423.2 535.2,423.2 537.2,423.2 539.3,423.1 541.3,425.0 543.4,425.0 545.4,425.0 547.5,425.0 549.5,425.0 551.6,425.0 553.6,425.0 555.6,425.0 557.7,425.0 559.7,425.0 561.8,425.1 563.8,425.1 565.9,425.0 567.9,425.1 570.0,425.1 572.0,425.1 574.1,425.1 576.1,424.9 578.1,424.9 580.2,424.9 582.2,424.9 584.3,424.9 586.3,425.0 588.4,425.0 590.4,425.0 592.5,425.1 594.5,425.0 596.5,425.0 598.6,425.0 600.6,425.0 602.7,425.0 604.7,425.0 606.8,425.0 608.8,425.1 610.9,425.1 612.9,425.1 615.0,425.1 617.0,425.2" fill="none" stroke="#22aa44" stroke-width="1.00" stroke-linejoin="round"/>
<polyline points="5.5,418.6 7.5,418.6 9.6,418.8 11.6,418.9 13.7,418.8 15.7,418.8 17.8,418.9 19.8,419.1 21.9,419.1 23.9,419.2 26.0,419.1 28.0,419.2 30.0,419.0 32.1,418.9 34.1,418.9 36.2,419.0 38.2,419.1 40.3,419.6 42.3,420.6 44.4,421.5 46.4,421.7 48.4,421.5 50.5,421.5 52.5,421.5 54.6,421.6 56.6,421.6 58.7,421.6 60.7,421.6 62.8,421.7 64.8,421.8 66.9,422.0 68.9,422.1 70.9,422.4 73.0,422.8 75.0,422.9 77.1,422.8 79.1,423.0 81.2,423.3 83.2,423.4 85.3,423.7 87.3,423.8 89.4,424.2 91.4,424.3 93.4,424.3 95.5,424.4 97.5,424.6 99.6,424.7 101.6,424.7 103.7,424.7 105.7,424.7 107.8,424.8 109.8,424.6 111.8,423.9 113.9,423.5 115.9,423.5 118.0,423.7 120.0,423.7 122.1,423.7 124.1,423.7 126.2,423.6 128.2,423.6 130.3,423.7 132.3,423.7 134.3,423.7 136.4,423.8 138.4,423.6 140.5,423.6 142.5,423.6 144.6,423.7 146.6,423.8 148.7,423.9 150.7,424.0 152.8,424.9 154.8,425.3 156.8,425.4 158.9,425.3 160.9,425.3 163.0,425.2 165.0,425.1 167.1,425.2 169.1,425.2 171.2,425.2 173.2,425.2 175.2,425.1 177.3,425.3 179.3,425.4 181.4,425.4 183.4,425.6 185.5,425.5 187.5,425.5 189.6,425.6 191.6,425.5 193.7,425.6 195.7,425.5 197.7,425.4 199.8,425.4 201.8,425.5 203.9,425.5 205.9,425.5 208.0,425.6 210.0,425.6 212.1,425.6 214.1,425.6 216.2,425.7 218.2,425.5 220.2,425.5 222.3,425.5 224.3,425.4 226.4,425.5 228.4,425.5 230.5,425.5 232.5,425.6 234.6,425.6 236.6,425.6 238.6,425.6 240.7,425.7 242.7,425.8 244.8,425.9 246.8,426.0 248.9,425.9 250.9,425.9 253.0,425.8 255.0,425.9 257.1,425.9 259.1,425.9 261.1,426.0 263.2,426.0 265.2,426.0 267.3,426.0 269.3,426.0 271.4,426.0 273.4,426.1 275.5,426.0 277.5,426.2 279.6,426.1 281.6,426.1 283.6,426.0 285.7,426.0 287.7,426.0 289.8,426.0 291.8,426.0 293.9,426.0 295.9,426.0 298.0,426.1 300.0,426.1 302.0,426.1 304.1,426.2 306.1,426.1 308.2,426.2 310.2,426.1 312.3,426.1 314.3,426.0 316.4,426.0 318.4,426.0 320.5,425.9 322.5,425.9 324.5,426.0 326.6,426.0 328.6,425.9 330.7,425.8 332.7,425.8 334.8,425.8 336.8,425.7 338.9,425.7 340.9,425.7 342.9,425.7 345.0,425.7 347.0,425.8 349.1,425.7 351.1,425.8 353.2,425.7 355.2,425.7 357.3,425.8 359.3,425.8 361.4,426.0 363.4,425.9 365.4,425.9 367.5,425.9 369.5,426.0 371.6,426.0 373.6,426.1 375.7,426.1 377.7,426.1 379.8,426.2 381.8,426.1 383.9,426.0 385.9,426.1 387.9,425.9 390.0,426.0 392.0,425.9 394.1,425.9 396.1,425.9 398.2,425.8 400.2,425.8 402.3,425.8 404.3,425.8 406.3,425.9 408.4,425.9 410.4,426.0 412.5,426.0 414.5,426.0 416.6,426.2 418.6,420.6 420.7,420.4 422.7,420.5 424.8,420.5 426.8,420.5 428.8,420.5 430.9,420.5 432.9,420.5 435.0,420.6 437.0,420.5 439.1,420.5 441.1,420.4 443.2,420.4 445.2,420.3 447.3,420.1 449.3,420.1 451.3,420.1 453.4,420.0 455.4,420.0 457.5,419.9 459.5,425.5 461.6,425.4 463.6,425.4 465.7,425.5 467.7,425.2 469.7,425.2 471.8,425.3 473.8,425.4 475.9,425.4 477.9,425.5 480.0,425.5 482.0,425.5 484.1,425.4 486.1,425.2 488.2,425.1 490.2,425.1 492.2,425.2 494.3,424.7 496.3,423.7 498.4,423.7 500.4,423.8 502.5,424.0 504.5,424.1 506.6,424.0 508.6,424.3 510.7,424.3 512.7,424.2 514.7,424.1 516.8,424.1 518.8,424.1 520.9,424.1 522.9,424.0 525.0,424.1 527.0,424.3 529.1,424.4 531.1,424.3 533.1,424.3 535.2,424.8 537.2,425.8 539.3,425.8 541.3,425.7 543.4,425.7 545.4,425.6 547.5,425.5 549.5,425.4 551.6,425.5 553.6,425.5 555.6,425.5 557.7,425.4 559.7,425.5 561.8,425.6 563.8,425.7 565.9,425.7 567.9,425.8 570.0,425.8 572.0,425.8 574.1,425.8 576.1,425.2 578.1,425.2 580.2,425.2 582.2,425.3 584.3,425.1 586.3,425.2 588.4,425.3 590.4,425.5 592.5,425.4 594.5,425.5 596.5,425.5 598.6,425.5 600.6,425.5 602.7,425.3 604.7,425.2 606.8,425.2 608.8,425.2 610.9,425.2 612.9,425.2 615.0,425.2 617.0,425.7" fill="none" stroke="#f0c000" stroke-width="1.00" stroke-linejoin="round"/>
<polyline points="5.5,411.0 7.5,411.2 9.6,414.3 11.6,418.2 13.7,421.3 15.7,422.1 17.8,422.3 19.8,422.2 21.9,421.8 23.9,422.7 26.0,422.1 28.0,422.2 30.0,420.9 32.1,420.2 34.1,420.1 36.2,420.9 38.2,420.5 40.3,420.9 42.3,422.2 44.4,422.0 46.4,421.8 48.4,421.1 50.5,421.8 52.5,421.7 54.6,421.8 56.6,421.6 58.7,422.6 60.7,422.8 62.8,422.9 64.8,423.4 66.9,423.8 68.9,423.9 70.9,423.9 73.0,424.3 75.0,424.3 77.1,424.3 79.1,424.4 81.2,424.9 83.2,424.8 85.3,425.2 87.3,425.7 89.4,425.7 91.4,425.8 93.4,425.3 95.5,424.7 97.5,424.9 99.6,424.7 101.6,424.4 103.7,424.5 105.7,424.7 107.8,424.2 109.8,423.7 111.8,420.6 113.9,419.3 115.9,419.5 118.0,420.1 120.0,420.9 122.1,424.1 124.1,425.9 126.2,425.6 128.2,425.2 130.3,425.4 132.3,425.5 134.3,425.1 136.4,425.2 138.4,424.9 140.5,424.5 142.5,424.1 144.6,424.4 146.6,425.0 148.7,425.2 150.7,425.3 152.8,425.8 154.8,425.7 156.8,425.8 158.9,425.8 160.9,426.0 163.0,425.5 165.0,425.0 167.1,424.7 169.1,425.0 171.2,425.2 173.2,425.3 175.2,425.3 177.3,425.7 179.3,425.7 181.4,425.3 183.4,425.7 185.5,426.0 187.5,425.9 189.6,425.8 191.6,425.6 193.7,425.7 195.7,425.7 197.7,425.5 199.8,425.3 201.8,425.8 203.9,425.2 205.9,425.0 208.0,425.4 210.0,425.7 212.1,425.8 214.1,425.9 216.2,425.9 218.2,425.4 220.2,425.1 222.3,424.8 224.3,424.8 226.4,425.2 228.4,425.7 230.5,425.8 232.5,425.9 234.6,426.5 236.6,426.1 238.6,426.1 240.7,426.4 242.7,426.7 244.8,426.3 246.8,426.7 248.9,426.6 250.9,426.4 253.0,425.8 255.0,426.2 257.1,425.7 259.1,425.4 261.1,425.6 263.2,425.7 265.2,425.2 267.3,425.5 269.3,425.9 271.4,425.8 273.4,426.1 275.5,426.5 277.5,426.7 279.6,426.7 281.6,426.6 283.6,426.5 285.7,426.0 287.7,426.1 289.8,426.2 291.8,425.9 293.9,425.9 295.9,426.3 298.0,426.2 300.0,425.8 302.0,426.1 304.1,426.2 306.1,425.7 308.2,425.9 310.2,425.9 312.3,425.7 314.3,425.6 316.4,425.8 318.4,425.8 320.5,425.6 322.5,426.0 324.5,426.2 326.6,426.3 328.6,425.8 330.7,425.9 332.7,425.4 334.8,425.2 336.8,424.8 338.9,425.2 340.9,425.4 342.9,425.6 345.0,425.8 347.0,426.4 349.1,426.1 351.1,426.2 353.2,425.9 355.2,425.7 357.3,425.8 359.3,426.2 361.4,426.3 363.4,426.7 365.4,427.0 367.5,426.6 369.5,426.5 371.6,426.3 373.6,426.3 375.7,425.7 377.7,425.9 379.8,426.0 381.8,425.6 383.9,425.2 385.9,425.9 387.9,425.6 390.0,425.2 392.0,425.2 394.1,425.5 396.1,425.0 398.2,425.1 400.2,425.5 402.3,426.1 404.3,426.4 406.3,426.8 408.4,427.2 410.4,427.2 412.5,427.2 414.5,427.1 416.6,427.0 418.6,404.5 420.7,403.9 422.7,403.3 424.8,402.9 426.8,403.0 428.8,425.2 430.9,425.2 432.9,425.5 435.0,425.8 437.0,425.2 439.1,425.0 441.1,425.3 443.2,425.4 445.2,425.2 447.3,425.3 449.3,425.8 451.3,425.9 453.4,425.6 455.4,425.9 457.5,426.2 459.5,426.0 461.6,425.3 463.6,425.2 465.7,425.1 467.7,424.2 469.7,424.0 471.8,425.0 473.8,425.4 475.9,425.4 477.9,426.3 480.0,426.2 482.0,425.9 484.1,425.5 486.1,424.2 488.2,423.9 490.2,424.4 492.2,424.4 494.3,422.9 496.3,419.9 498.4,420.4 500.4,420.6 502.5,420.8 504.5,422.6 506.6,426.6 508.6,426.5 510.7,426.1 512.7,425.7 514.7,425.5 516.8,425.7 518.8,425.4 520.9,425.5 522.9,425.2 525.0,425.3 527.0,424.9 529.1,425.1 531.1,425.0 533.1,425.6 535.2,425.9 537.2,426.2 539.3,426.3 541.3,426.2 543.4,426.2 545.4,425.5 547.5,425.3 549.5,424.8 551.6,425.2 553.6,424.8 555.6,425.2 557.7,425.3 559.7,425.7 561.8,425.9 563.8,426.0 565.9,426.1 567.9,426.5 570.0,426.5 572.0,425.9 574.1,426.1 576.1,423.8 578.1,423.7 580.2,423.6 582.2,424.2 584.3,423.7 586.3,425.8 588.4,425.8 590.4,426.0 592.5,425.8 594.5,426.1 596.5,426.1 598.6,425.9 600.6,426.1 602.7,425.4 604.7,425.0 606.8,425.2 608.8,425.4 610.9,425.1 612.9,425.5 615.0,425.9 617.0,425.9" fill="none" stroke="#e040c0" stroke-width="1.00" stroke-linejoin="round"/><line x1="644" y1="54.2" x2="649" y2="54.2" stroke="#777"/><line x1="644" y1="59.6" x2="646" y2="59.6" stroke="#777"/><line x1="644" y1="65.0" x2="646" y2="65.0" stroke="#777"/><line x1="644" y1="70.4" x2="646" y2="70.4" stroke="#777"/><line x1="644" y1="75.8" x2="646" y2="75.8" stroke="#777"/><line x1="644" y1="81.2" x2="649" y2="81.2" stroke="#777"/><line x1="644" y1="86.6" x2="646" y2="86.6" stroke="#777"/><line x1="644" y1="92.0" x2="646" y2="92.0" stroke="#777"/><line x1="644" y1="97.4" x2="646" y2="97.4" stroke="#777"/><line x1="644" y1="102.8" x2="646" y2="102.8" stroke="#777"/><line x1="644" y1="108.2" x2="649" y2="108.2" stroke="#777"/><line x1="644" y1="113.6" x2="646" y2="113.6" stroke="#777"/><line x1="644" y1="119.0" x2="646" y2="119.0" stroke="#777"/><line x1="644" y1="124.4" x2="646" y2="124.4" stroke="#777"/><line x1="644" y1="129.8" x2="646" y2="129.8" stroke="#777"/><line x1="644" y1="135.2" x2="649" y2="135.2" stroke="#777"/><line x1="644" y1="140.6" x2="646" y2="140.6" stroke="#777"/><line x1="644" y1="146.0" x2="646" y2="146.0" stroke="#777"/><line x1="644" y1="151.4" x2="646" y2="151.4" stroke="#777"/><line x1="644" y1="156.8" x2="646" y2="156.8" stroke="#777"/><line x1="644" y1="162.2" x2="649" y2="162.2" stroke="#777"/><line x1="644" y1="167.6" x2="646" y2="167.6" stroke="#777"/><line x1="644" y1="173.0" x2="646" y2="173.0" stroke="#777"/><line x1="644" y1="178.4" x2="646" y2="178.4" stroke="#777"/><line x1="644" y1="183.8" x2="646" y2="183.8" stroke="#777"/><line x1="644" y1="189.2" x2="649" y2="189.2" stroke="#777"/><line x1="644" y1="194.6" x2="646" y2="194.6" stroke="#777"/><line x1="644" y1="200.0" x2="646" y2="200.0" stroke="#777"/><line x1="644" y1="205.4" x2="646" y2="205.4" stroke="#777"/><line x1="644" y1="210.8" x2="646" y2="210.8" stroke="#777"/><line x1="644" y1="216.2" x2="649" y2="216.2" stroke="#777"/><line x1="644" y1="221.6" x2="646" y2="221.6" stroke="#777"/><line x1="644" y1="227.0" x2="646" y2="227.0" stroke="#777"/><line x1="644" y1="232.4" x2="646" y2="232.4" stroke="#777"/><line x1="644" y1="237.8" x2="646" y2="237.8" stroke="#777"/><line x1="644" y1="243.2" x2="649" y2="243.2" stroke="#777"/><line x1="644" y1="248.6" x2="646" y2="248.6" stroke="#777"/><line x1="644" y1="254.0" x2="646" y2="254.0" stroke="#777"/><line x1="644" y1="259.4" x2="646" y2="259.4" stroke="#777"/><line x1="644" y1="264.8" x2="646" y2="264.8" stroke="#777"/><line x1="644" y1="270.2" x2="649" y2="270.2" stroke="#777"/><line x1="644" y1="275.6" x2="646" y2="275.6" stroke="#777"/><line x1="644" y1="281.0" x2="646" y2="281.0" stroke="#777"/><line x1="644" y1="286.4" x2="646" y2="286.4" stroke="#777"/><line x1="644" y1="291.8" x2="646" y2="291.8" stroke="#777"/><line x1="644" y1="297.2" x2="649" y2="297.2" stroke="#777"/><line x1="644" y1="330.6" x2="649" y2="330.6" stroke="#777"/><line x1="644" y1="340.6" x2="646" y2="340.6" stroke="#777"/><line x1="644" y1="350.6" x2="649" y2="350.6" stroke="#777"/><line x1="644" y1="360.6" x2="646" y2="360.6" stroke="#777"/><line x1="644" y1="370.6" x2="649" y2="370.6" stroke="#777"/><line x1="644" y1="380.6" x2="646" y2="380.6" stroke="#777"/><line x1="644" y1="390.6" x2="649" y2="390.6" stroke="#777"/><line x1="644" y1="400.6" x2="646" y2="400.6" stroke="#777"/><line x1="644" y1="410.6" x2="649" y2="410.6" stroke="#777"/><line x1="644" y1="420.6" x2="646" y2="420.6" stroke="#777"/><line x1="644" y1="430.6" x2="649" y2="430.6" stroke="#777"/><line x1="644" y1="320.6" x2="646" y2="320.6" stroke="#777"/><line x1="644" y1="310.6" x2="646" y2="310.6" stroke="#777"/><line x1="69.5" y1="431" x2="69.5" y2="436" stroke="#999"/><line x1="111.5" y1="431" x2="111.5" y2="436" stroke="#999"/><line x1="154.5" y1="431" x2="154.5" y2="436" stroke="#999"/><line x1="197.5" y1="431" x2="197.5" y2="436" stroke="#999"/><line x1="238.5" y1="431" x2="238.5" y2="436" stroke="#999"/><line x1="274.5" y1="431" x2="274.5" y2="436" stroke="#999"/><line x1="319.5" y1="431" x2="319.5" y2="436" stroke="#999"/><line x1="360.5" y1="431" x2="360.5" y2="436" stroke="#999"/><line x1="401.5" y1="431" x2="401.5" y2="436" stroke="#999"/><line x1="444.5" y1="431" x2="444.5" y2="436" stroke="#999"/><line x1="486.5" y1="431" x2="486.5" y2="436" stroke="#999"/><line x1="532.5" y1="431" x2="532.5" y2="436" stroke="#999"/><line x1="570.5" y1="431" x2="570.5" y2="436" stroke="#999"/><line x1="611.5" y1="431" x2="611.5" y2="436" stroke="#999"/>
</svg>
<div style="position:absolute;left:8px;top:45px;width:3px;height:3px;background:#b8b8b8;border:1px solid #888;"></div>
<div style="position:absolute;left:13px;top:42px;width:24px;height:10px;background:#d8e6d4;border:1px solid #c8d4c4;"></div>
<div style="position:absolute;left:42px;top:45px;width:3px;height:3px;background:#b8b8b8;border:1px solid #888;"></div>
<svg style="position:absolute;left:9px;top:57px" width="12" height="12"><rect x="0.5" y="0.5" width="11" height="11" rx="1.5" fill="#d8d8d8" stroke="#333"/><rect x="2" y="2" width="8" height="8" fill="#c0c0c0"/><line x1="4.5" y1="2" x2="4.5" y2="10" stroke="#fff"/><line x1="7.5" y1="2" x2="7.5" y2="10" stroke="#fff"/><line x1="2" y1="3.5" x2="10" y2="3.5" stroke="#888"/></svg>
<svg style="position:absolute;left:102px;top:104px" width="16" height="10"><line x1="0" y1="4.5" x2="9" y2="4.5" stroke="#e82020" stroke-width="1.5"/><polygon points="8,0 14,4.5 8,9" fill="#e82020"/></svg>
<svg style="position:absolute;left:17px;top:279px" width="14" height="11"><line x1="4" y1="5.5" x2="13" y2="5.5" stroke="#1830e0" stroke-width="1.5"/><polygon points="7,0 1,5.5 7,11" fill="#1830e0"/></svg>
<svg style="position:absolute;left:437px;top:243px" width="8" height="5"><polygon points="0,0 7,0 3.5,4" fill="#e81010"/></svg>
<div style="position:absolute;left:647px;top:226px;width:49px;height:11px;background:#e81010;"></div>
<div style="position:absolute;left:648px;top:410px;width:48px;height:11px;background:#1a5fd0;"></div>
<svg style="position:absolute;left:689px;top:305px" width="8" height="7"><rect x="0" y="0" width="7" height="6" fill="#404040"/><path d="M2 4 L5 1.5 M3 1.5 h2 v2" stroke="#fff" stroke-width="0.8" fill="none"/></svg>
<div style="position:absolute;left:7px;top:307px;width:3px;height:3px;background:#b8b8b8;border:1px solid #888;"></div>
<svg style="position:absolute;left:0;top:0" width="700" height="436" font-family="Liberation Sans, sans-serif">
<g fill="none" stroke="#222" stroke-width="1.10" stroke-linecap="square"><path d="M26.34 5.80 L31.16 5.80 M28.75 5.80 L26.07 9.58 M28.48 6.93 L31.43 9.58 M24.57 11.41 L32.93 11.41 M28.75 11.41 L28.75 14.80 M36.16 6.16 L34.07 9.94 M35.95 7.11 L38.25 9.94 M40.55 5.80 L40.55 11.38 M35.32 11.92 L41.18 11.92 L41.18 14.80"/></g>
<g fill="none" stroke="#222" stroke-width="1.10" stroke-linecap="square"><path d="M61.82 6.16 L65.78 6.16 M63.80 6.16 L61.60 9.94 M63.58 7.29 L66.00 9.94 M69.61 5.80 L69.61 11.38 M67.03 8.48 L69.61 8.48 M62.92 11.92 L62.92 14.80 L69.08 14.80"/></g>
<text x="78.4" y="15.4" textLength="29.6" lengthAdjust="spacingAndGlyphs" fill="#fff" stroke="#fff" stroke-width="0.3" font-size="12.7" font-weight="normal">002380</text>
<g fill="none" stroke="#fff" stroke-width="1.10" stroke-linecap="square"><path d="M180.30 5.38 L178.10 9.37 M180.08 6.38 L182.50 9.37 M184.92 5.00 L184.92 10.89 M179.42 11.46 L179.42 14.50 L185.58 14.50"/></g>
<text x="190.6" y="14.5" textLength="15.4" lengthAdjust="spacingAndGlyphs" fill="#222" stroke="#222" stroke-width="0.3" font-size="12.0" font-weight="normal">KCC</text>
<g fill="none" stroke="#fff" stroke-width="1.10" stroke-linecap="square"><path d="M259.68 5.80 L259.68 11.38 M254.73 11.92 L260.27 11.92 L260.27 13.36 L254.73 13.36 L254.73 14.80 L260.27 14.80"/><ellipse cx="255.52" cy="8.05" rx="1.98" ry="1.89"/></g>
<g fill="none" stroke="#222" stroke-width="1.10" stroke-linecap="square"><path d="M271.22 5.80 L275.78 5.80 M273.50 5.80 L270.97 9.58 M273.25 6.93 L276.03 9.58 M269.54 11.41 L277.46 11.41 M273.50 11.41 L273.50 14.80"/></g>
<g fill="none" stroke="#222" stroke-width="1.10" stroke-linecap="square"><path d="M285.38 9.39 L291.46 9.39 M288.42 9.39 L288.42 11.38 M293.18 5.80 L293.18 11.65 M291.10 8.61 L293.18 8.61 M286.39 12.10 L292.30 12.10 L292.30 13.45 L286.39 13.45 L286.39 14.80 L292.30 14.80"/><ellipse cx="288.12" cy="7.24" rx="2.32" ry="1.44"/></g>
<g fill="none" stroke="#222" stroke-width="1.10" stroke-linecap="square"><path d="M300.51 6.16 L300.51 9.94 L304.25 9.94 M307.32 5.80 L307.32 11.38 M305.13 7.64 L307.32 7.64 M305.13 9.32 L307.32 9.32 M301.63 11.92 L301.63 14.80 L306.87 14.80"/></g>
<g fill="none" stroke="#222" stroke-width="1.10" stroke-linecap="square"><path d="M319.92 5.80 L319.92 8.68 L324.68 8.68 L324.68 5.80 M319.92 7.24 L324.68 7.24 M318.34 9.39 L326.26 9.39 M322.30 9.39 L322.30 11.38 M319.53 12.10 L319.53 14.80 L325.07 14.80"/></g>
<g fill="none" stroke="#222" stroke-width="1.10" stroke-linecap="square"><path d="M338.50 6.16 L334.54 6.16 L334.54 9.94 L338.50 9.94 M334.54 8.05 L338.50 8.05 M340.68 5.80 L340.68 11.38 M335.73 11.92 L341.27 11.92 L341.27 14.80"/></g>
<text x="354.5" y="14.5" textLength="3.2" lengthAdjust="spacingAndGlyphs" fill="#808080" stroke="#808080" stroke-width="0.3" font-size="12.0" font-weight="normal">1</text>
<text x="370.0" y="14.5" textLength="5.0" lengthAdjust="spacingAndGlyphs" fill="#808080" stroke="#808080" stroke-width="0.3" font-size="12.0" font-weight="normal">3</text>
<text x="385.3" y="14.5" textLength="5.2" lengthAdjust="spacingAndGlyphs" fill="#808080" stroke="#808080" stroke-width="0.3" font-size="12.0" font-weight="normal">5</text>
<text x="399.8" y="14.5" textLength="9.0" lengthAdjust="spacingAndGlyphs" fill="#808080" stroke="#808080" stroke-width="0.3" font-size="12.0" font-weight="normal">10</text>
<text x="415.0" y="14.5" textLength="9.8" lengthAdjust="spacingAndGlyphs" fill="#808080" stroke="#808080" stroke-width="0.3" font-size="12.0" font-weight="normal">20</text>
<text x="430.6" y="14.5" textLength="9.7" lengthAdjust="spacingAndGlyphs" fill="#808080" stroke="#808080" stroke-width="0.3" font-size="12.0" font-weight="normal">30</text>
<text x="446.7" y="14.5" textLength="9.6" lengthAdjust="spacingAndGlyphs" fill="#808080" stroke="#808080" stroke-width="0.3" font-size="12.0" font-weight="normal">60</text>
<text x="460.8" y="14.5" textLength="13.5" lengthAdjust="spacingAndGlyphs" fill="#808080" stroke="#808080" stroke-width="0.3" font-size="12.0" font-weight="normal">120</text>
<text x="517.3" y="14.5" textLength="14.8" lengthAdjust="spacingAndGlyphs" fill="#222" stroke="#222" stroke-width="0.3" font-size="12.0" font-weight="normal">300</text>
<text x="535.0" y="14.5" textLength="19.4" lengthAdjust="spacingAndGlyphs" fill="#444" stroke="#444" stroke-width="0.3" font-size="12.0" font-weight="normal">/600</text>
<text x="631.0" y="14.4" textLength="50.5" lengthAdjust="spacingAndGlyphs" fill="#222" stroke="#222" stroke-width="0.3" font-size="12.3" font-weight="normal">2016/11/03</text>
<text transform="scale(0.7553,1)" x="25.90 32.86 39.82 46.96 50.96 57.92 64.88" y="33.7" fill="#e83838" stroke="#e83838" stroke-width="0.3" font-size="11.3">388,500</text>
<text transform="scale(0.7183,1)" x="114.51 121.64 125.64 132.60 139.57" y="33.7" fill="#e83838" stroke="#e83838" stroke-width="0.3" font-size="11.3">1,000</text>
<text transform="scale(0.7243,1)" x="160.34 167.46 174.59 178.59 185.55 191.86" y="33.7" fill="#e83838" stroke="#e83838" stroke-width="0.3" font-size="11.3">+0.26%</text>
<text transform="scale(0.7542,1)" x="233.70 240.66 247.80 251.80 258.76 265.72" y="33.7" fill="#333" stroke="#333" stroke-width="0.3" font-size="11.3">26,882</text>
<text transform="scale(0.7243,1)" x="309.60 316.56 323.69 327.69 334.66 340.96" y="33.7" fill="#2e66d0" stroke="#2e66d0" stroke-width="0.3" font-size="11.3">90.45%</text>
<text transform="scale(0.7081,1)" x="372.59 379.72 383.73 390.69 396.99" y="33.7" fill="#333" stroke="#333" stroke-width="0.3" font-size="11.3">0.25%</text>
<text transform="scale(0.7055,1)" x="435.52 442.48 449.61 453.62 460.58 467.54" y="33.7" fill="#333" stroke="#333" stroke-width="0.3" font-size="11.3">10,383</text>
<g fill="none" stroke="#333" stroke-width="1.10" stroke-linecap="square"><path d="M335.60 25.55 L335.60 29.25 L340.00 29.25 L340.00 25.55 M335.60 27.40 L340.00 27.40 M341.23 25.20 L341.23 30.66 M341.23 27.82 L342.62 27.82 M343.81 25.20 L343.81 30.66 M336.92 31.18 L343.08 31.18 L343.08 34.00 M345.60 25.55 L350.00 25.55 L350.00 29.25 L345.60 29.25 L345.60 25.55 M352.02 25.20 L352.02 30.66 M352.02 27.82 L354.40 27.82 M346.92 31.18 L346.92 34.00 L353.08 34.00"/></g>
<g fill="none" stroke="#333" stroke-width="1.10" stroke-linecap="square"><path d="M364.00 24.76 L364.00 25.50 M361.92 25.75 L366.07 25.75 M364.00 25.75 L361.69 28.90 M363.77 26.75 L366.31 28.90 M364.29 29.66 L364.29 32.98 M361.27 32.98 L367.31 32.98 M368.07 25.20 L368.07 34.00 M370.81 30.68 L379.19 30.68 M375.00 30.68 L375.00 34.00 M382.44 25.55 L380.34 29.25 M382.23 26.48 L384.53 29.25 M387.97 25.20 L387.97 30.66 M385.52 27.82 L387.97 27.82 M381.60 31.18 L381.60 34.00 L387.47 34.00"/><ellipse cx="375.00" cy="27.05" rx="2.68" ry="1.85"/></g>
<text transform="scale(0.7531,1)" x="526.16 533.12 540.08 547.21 551.21 558.18 565.14" y="33.7" fill="#e83838" stroke="#e83838" stroke-width="0.3" font-size="11.3">389,000</text>
<text transform="scale(0.7553,1)" x="579.85 586.81 593.77 600.91 604.91 611.87 618.83" y="33.7" fill="#e83838" stroke="#e83838" stroke-width="0.3" font-size="11.3">388,500</text>
<g fill="none" stroke="#333" stroke-width="1.10" stroke-linecap="square"><path d="M478.23 26.26 L476.16 32.94 M478.03 27.93 L480.30 32.94 M482.57 25.20 L482.57 34.00"/></g>
<text transform="scale(0.7618,1)" x="640.91 647.87 654.83 661.96 665.97 672.93 679.89" y="33.7" fill="#2e66d0" stroke="#2e66d0" stroke-width="0.3" font-size="11.3">387,000</text>
<g fill="none" stroke="#333" stroke-width="1.10" stroke-linecap="square"><path d="M527.73 25.20 L532.97 25.20 L532.97 28.90 M530.35 29.66 L530.35 32.98 M526.26 32.98 L534.44 32.98"/></g>
<text transform="scale(0.7553,1)" x="713.97 720.93 727.89 735.02 739.03 745.99 752.95" y="33.7" fill="#e83838" stroke="#e83838" stroke-width="0.3" font-size="11.3">390,000</text>
<g fill="none" stroke="#333" stroke-width="1.10" stroke-linecap="square"><path d="M577.55 26.26 L581.20 26.26 M579.38 26.26 L577.35 32.94 M579.17 28.26 L581.40 32.94 M584.72 25.20 L584.72 34.00 M582.35 29.42 L584.72 29.42"/></g>
<text transform="scale(0.7444,1)" x="792.64 799.60 806.56 813.70 817.70 824.66 831.62" y="33.7" fill="#2e66d0" stroke="#2e66d0" stroke-width="0.3" font-size="11.3">383,000</text>
<g fill="none" stroke="#333" stroke-width="1.10" stroke-linecap="square"><path d="M636.63 26.26 L641.25 26.26 L641.25 32.94 L636.63 32.94 L636.63 26.26 M642.54 25.20 L642.54 34.00 M642.54 29.42 L644.00 29.42 M645.25 25.20 L645.25 34.00 M651.75 25.20 L648.79 28.90 M651.45 26.12 L654.71 28.90 M647.13 30.68 L656.37 30.68 M651.75 30.68 L651.75 34.00"/></g>
<g fill="none" stroke="#333" stroke-width="1.10" stroke-linecap="square"><path d="M670.63 26.26 L675.25 26.26 L675.25 32.94 L670.63 32.94 L670.63 26.26 M676.54 25.20 L676.54 34.00 M676.54 29.42 L678.00 29.42 M679.25 25.20 L679.25 34.00 M688.71 25.20 L682.79 25.20 L682.79 28.90 L688.71 28.90 M685.75 29.66 L685.75 32.98 M681.13 32.98 L690.37 32.98"/></g>
<text transform="scale(0.9714,1)" x="16.90 23.88 31.19" y="52.0" fill="#555" stroke="#555" stroke-width="0.3" font-size="11.8">KCC</text>
<g fill="none" stroke="#e0309a" stroke-width="1.10" stroke-linecap="square"><path d="M54.82 43.00 L59.38 43.00 M57.10 43.00 L54.57 45.88 M56.85 43.86 L59.63 45.88 M57.10 45.98 L57.10 47.97 M52.88 47.97 L61.32 47.97 M62.48 44.08 L66.70 44.08 L66.70 50.92 M68.64 43.00 L68.64 52.00 M68.64 47.32 L70.92 47.32"/><ellipse cx="57.10" cy="50.65" rx="2.96" ry="1.35"/></g>
<g fill="none" stroke="#e0309a" stroke-width="1.10" stroke-linecap="square"><path d="M80.05 43.36 L75.96 43.36 L75.96 47.14 L80.05 47.14 M81.93 43.00 L81.93 48.58 M81.93 45.68 L84.14 45.68 M77.19 49.12 L77.19 52.00 L82.91 52.00 M89.35 43.00 L86.89 45.88 M89.10 43.72 L91.81 45.88 M85.26 46.59 L93.44 46.59 M89.35 46.59 L89.35 48.58 M86.49 49.30 L86.49 52.00 L92.21 52.00"/></g>
<text transform="scale(0.6625,1)" x="149.19" y="52.0" fill="#e0309a" stroke="#e0309a" stroke-width="0.3" font-size="12.0">5</text>
<text transform="scale(0.6481,1)" x="171.17 178.65" y="52.0" fill="#2050b0" stroke="#2050b0" stroke-width="0.3" font-size="12.1">10</text>
<text transform="scale(0.7150,1)" x="177.73 185.21" y="52.0" fill="#f0b020" stroke="#f0b020" stroke-width="0.3" font-size="12.1">20</text>
<text transform="scale(0.6415,1)" x="224.86 232.35" y="52.0" fill="#20a040" stroke="#20a040" stroke-width="0.3" font-size="12.1">60</text>
<text transform="scale(0.6236,1)" x="258.54 266.02 273.50" y="52.0" fill="#707070" stroke="#707070" stroke-width="0.3" font-size="12.1">120</text>
<g fill="none" stroke="#e82020" stroke-width="1.10" stroke-linecap="square"><path d="M9.79 102.23 L9.79 103.01 M7.59 103.29 L11.99 103.29 M9.79 103.29 L7.35 106.61 M9.55 104.34 L12.24 106.61 M10.11 107.42 L10.11 110.92 M6.91 110.92 L13.31 110.92 M14.11 102.70 L14.11 112.00 M18.61 102.70 L24.29 102.70 L24.29 106.61 M21.45 107.42 L21.45 110.92 M17.01 110.92 L25.89 110.92"/></g>
<text transform="scale(0.6965,1)" x="42.00 49.40 56.80 64.38 68.63 76.03 83.42" y="112.0" fill="#e82020" stroke="#e82020" stroke-width="0.3" font-size="12.0">482,000</text>
<text transform="scale(0.7176,1)" x="91.78 96.92 104.31 112.82 118.00 125.39 133.20" y="112.0" fill="#e82020" stroke="#e82020" stroke-width="0.3" font-size="12.0">(11/04)</text>
<g fill="none" stroke="#2030d8" stroke-width="1.10" stroke-linecap="square"><path d="M34.79 278.55 L34.79 279.30 M32.66 279.57 L36.93 279.57 M34.79 279.57 L32.42 282.78 M34.55 280.59 L37.16 282.78 M35.09 283.56 L35.09 286.96 M31.99 286.96 L38.20 286.96 M38.97 279.00 L38.97 288.00 M42.00 280.08 L45.88 280.08 M43.94 280.08 L41.79 286.92 M43.73 282.13 L46.10 286.92 M49.64 279.00 L49.64 288.00 M47.11 283.32 L49.64 283.32"/></g>
<text transform="scale(0.6965,1)" x="78.46 85.59 92.73 100.04 104.14 111.28 118.41" y="288.0" fill="#2030d8" stroke="#2030d8" stroke-width="0.3" font-size="11.5">348,500</text>
<text transform="scale(0.7262,1)" x="125.38 130.34 137.47 145.68 150.67 157.80 165.34" y="288.0" fill="#2030d8" stroke="#2030d8" stroke-width="0.3" font-size="11.5">(08/25)</text>
<g fill="none" stroke="#606060" stroke-width="1.10" stroke-linecap="square"><path d="M409.19 221.76 L409.19 229.14 L413.50 229.14 L413.50 221.76 M409.19 225.45 L413.50 225.45 M414.71 220.60 L414.71 230.30 M414.71 225.26 L416.07 225.26 M417.23 220.60 L417.23 230.30 M423.30 220.99 L418.99 220.99 L418.99 225.06 L423.30 225.06 M425.28 220.60 L425.28 226.61 M425.28 223.49 L427.61 223.49 M428.79 220.99 L433.10 220.99 L433.10 223.03 L428.79 223.03 L428.79 225.06 L433.10 225.06 M435.08 220.60 L435.08 226.61 M435.08 223.49 L437.41 223.49 M430.08 227.20 L436.12 227.20 L436.12 230.30"/><ellipse cx="423.30" cy="228.75" rx="3.02" ry="1.55"/></g>
<text transform="scale(0.7006,1)" x="626.00 631.32 639.17 643.57 651.23 658.16 669.65" y="230.3" fill="#606060" stroke="#606060" stroke-width="0.3" font-size="12.4">(0.00%)</text>
<text transform="scale(0.7881,1)" x="819.37 825.40 833.47 837.47 844.43 851.56 855.57 862.53" y="51.0" fill="#e03030" stroke="#e03030" stroke-width="0.3" font-size="11.3">LC:11.48</text>
<text transform="scale(0.7642,1)" x="844.02 851.42 859.99 865.02 870.53 877.93 885.51 889.76 897.15" y="61.0" fill="#2060d0" stroke="#2060d0" stroke-width="0.3" font-size="12.0">HC:-19.40</text>
<text transform="scale(0.6944,1)" x="937.67 944.89 952.11 959.52 963.67 970.89 978.11" y="84.5" fill="#555" stroke="#555" stroke-width="0.3" font-size="11.7">500,000</text>
<text transform="scale(0.6944,1)" x="937.67 944.89 952.11 959.52 963.67 970.89 978.11" y="111.5" fill="#555" stroke="#555" stroke-width="0.3" font-size="11.7">480,000</text>
<text transform="scale(0.6944,1)" x="937.67 944.89 952.11 959.52 963.67 970.89 978.11" y="138.5" fill="#555" stroke="#555" stroke-width="0.3" font-size="11.7">460,000</text>
<text transform="scale(0.6944,1)" x="937.67 944.89 952.11 959.52 963.67 970.89 978.11" y="165.5" fill="#555" stroke="#555" stroke-width="0.3" font-size="11.7">440,000</text>
<text transform="scale(0.6944,1)" x="937.67 944.89 952.11 959.52 963.67 970.89 978.11" y="192.5" fill="#555" stroke="#555" stroke-width="0.3" font-size="11.7">420,000</text>
<text transform="scale(0.6944,1)" x="937.67 944.89 952.11 959.52 963.67 970.89 978.11" y="219.5" fill="#555" stroke="#555" stroke-width="0.3" font-size="11.7">400,000</text>
<text transform="scale(0.6944,1)" x="937.67 944.89 952.11 959.52 963.67 970.89 978.11" y="273.5" fill="#555" stroke="#555" stroke-width="0.3" font-size="11.7">360,000</text>
<text transform="scale(0.6923,1)" x="939.93 947.15 954.38 961.78 965.93 973.15 980.37" y="333.4" fill="#555" stroke="#555" stroke-width="0.3" font-size="11.7">500,000</text>
<text transform="scale(0.6923,1)" x="939.93 947.15 954.38 961.78 965.93 973.15 980.37" y="353.4" fill="#555" stroke="#555" stroke-width="0.3" font-size="11.7">400,000</text>
<text transform="scale(0.6923,1)" x="939.93 947.15 954.38 961.78 965.93 973.15 980.37" y="373.4" fill="#555" stroke="#555" stroke-width="0.3" font-size="11.7">300,000</text>
<text transform="scale(0.6923,1)" x="939.93 947.15 954.38 961.78 965.93 973.15 980.37" y="393.4" fill="#555" stroke="#555" stroke-width="0.3" font-size="11.7">200,000</text>
<text transform="scale(0.6923,1)" x="939.93 947.15 954.38 961.78 965.93 973.15 980.37" y="413.4" fill="#555" stroke="#555" stroke-width="0.3" font-size="11.7">100,000</text>
<text transform="scale(0.7008,1)" x="929.32 936.46 943.59 950.90 955.01 962.14 969.28" y="235.6" fill="#fff" stroke="#fff" stroke-width="0.3" font-size="11.5">388,500</text>
<text transform="scale(0.7256,1)" x="897.59 904.73 908.73 915.69 921.99" y="245.5" fill="#e83030" stroke="#e83030" stroke-width="0.3" font-size="11.3">0.26%</text>
<text transform="scale(0.6899,1)" x="943.59 950.81 958.21 962.37 969.59 976.81" y="419.8" fill="#fff" stroke="#fff" stroke-width="0.3" font-size="11.7">26,882</text>
<text transform="scale(0.6982,1)" x="932.39 939.61 947.01 951.17 958.39 964.93" y="429.8" fill="#2860d8" stroke="#2860d8" stroke-width="0.3" font-size="11.7">90.45%</text>
<g fill="none" stroke="#40a0a0" stroke-width="1.10" stroke-linecap="square"><path d="M17.57 306.08 L21.75 306.08 L21.75 312.92 M25.18 305.00 L25.18 314.00 M22.73 309.32 L25.18 309.32 M27.07 306.08 L31.25 306.08 L31.25 309.50 L27.07 309.50 L27.07 312.92 L31.25 312.92 M32.42 305.00 L32.42 314.00 M32.42 309.32 L33.74 309.32 M34.87 305.00 L34.87 314.00 M36.57 305.36 L40.75 305.36 L40.75 307.25 L36.57 307.25 L36.57 309.14 L40.75 309.14 M42.67 305.00 L42.67 310.58 M42.67 306.84 L44.93 306.84 M42.67 308.52 L44.93 308.52"/><ellipse cx="40.75" cy="312.56" rx="2.93" ry="1.44"/></g>
<g fill="none" stroke="#e0309a" stroke-width="1.10" stroke-linecap="square"><path d="M58.20 305.36 L54.15 305.36 L54.15 309.14 L58.20 309.14 M60.06 305.00 L60.06 310.58 M60.06 307.68 L62.25 307.68 M55.37 311.12 L55.37 314.00 L61.03 314.00 M67.40 305.00 L64.97 307.88 M67.16 305.72 L69.83 307.88 M63.35 308.59 L71.45 308.59 M67.40 308.59 L67.40 310.58 M64.57 311.30 L64.57 314.00 L70.23 314.00"/></g>
<text transform="scale(0.6399,1)" x="120.08" y="314.0" fill="#e0309a" stroke="#e0309a" stroke-width="0.3" font-size="12.4">5</text>
<text transform="scale(0.7259,1)" x="122.94 129.56" y="313.0" fill="#f0b020" stroke="#f0b020" stroke-width="0.3" font-size="10.7">20</text>
<text transform="scale(0.7259,1)" x="144.99 151.60" y="313.0" fill="#20a040" stroke="#20a040" stroke-width="0.3" font-size="10.7">60</text>
<text transform="scale(0.6553,1)" x="188.03 194.65 201.26" y="313.0" fill="#707070" stroke="#707070" stroke-width="0.3" font-size="10.7">120</text>
<text transform="scale(0.6841,1)" x="12.94 20.25 27.74 31.94 39.25 46.56" y="325.0" fill="#555" stroke="#555" stroke-width="0.3" font-size="11.8">26,882</text>
<g fill="none" stroke="#555" stroke-width="1.10" stroke-linecap="square"><path d="M39.49 316.00 L44.21 316.00 M41.85 316.00 L39.23 319.78 M41.59 317.13 L44.47 319.78 M37.76 321.61 L45.94 321.61 M41.85 321.61 L41.85 325.00"/></g>
<text transform="scale(0.7126,1)" x="65.75 70.82 78.13 85.62 89.83 97.14 103.75 114.72" y="325.0" fill="#555" stroke="#555" stroke-width="0.3" font-size="11.8">(90.45%)</text>
<text transform="scale(0.6792,1)" x="10.67 17.89 25.11 32.33 40.64 45.69 52.92" y="443.1" fill="#555" stroke="#555" stroke-width="0.3" font-size="11.7">2015/09</text>
<text transform="scale(0.6023,1)" x="117.07 124.30" y="443.1" fill="#555" stroke="#555" stroke-width="0.3" font-size="11.7">10</text>
<text transform="scale(0.6023,1)" x="187.96 195.19" y="443.1" fill="#555" stroke="#555" stroke-width="0.3" font-size="11.7">11</text>
<text transform="scale(0.6577,1)" x="237.54 244.77" y="443.1" fill="#555" stroke="#555" stroke-width="0.3" font-size="11.7">12</text>
<text transform="scale(0.6772,1)" x="292.01 299.23 306.46 313.68 321.98 327.04 334.26" y="443.1" fill="#555" stroke="#555" stroke-width="0.3" font-size="11.7">2016/01</text>
<text transform="scale(0.6646,1)" x="359.95 367.17" y="443.1" fill="#555" stroke="#555" stroke-width="0.3" font-size="11.7">02</text>
<text transform="scale(0.6923,1)" x="397.57 404.79" y="443.1" fill="#555" stroke="#555" stroke-width="0.3" font-size="11.7">03</text>
<text transform="scale(0.6854,1)" x="468.11 475.33" y="443.1" fill="#555" stroke="#555" stroke-width="0.3" font-size="11.7">04</text>
<text transform="scale(0.6785,1)" x="533.46 540.68" y="443.1" fill="#555" stroke="#555" stroke-width="0.3" font-size="11.7">05</text>
<text transform="scale(0.6716,1)" x="600.15 607.37" y="443.1" fill="#555" stroke="#555" stroke-width="0.3" font-size="11.7">06</text>
<text transform="scale(0.6785,1)" x="657.26 664.48" y="443.1" fill="#555" stroke="#555" stroke-width="0.3" font-size="11.7">07</text>
<text transform="scale(0.6577,1)" x="741.56 748.78" y="443.1" fill="#555" stroke="#555" stroke-width="0.3" font-size="11.7">08</text>
<text transform="scale(0.6231,1)" x="855.76 862.98" y="443.1" fill="#555" stroke="#555" stroke-width="0.3" font-size="11.7">09</text>
<text transform="scale(0.6231,1)" x="917.38 924.60" y="443.1" fill="#555" stroke="#555" stroke-width="0.3" font-size="11.7">10</text>
<text transform="scale(0.6231,1)" x="983.34 990.57" y="443.1" fill="#555" stroke="#555" stroke-width="0.3" font-size="11.7">11</text>
<text transform="scale(0.7423,1)" x="877.36 884.59 892.89 897.95 905.17" y="443.1" fill="#555" stroke="#555" stroke-width="0.3" font-size="11.7">11/03</text>
</svg>
</body></html>
